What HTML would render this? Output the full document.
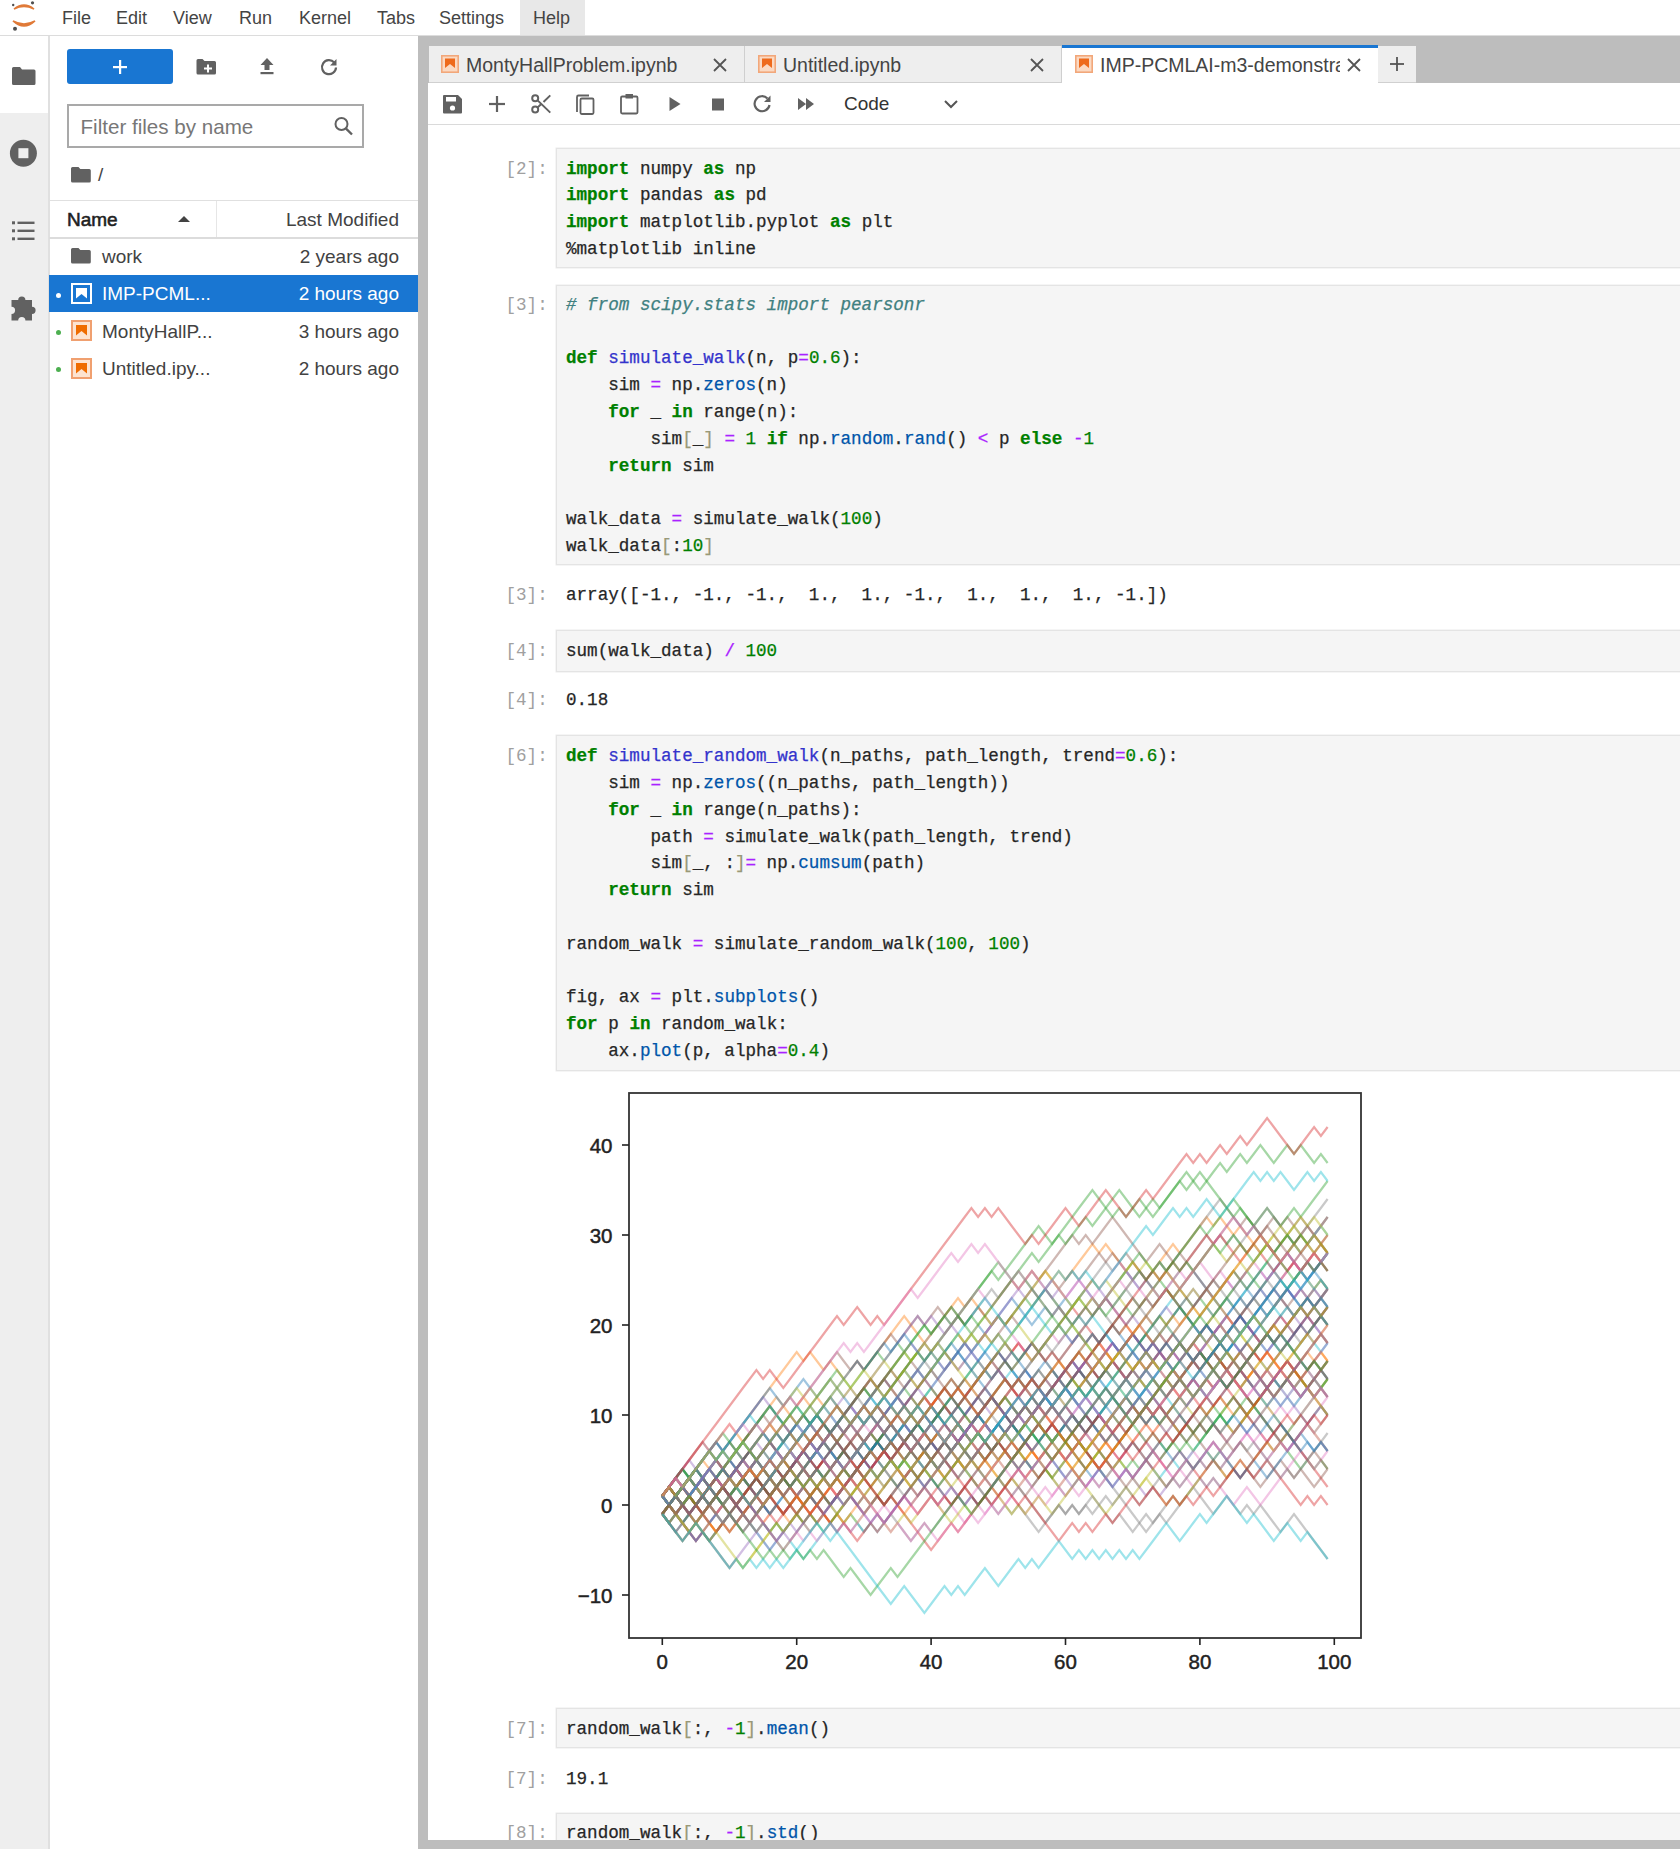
<!DOCTYPE html>
<html><head><meta charset="utf-8">
<style>
*{box-sizing:border-box;margin:0;padding:0}
html,body{width:1680px;height:1849px;overflow:hidden;background:#fff}
body{position:relative;font-family:"Liberation Sans",sans-serif;color:#333}
.abs{position:absolute}
.mono{font-family:"Liberation Mono",monospace}
#menubar{left:0;top:0;width:1680px;height:36px;border-bottom:1px solid #dcdcdc;background:#fff}
.mi{position:absolute;top:6px;font-size:18px;color:#444;line-height:24px;white-space:nowrap}
#leftbar{left:0;top:36px;width:50px;height:1813px;background:#eeeeee;border-right:2px solid #e0e0e0}
#leftactive{left:0;top:36px;width:48px;height:77px;background:#fff}
#filepanel{left:50px;top:36px;width:368px;height:1813px;background:#fff}
#splitter{left:418px;top:36px;width:10px;height:1813px;background:#bdbdbd}
#tabbar{left:428px;top:36px;width:1252px;height:47px;background:#bdbdbd}
.tab{position:absolute;top:10px;height:37px;background:#eeeeee;border-right:1px solid #cfcfcf;border-bottom:1px solid #d0d0d0}
.tabtxt{position:absolute;top:7px;font-size:19.5px;color:#444;white-space:nowrap;line-height:24px}
#toolbar{left:428px;top:83px;width:1252px;height:43px;background:#fff;border-bottom:2px solid #dadada}
#nb{left:428px;top:125px;width:1252px;height:1715px;background:#fff}
#bottombar{left:418px;top:1840px;width:1262px;height:9px;background:#bdbdbd}
.cell{position:absolute;left:556px;width:1130px;background:#f5f5f5;border:1px solid #e4e4e4;box-shadow:0 0 0 0.5px #ececec}
.prompt{position:absolute;left:505.5px;width:42px;text-align:left;font-family:"Liberation Mono",monospace;font-size:17.6px;color:#a0a0a0;line-height:27px;white-space:pre}
.code{position:absolute;left:566px;font-family:"Liberation Mono",monospace;font-size:17.6px;line-height:26.8px;color:#262626;white-space:pre;-webkit-text-stroke:0.25px currentColor}
.k{color:#008000;font-weight:bold}
.f{color:#0055aa}
.n{color:#008000}
.o{color:#aa22ff}
.c{color:#408080;font-style:italic}
.d{color:#3333cc}
.g{color:#999977}
.fr{font-size:19px;line-height:24px;color:#424242;white-space:nowrap}
.r{left:249px;width:150px;text-align:right}
</style></head><body>
<div id="menubar" class="abs">
<svg class="abs" style="left:0;top:0" width="48" height="36" viewBox="0 0 48 36">
<path d="M14 9 Q24 1 34 9 Q24 4 14 9Z" fill="#e07a38" stroke="#e07a38" stroke-width="1.5"/>
<path d="M13 21 Q24 31 35 21 Q24 27 13 21Z" fill="#e07a38" stroke="#e07a38" stroke-width="1.5"/>
<circle cx="13.2" cy="5" r="1.2" fill="#4e4e4e"/>
<circle cx="32.5" cy="2.8" r="1.6" fill="#4e4e4e"/>
<circle cx="15" cy="28.8" r="2" fill="#4e4e4e"/>
</svg>
<div class="abs" style="left:520px;top:0;width:65px;height:35px;background:#e8e8e8"></div>
<span class="mi" style="left:62px">File</span>
<span class="mi" style="left:116px">Edit</span>
<span class="mi" style="left:173px">View</span>
<span class="mi" style="left:239px">Run</span>
<span class="mi" style="left:299px">Kernel</span>
<span class="mi" style="left:377px">Tabs</span>
<span class="mi" style="left:439px">Settings</span>
<span class="mi" style="left:533px">Help</span>
</div>
<div id="leftbar" class="abs"></div>
<div id="leftactive" class="abs"></div>
<!-- sidebar icons -->
<svg class="abs" style="left:0;top:36px" width="48" height="300" viewBox="0 36 48 300">
<!-- folder -->
<path d="M12 67 h8 l2 2.5 h12 a1.5 1.5 0 0 1 1.5 1.5 v12.5 a1.5 1.5 0 0 1 -1.5 1.5 h-20.5 a1.5 1.5 0 0 1 -1.5 -1.5 v-15 a1.5 1.5 0 0 1 1.5 -1.5z" fill="#616161"/>
<!-- running -->
<circle cx="23.4" cy="153.2" r="13.5" fill="#616161"/>
<rect x="18.4" y="148.2" width="10" height="10" fill="#eeeeee"/>
<!-- toc -->
<rect x="12" y="221.3" width="3" height="3" fill="#616161"/>
<rect x="12" y="229.3" width="3" height="3" fill="#616161"/>
<rect x="12" y="237.3" width="3" height="3" fill="#616161"/>
<rect x="17.5" y="221.6" width="17" height="2.4" fill="#616161"/>
<rect x="17.5" y="229.6" width="17" height="2.4" fill="#616161"/>
<rect x="17.5" y="237.6" width="17" height="2.4" fill="#616161"/>
<!-- puzzle -->
<path d="M11.5 300 H18.2 a3.6 3.6 0 1 1 7.2 0 H32 V306.7 a3.6 3.6 0 1 1 0 7.2 V320.5 H25.4 a3.6 3.6 0 1 0 -7.2 0 H11.5 V313.9 a3.6 3.6 0 1 0 0 -7.2 Z" fill="#616161"/>
</svg>
<div id="filepanel" class="abs"></div>
<div class="abs" style="left:67px;top:49px;width:106px;height:35px;background:#1976d2;border-radius:3px"></div>
<svg class="abs" style="left:110px;top:57px" width="20" height="20" viewBox="0 0 20 20"><rect x="9" y="3" width="2.2" height="14" fill="#fff"/><rect x="3" y="9" width="14" height="2.2" fill="#fff"/></svg>
<!-- new folder -->
<svg class="abs" style="left:194px;top:56px" width="24" height="22" viewBox="0 0 24 22">
<path d="M2.5 3 h6 l2 2 h10 a1.5 1.5 0 0 1 1.5 1.5 v10.5 a1.5 1.5 0 0 1 -1.5 1.5 h-16.5 a1.5 1.5 0 0 1 -1.5 -1.5 v-12.5 a1.5 1.5 0 0 1 1.5 -1.5z" fill="#616161"/>
<rect x="13" y="8.5" width="2" height="8" fill="#fff"/><rect x="10" y="11.5" width="8" height="2" fill="#fff"/>
</svg>
<!-- upload -->
<svg class="abs" style="left:256px;top:56px" width="22" height="20" viewBox="0 0 22 20">
<path d="M11 2 L17.5 9 H13.5 V14 H8.5 V9 H4.5Z" fill="#616161"/><rect x="4.5" y="16" width="13" height="2.2" fill="#616161"/>
</svg>
<!-- refresh -->
<svg class="abs" style="left:318px;top:56px" width="22" height="22" viewBox="0 0 22 22">
<path d="M16.2 6.5 A7 7 0 1 0 18 11.5" fill="none" stroke="#616161" stroke-width="2.2"/><path d="M18.5 3 V9.5 H12Z" fill="#616161"/>
</svg>
<!-- filter -->
<div class="abs" style="left:67px;top:104px;width:297px;height:44px;border:2px solid #a9a9a9;background:#fff"></div>
<span class="abs" style="left:80.5px;top:115px;font-size:20.6px;line-height:24px;color:#777;white-space:nowrap">Filter files by name</span>
<svg class="abs" style="left:332px;top:115px" width="24" height="24" viewBox="0 0 24 24">
<circle cx="9.5" cy="9" r="6" fill="none" stroke="#616161" stroke-width="2"/><path d="M13.8 13.3 L20 19.5" stroke="#616161" stroke-width="2.4"/>
</svg>
<!-- breadcrumb -->
<svg class="abs" style="left:70px;top:165px" width="22" height="20" viewBox="0 0 22 20">
<path d="M2.5 2 h6 l1.8 2 h9 a1.5 1.5 0 0 1 1.5 1.5 v10.5 a1.5 1.5 0 0 1 -1.5 1.5 h-16.8 a1.5 1.5 0 0 1 -1.5 -1.5 v-12.5 a1.5 1.5 0 0 1 1.5 -1.5z" fill="#616161"/>
</svg>
<span class="abs" style="left:98px;top:163px;font-size:19px;line-height:24px;color:#444">/</span>
<!-- header -->
<div class="abs" style="left:49px;top:200px;width:369px;height:1px;background:#e0e0e0"></div>
<div class="abs" style="left:49px;top:237px;width:369px;height:2px;background:#dcdcdc"></div>
<div class="abs" style="left:216px;top:201px;width:1px;height:36px;background:#e6e6e6"></div>
<span class="abs" style="left:67px;top:208px;font-size:19px;line-height:24px;color:#212121;-webkit-text-stroke:0.55px #212121;white-space:nowrap">Name</span>
<svg class="abs" style="left:176px;top:214px" width="16" height="10" viewBox="0 0 16 10"><path d="M2 8 L8 2 L14 8Z" fill="#424242"/></svg>
<span class="abs" style="left:284px;top:208px;width:115px;text-align:right;font-size:19px;line-height:24px;color:#424242;white-space:nowrap">Last Modified</span>
<!-- rows -->
<svg class="abs" style="left:70px;top:246px" width="22" height="20" viewBox="0 0 22 20">
<path d="M2.5 2 h6 l1.8 2 h9 a1.5 1.5 0 0 1 1.5 1.5 v10.5 a1.5 1.5 0 0 1 -1.5 1.5 h-16.8 a1.5 1.5 0 0 1 -1.5 -1.5 v-12.5 a1.5 1.5 0 0 1 1.5 -1.5z" fill="#616161"/>
</svg>
<span class="abs fr" style="left:102px;top:245px">work</span>
<span class="abs fr r" style="top:245px">2 years ago</span>
<div class="abs" style="left:49px;top:275px;width:369px;height:37px;background:#1976d2"></div>
<div class="abs" style="left:55.5px;top:292.5px;width:5px;height:5px;border-radius:50%;background:#fff"></div>
<svg class="abs" style="left:71px;top:283px" width="21" height="21" viewBox="0 0 21 21"><rect x="1" y="1" width="19" height="19" fill="none" stroke="#fff" stroke-width="2"/><path d="M5 5 H16 V15.5 L10.5 11 L5 15.5Z" fill="#fff"/></svg>
<span class="abs fr" style="left:102px;top:282px;color:#fff">IMP-PCML...</span>
<span class="abs fr r" style="top:282px;color:#fff">2 hours ago</span>
<div class="abs" style="left:56px;top:330px;width:5px;height:5px;border-radius:50%;background:#4caf50"></div>
<svg class="abs" style="left:71px;top:320px" width="21" height="21" viewBox="0 0 21 21"><rect x="1" y="1" width="19" height="19" fill="#fde3d0" stroke="#f0a070" stroke-width="2"/><path d="M5 5 H16 V15.5 L10.5 11 L5 15.5Z" fill="#ef6c00"/></svg>
<span class="abs fr" style="left:102px;top:320px">MontyHallP...</span>
<span class="abs fr r" style="top:320px">3 hours ago</span>
<div class="abs" style="left:56px;top:367px;width:5px;height:5px;border-radius:50%;background:#4caf50"></div>
<svg class="abs" style="left:71px;top:358px" width="21" height="21" viewBox="0 0 21 21"><rect x="1" y="1" width="19" height="19" fill="#fde3d0" stroke="#f0a070" stroke-width="2"/><path d="M5 5 H16 V15.5 L10.5 11 L5 15.5Z" fill="#ef6c00"/></svg>
<span class="abs fr" style="left:102px;top:357px">Untitled.ipy...</span>
<span class="abs fr r" style="top:357px">2 hours ago</span>
<div id="splitter" class="abs"></div>
<div id="tabbar" class="abs"></div>
<div class="abs tab" style="left:429px;width:316px;top:46px"></div>
<div class="abs tab" style="left:745px;width:317px;top:46px"></div>
<div class="abs" style="left:1062px;top:45px;width:316px;height:38px;background:#fff;border-top:3px solid #1976d2"></div>
<div class="abs tab" style="left:1378px;width:38px;top:46px;border-right:none"></div>
<svg class="abs" style="left:441px;top:55px" width="18" height="18" viewBox="0 0 18 18"><rect x="0.8" y="0.8" width="16.4" height="16.4" fill="#fbd9c2" stroke="#f2a77a" stroke-width="1.6"/><path d="M4 3.5 H14 V13 L9 9 L4 13Z" fill="#ee6a1c"/></svg>
<span class="abs tabtxt" style="left:466px;top:53px">MontyHallProblem.ipynb</span>
<svg class="abs" style="left:711px;top:56px" width="18" height="18" viewBox="0 0 18 18"><path d="M3 3 L15 15 M15 3 L3 15" stroke="#555" stroke-width="1.8"/></svg>
<svg class="abs" style="left:758px;top:55px" width="18" height="18" viewBox="0 0 18 18"><rect x="0.8" y="0.8" width="16.4" height="16.4" fill="#fbd9c2" stroke="#f2a77a" stroke-width="1.6"/><path d="M4 3.5 H14 V13 L9 9 L4 13Z" fill="#ee6a1c"/></svg>
<span class="abs tabtxt" style="left:783px;top:53px">Untitled.ipynb</span>
<svg class="abs" style="left:1028px;top:56px" width="18" height="18" viewBox="0 0 18 18"><path d="M3 3 L15 15 M15 3 L3 15" stroke="#555" stroke-width="1.8"/></svg>
<svg class="abs" style="left:1075px;top:55px" width="18" height="18" viewBox="0 0 18 18"><rect x="0.8" y="0.8" width="16.4" height="16.4" fill="#fbd9c2" stroke="#f2a77a" stroke-width="1.6"/><path d="M4 3.5 H14 V13 L9 9 L4 13Z" fill="#ee6a1c"/></svg>
<div class="abs" style="left:1100px;top:53px;width:240px;overflow:hidden"><span class="tabtxt" style="position:static">IMP-PCMLAI-m3-demonstration</span></div>
<svg class="abs" style="left:1345px;top:56px" width="18" height="18" viewBox="0 0 18 18"><path d="M3 3 L15 15 M15 3 L3 15" stroke="#555" stroke-width="1.8"/></svg>
<svg class="abs" style="left:1388px;top:55px" width="18" height="18" viewBox="0 0 18 18"><rect x="8.1" y="2" width="1.8" height="14" fill="#555"/><rect x="2" y="8.1" width="14" height="1.8" fill="#555"/></svg>
<div id="toolbar" class="abs"></div>
<!-- toolbar icons -->
<svg class="abs" style="left:428px;top:83px" width="560" height="42" viewBox="428 83 560 42">
<!-- save -->
<path d="M444 95 h14 l4 4 v13.5 a1 1 0 0 1 -1 1 h-17 a1 1 0 0 1 -1 -1 v-16.5 a1 1 0 0 1 1 -1z" fill="#616161"/>
<rect x="446" y="97" width="10" height="4.5" fill="#fff"/>
<circle cx="452.5" cy="108" r="2.6" fill="#fff"/>
<!-- plus -->
<rect x="495.9" y="96" width="2.2" height="16" fill="#616161"/><rect x="489" y="102.9" width="16" height="2.2" fill="#616161"/>
<!-- scissors -->
<circle cx="535.2" cy="98.2" r="3" fill="none" stroke="#616161" stroke-width="2"/>
<circle cx="535.2" cy="109.6" r="3" fill="none" stroke="#616161" stroke-width="2"/>
<path d="M537.6 100.4 L550.3 112.6 M537.6 107.4 L541.5 103.8 M543.5 102 L550.3 95.4" stroke="#616161" stroke-width="2"/>
<!-- copy -->
<path d="M577 112 V97 a1.5 1.5 0 0 1 1.5 -1.5 H589" fill="none" stroke="#616161" stroke-width="1.8"/>
<rect x="580.5" y="98.5" width="13" height="15.5" rx="1.2" fill="none" stroke="#616161" stroke-width="1.8"/>
<!-- paste -->
<rect x="621" y="96.5" width="16.5" height="17" rx="1.2" fill="none" stroke="#616161" stroke-width="1.8"/>
<rect x="625.5" y="94" width="7.5" height="4.5" fill="#616161"/>
<!-- run -->
<path d="M669.5 97 L680.5 104 L669.5 111Z" fill="#616161"/>
<!-- stop -->
<rect x="712" y="98.5" width="12" height="12" fill="#616161"/>
<!-- restart -->
<path d="M767.5 98.5 A7.5 7.5 0 1 0 769.5 105" fill="none" stroke="#616161" stroke-width="2.2"/><path d="M770.5 95.5 V102 H764Z" fill="#616161"/>
<!-- fast forward -->
<path d="M798 98 L806 104 L798 110Z M806 98 L814 104 L806 110Z" fill="#616161"/>
<!-- chevron -->
<path d="M945 101 L951 107 L957 101" fill="none" stroke="#555" stroke-width="2"/>
</svg>
<span class="abs" style="left:844px;top:92px;font-size:19px;line-height:24px;color:#333">Code</span>
<div id="nb" class="abs"></div>
<!-- cell 2 -->
<div class="cell" style="top:148px;height:120px"></div>
<div class="prompt" style="top:155.7px">[2]:</div>
<div class="code" style="top:155.7px"><span class="k">import</span> numpy <span class="k">as</span> np
<span class="k">import</span> pandas <span class="k">as</span> pd
<span class="k">import</span> matplotlib.pyplot <span class="k">as</span> plt
%matplotlib inline</div>
<!-- cell 3 -->
<div class="cell" style="top:285px;height:280px"></div>
<div class="prompt" style="top:291.75px">[3]:</div>
<div class="code" style="top:291.75px"><span class="c"># from scipy.stats import pearsonr</span>

<span class="k">def</span> <span class="d">simulate_walk</span>(n, p<span class="o">=</span><span class="n">0.6</span>):
    sim <span class="o">=</span> np.<span class="f">zeros</span>(n)
    <span class="k">for</span> _ <span class="k">in</span> range(n):
        sim<span class="g">[</span>_<span class="g">]</span> <span class="o">=</span> <span class="n">1</span> <span class="k">if</span> np.<span class="f">random</span>.<span class="f">rand</span>() <span class="o">&lt;</span> p <span class="k">else</span> <span class="o">-</span><span class="n">1</span>
    <span class="k">return</span> sim

walk_data <span class="o">=</span> simulate_walk(<span class="n">100</span>)
walk_data<span class="g">[</span>:<span class="n">10</span><span class="g">]</span></div>
<div class="prompt" style="top:581.75px">[3]:</div>
<div class="code" style="top:581.75px">array([-1., -1., -1.,  1.,  1., -1.,  1.,  1.,  1., -1.])</div>
<!-- cell 4 -->
<div class="cell" style="top:630px;height:42px"></div>
<div class="prompt" style="top:638px">[4]:</div>
<div class="code" style="top:638px">sum(walk_data) <span class="o">/</span> <span class="n">100</span></div>
<div class="prompt" style="top:687px">[4]:</div>
<div class="code" style="top:687px">0.18</div>
<!-- cell 6 -->
<div class="cell" style="top:735px;height:336px"></div>
<div class="prompt" style="top:743.15px">[6]:</div>
<div class="code" style="top:743.15px"><span class="k">def</span> <span class="d">simulate_random_walk</span>(n_paths, path_length, trend<span class="o">=</span><span class="n">0.6</span>):
    sim <span class="o">=</span> np.<span class="f">zeros</span>((n_paths, path_length))
    <span class="k">for</span> _ <span class="k">in</span> range(n_paths):
        path <span class="o">=</span> simulate_walk(path_length, trend)
        sim<span class="g">[</span>_, :<span class="g">]</span><span class="o">=</span> np.<span class="f">cumsum</span>(path)
    <span class="k">return</span> sim

random_walk <span class="o">=</span> simulate_random_walk(<span class="n">100</span>, <span class="n">100</span>)

fig, ax <span class="o">=</span> plt.<span class="f">subplots</span>()
<span class="k">for</span> p <span class="k">in</span> random_walk:
    ax.<span class="f">plot</span>(p, alpha<span class="o">=</span><span class="n">0.4</span>)</div>
<svg class="abs" style="left:0;top:0" width="1680" height="1849" viewBox="0 0 1680 1849">
<rect x="629" y="1093" width="732" height="545" fill="#fff"/>
<defs><clipPath id="axclip"><rect x="629" y="1093" width="732" height="545"/></clipPath></defs>
<g clip-path="url(#axclip)" fill="none" stroke-width="2.2" stroke-opacity="0.42" stroke-linejoin="miter"><path d="M662.3 1514.0 L669.0 1505.0 L675.7 1496.0 L682.5 1505.0 L689.2 1496.0 L695.9 1487.0 L702.6 1478.0 L709.3 1469.0 L716.1 1460.0 L722.8 1469.0 L729.5 1478.0 L736.2 1469.0 L742.9 1460.0 L749.7 1451.0 L756.4 1460.0 L763.1 1451.0 L769.8 1442.0 L776.5 1433.0 L783.3 1442.0 L790.0 1451.0 L796.7 1442.0 L803.4 1433.0 L810.1 1424.0 L816.9 1415.0 L823.6 1424.0 L830.3 1433.0 L837.0 1442.0 L843.7 1433.0 L850.5 1424.0 L857.2 1415.0 L863.9 1406.0 L870.6 1397.0 L877.3 1406.0 L884.1 1415.0 L890.8 1406.0 L897.5 1397.0 L904.2 1406.0 L910.9 1415.0 L917.7 1424.0 L924.4 1433.0 L931.1 1442.0 L937.8 1451.0 L944.5 1442.0 L951.3 1433.0 L958.0 1442.0 L964.7 1433.0 L971.4 1442.0 L978.1 1433.0 L984.9 1442.0 L991.6 1451.0 L998.3 1442.0 L1005.0 1433.0 L1011.7 1424.0 L1018.5 1433.0 L1025.2 1442.0 L1031.9 1433.0 L1038.6 1442.0 L1045.3 1451.0 L1052.1 1442.0 L1058.8 1433.0 L1065.5 1424.0 L1072.2 1415.0 L1078.9 1424.0 L1085.7 1433.0 L1092.4 1424.0 L1099.1 1415.0 L1105.8 1406.0 L1112.5 1397.0 L1119.3 1388.0 L1126.0 1379.0 L1132.7 1388.0 L1139.4 1397.0 L1146.1 1388.0 L1152.9 1379.0 L1159.6 1388.0 L1166.3 1379.0 L1173.0 1370.0 L1179.7 1379.0 L1186.5 1388.0 L1193.2 1379.0 L1199.9 1388.0 L1206.6 1379.0 L1213.3 1370.0 L1220.1 1361.0 L1226.8 1370.0 L1233.5 1379.0 L1240.2 1370.0 L1246.9 1379.0 L1253.7 1388.0 L1260.4 1379.0 L1267.1 1388.0 L1273.8 1379.0 L1280.5 1388.0 L1287.3 1379.0 L1294.0 1370.0 L1300.7 1361.0 L1307.4 1370.0 L1314.1 1361.0 L1320.9 1370.0 L1327.6 1361.0" stroke="#1f77b4"/><path d="M662.3 1514.0 L669.0 1505.0 L675.7 1496.0 L682.5 1487.0 L689.2 1478.0 L695.9 1469.0 L702.6 1460.0 L709.3 1469.0 L716.1 1460.0 L722.8 1451.0 L729.5 1442.0 L736.2 1433.0 L742.9 1424.0 L749.7 1415.0 L756.4 1406.0 L763.1 1397.0 L769.8 1388.0 L776.5 1379.0 L783.3 1370.0 L790.0 1361.0 L796.7 1352.0 L803.4 1361.0 L810.1 1352.0 L816.9 1361.0 L823.6 1370.0 L830.3 1361.0 L837.0 1370.0 L843.7 1379.0 L850.5 1370.0 L857.2 1361.0 L863.9 1370.0 L870.6 1361.0 L877.3 1352.0 L884.1 1343.0 L890.8 1334.0 L897.5 1325.0 L904.2 1316.0 L910.9 1325.0 L917.7 1334.0 L924.4 1343.0 L931.1 1334.0 L937.8 1325.0 L944.5 1316.0 L951.3 1307.0 L958.0 1298.0 L964.7 1307.0 L971.4 1298.0 L978.1 1307.0 L984.9 1316.0 L991.6 1307.0 L998.3 1298.0 L1005.0 1289.0 L1011.7 1280.0 L1018.5 1289.0 L1025.2 1280.0 L1031.9 1271.0 L1038.6 1280.0 L1045.3 1271.0 L1052.1 1280.0 L1058.8 1271.0 L1065.5 1280.0 L1072.2 1271.0 L1078.9 1262.0 L1085.7 1253.0 L1092.4 1244.0 L1099.1 1253.0 L1105.8 1244.0 L1112.5 1253.0 L1119.3 1262.0 L1126.0 1271.0 L1132.7 1262.0 L1139.4 1271.0 L1146.1 1280.0 L1152.9 1271.0 L1159.6 1262.0 L1166.3 1253.0 L1173.0 1244.0 L1179.7 1253.0 L1186.5 1244.0 L1193.2 1235.0 L1199.9 1226.0 L1206.6 1217.0 L1213.3 1226.0 L1220.1 1217.0 L1226.8 1226.0 L1233.5 1235.0 L1240.2 1226.0 L1246.9 1235.0 L1253.7 1244.0 L1260.4 1235.0 L1267.1 1244.0 L1273.8 1253.0 L1280.5 1262.0 L1287.3 1253.0 L1294.0 1244.0 L1300.7 1235.0 L1307.4 1244.0 L1314.1 1235.0 L1320.9 1244.0 L1327.6 1235.0" stroke="#ff7f0e"/><path d="M662.3 1514.0 L669.0 1505.0 L675.7 1496.0 L682.5 1487.0 L689.2 1478.0 L695.9 1487.0 L702.6 1496.0 L709.3 1505.0 L716.1 1496.0 L722.8 1505.0 L729.5 1496.0 L736.2 1487.0 L742.9 1478.0 L749.7 1469.0 L756.4 1478.0 L763.1 1487.0 L769.8 1478.0 L776.5 1487.0 L783.3 1478.0 L790.0 1469.0 L796.7 1460.0 L803.4 1451.0 L810.1 1442.0 L816.9 1433.0 L823.6 1424.0 L830.3 1415.0 L837.0 1406.0 L843.7 1415.0 L850.5 1406.0 L857.2 1397.0 L863.9 1388.0 L870.6 1397.0 L877.3 1388.0 L884.1 1379.0 L890.8 1370.0 L897.5 1361.0 L904.2 1352.0 L910.9 1343.0 L917.7 1334.0 L924.4 1325.0 L931.1 1334.0 L937.8 1325.0 L944.5 1316.0 L951.3 1325.0 L958.0 1316.0 L964.7 1325.0 L971.4 1334.0 L978.1 1343.0 L984.9 1334.0 L991.6 1325.0 L998.3 1316.0 L1005.0 1325.0 L1011.7 1316.0 L1018.5 1307.0 L1025.2 1298.0 L1031.9 1307.0 L1038.6 1298.0 L1045.3 1289.0 L1052.1 1298.0 L1058.8 1307.0 L1065.5 1316.0 L1072.2 1325.0 L1078.9 1334.0 L1085.7 1343.0 L1092.4 1352.0 L1099.1 1343.0 L1105.8 1334.0 L1112.5 1325.0 L1119.3 1316.0 L1126.0 1307.0 L1132.7 1316.0 L1139.4 1307.0 L1146.1 1298.0 L1152.9 1289.0 L1159.6 1280.0 L1166.3 1289.0 L1173.0 1298.0 L1179.7 1289.0 L1186.5 1298.0 L1193.2 1307.0 L1199.9 1298.0 L1206.6 1307.0 L1213.3 1298.0 L1220.1 1289.0 L1226.8 1280.0 L1233.5 1271.0 L1240.2 1280.0 L1246.9 1271.0 L1253.7 1280.0 L1260.4 1289.0 L1267.1 1280.0 L1273.8 1271.0 L1280.5 1280.0 L1287.3 1289.0 L1294.0 1280.0 L1300.7 1271.0 L1307.4 1262.0 L1314.1 1253.0 L1320.9 1262.0 L1327.6 1253.0" stroke="#2ca02c"/><path d="M662.3 1496.0 L669.0 1505.0 L675.7 1496.0 L682.5 1487.0 L689.2 1478.0 L695.9 1469.0 L702.6 1460.0 L709.3 1451.0 L716.1 1460.0 L722.8 1469.0 L729.5 1460.0 L736.2 1469.0 L742.9 1460.0 L749.7 1469.0 L756.4 1460.0 L763.1 1451.0 L769.8 1442.0 L776.5 1451.0 L783.3 1460.0 L790.0 1469.0 L796.7 1478.0 L803.4 1469.0 L810.1 1460.0 L816.9 1451.0 L823.6 1442.0 L830.3 1433.0 L837.0 1424.0 L843.7 1415.0 L850.5 1424.0 L857.2 1433.0 L863.9 1424.0 L870.6 1415.0 L877.3 1406.0 L884.1 1415.0 L890.8 1424.0 L897.5 1415.0 L904.2 1406.0 L910.9 1397.0 L917.7 1406.0 L924.4 1397.0 L931.1 1406.0 L937.8 1415.0 L944.5 1406.0 L951.3 1415.0 L958.0 1406.0 L964.7 1397.0 L971.4 1388.0 L978.1 1379.0 L984.9 1370.0 L991.6 1361.0 L998.3 1352.0 L1005.0 1343.0 L1011.7 1352.0 L1018.5 1343.0 L1025.2 1352.0 L1031.9 1361.0 L1038.6 1352.0 L1045.3 1343.0 L1052.1 1334.0 L1058.8 1325.0 L1065.5 1316.0 L1072.2 1307.0 L1078.9 1316.0 L1085.7 1307.0 L1092.4 1316.0 L1099.1 1307.0 L1105.8 1298.0 L1112.5 1307.0 L1119.3 1316.0 L1126.0 1325.0 L1132.7 1334.0 L1139.4 1343.0 L1146.1 1334.0 L1152.9 1343.0 L1159.6 1352.0 L1166.3 1361.0 L1173.0 1352.0 L1179.7 1361.0 L1186.5 1370.0 L1193.2 1361.0 L1199.9 1352.0 L1206.6 1361.0 L1213.3 1370.0 L1220.1 1379.0 L1226.8 1388.0 L1233.5 1397.0 L1240.2 1406.0 L1246.9 1415.0 L1253.7 1424.0 L1260.4 1433.0 L1267.1 1442.0 L1273.8 1451.0 L1280.5 1442.0 L1287.3 1451.0 L1294.0 1442.0 L1300.7 1451.0 L1307.4 1460.0 L1314.1 1469.0 L1320.9 1478.0 L1327.6 1487.0" stroke="#d62728"/><path d="M662.3 1496.0 L669.0 1487.0 L675.7 1496.0 L682.5 1487.0 L689.2 1478.0 L695.9 1469.0 L702.6 1478.0 L709.3 1487.0 L716.1 1478.0 L722.8 1469.0 L729.5 1460.0 L736.2 1451.0 L742.9 1460.0 L749.7 1451.0 L756.4 1442.0 L763.1 1451.0 L769.8 1442.0 L776.5 1451.0 L783.3 1460.0 L790.0 1451.0 L796.7 1442.0 L803.4 1451.0 L810.1 1442.0 L816.9 1451.0 L823.6 1442.0 L830.3 1451.0 L837.0 1460.0 L843.7 1469.0 L850.5 1460.0 L857.2 1451.0 L863.9 1442.0 L870.6 1433.0 L877.3 1424.0 L884.1 1415.0 L890.8 1424.0 L897.5 1433.0 L904.2 1442.0 L910.9 1451.0 L917.7 1442.0 L924.4 1433.0 L931.1 1424.0 L937.8 1433.0 L944.5 1442.0 L951.3 1433.0 L958.0 1424.0 L964.7 1415.0 L971.4 1406.0 L978.1 1397.0 L984.9 1388.0 L991.6 1379.0 L998.3 1370.0 L1005.0 1361.0 L1011.7 1370.0 L1018.5 1379.0 L1025.2 1370.0 L1031.9 1379.0 L1038.6 1388.0 L1045.3 1379.0 L1052.1 1388.0 L1058.8 1397.0 L1065.5 1388.0 L1072.2 1379.0 L1078.9 1370.0 L1085.7 1379.0 L1092.4 1370.0 L1099.1 1379.0 L1105.8 1370.0 L1112.5 1379.0 L1119.3 1370.0 L1126.0 1379.0 L1132.7 1370.0 L1139.4 1361.0 L1146.1 1352.0 L1152.9 1361.0 L1159.6 1352.0 L1166.3 1361.0 L1173.0 1352.0 L1179.7 1343.0 L1186.5 1334.0 L1193.2 1325.0 L1199.9 1334.0 L1206.6 1325.0 L1213.3 1334.0 L1220.1 1343.0 L1226.8 1334.0 L1233.5 1325.0 L1240.2 1316.0 L1246.9 1325.0 L1253.7 1334.0 L1260.4 1343.0 L1267.1 1334.0 L1273.8 1325.0 L1280.5 1316.0 L1287.3 1325.0 L1294.0 1316.0 L1300.7 1325.0 L1307.4 1316.0 L1314.1 1325.0 L1320.9 1334.0 L1327.6 1325.0" stroke="#9467bd"/><path d="M662.3 1496.0 L669.0 1487.0 L675.7 1496.0 L682.5 1487.0 L689.2 1478.0 L695.9 1469.0 L702.6 1478.0 L709.3 1469.0 L716.1 1460.0 L722.8 1469.0 L729.5 1460.0 L736.2 1451.0 L742.9 1442.0 L749.7 1433.0 L756.4 1424.0 L763.1 1415.0 L769.8 1406.0 L776.5 1415.0 L783.3 1406.0 L790.0 1397.0 L796.7 1406.0 L803.4 1397.0 L810.1 1388.0 L816.9 1379.0 L823.6 1370.0 L830.3 1361.0 L837.0 1352.0 L843.7 1361.0 L850.5 1370.0 L857.2 1361.0 L863.9 1370.0 L870.6 1361.0 L877.3 1352.0 L884.1 1343.0 L890.8 1334.0 L897.5 1343.0 L904.2 1334.0 L910.9 1325.0 L917.7 1316.0 L924.4 1325.0 L931.1 1316.0 L937.8 1307.0 L944.5 1316.0 L951.3 1307.0 L958.0 1316.0 L964.7 1325.0 L971.4 1316.0 L978.1 1307.0 L984.9 1316.0 L991.6 1325.0 L998.3 1316.0 L1005.0 1325.0 L1011.7 1316.0 L1018.5 1307.0 L1025.2 1298.0 L1031.9 1289.0 L1038.6 1280.0 L1045.3 1271.0 L1052.1 1262.0 L1058.8 1253.0 L1065.5 1244.0 L1072.2 1235.0 L1078.9 1244.0 L1085.7 1235.0 L1092.4 1244.0 L1099.1 1235.0 L1105.8 1226.0 L1112.5 1217.0 L1119.3 1226.0 L1126.0 1235.0 L1132.7 1244.0 L1139.4 1253.0 L1146.1 1262.0 L1152.9 1253.0 L1159.6 1244.0 L1166.3 1253.0 L1173.0 1262.0 L1179.7 1253.0 L1186.5 1262.0 L1193.2 1271.0 L1199.9 1262.0 L1206.6 1253.0 L1213.3 1244.0 L1220.1 1235.0 L1226.8 1226.0 L1233.5 1217.0 L1240.2 1226.0 L1246.9 1217.0 L1253.7 1226.0 L1260.4 1235.0 L1267.1 1226.0 L1273.8 1217.0 L1280.5 1226.0 L1287.3 1217.0 L1294.0 1226.0 L1300.7 1217.0 L1307.4 1226.0 L1314.1 1235.0 L1320.9 1226.0 L1327.6 1217.0" stroke="#8c564b"/><path d="M662.3 1514.0 L669.0 1505.0 L675.7 1496.0 L682.5 1505.0 L689.2 1496.0 L695.9 1505.0 L702.6 1496.0 L709.3 1505.0 L716.1 1496.0 L722.8 1487.0 L729.5 1496.0 L736.2 1505.0 L742.9 1514.0 L749.7 1505.0 L756.4 1514.0 L763.1 1505.0 L769.8 1496.0 L776.5 1487.0 L783.3 1478.0 L790.0 1469.0 L796.7 1478.0 L803.4 1469.0 L810.1 1460.0 L816.9 1451.0 L823.6 1442.0 L830.3 1433.0 L837.0 1424.0 L843.7 1433.0 L850.5 1442.0 L857.2 1451.0 L863.9 1460.0 L870.6 1451.0 L877.3 1442.0 L884.1 1451.0 L890.8 1460.0 L897.5 1451.0 L904.2 1442.0 L910.9 1451.0 L917.7 1442.0 L924.4 1451.0 L931.1 1460.0 L937.8 1469.0 L944.5 1478.0 L951.3 1469.0 L958.0 1460.0 L964.7 1451.0 L971.4 1442.0 L978.1 1433.0 L984.9 1424.0 L991.6 1433.0 L998.3 1424.0 L1005.0 1415.0 L1011.7 1424.0 L1018.5 1433.0 L1025.2 1424.0 L1031.9 1415.0 L1038.6 1406.0 L1045.3 1415.0 L1052.1 1424.0 L1058.8 1433.0 L1065.5 1424.0 L1072.2 1433.0 L1078.9 1442.0 L1085.7 1451.0 L1092.4 1442.0 L1099.1 1433.0 L1105.8 1442.0 L1112.5 1451.0 L1119.3 1460.0 L1126.0 1451.0 L1132.7 1442.0 L1139.4 1433.0 L1146.1 1424.0 L1152.9 1433.0 L1159.6 1424.0 L1166.3 1433.0 L1173.0 1424.0 L1179.7 1433.0 L1186.5 1424.0 L1193.2 1433.0 L1199.9 1424.0 L1206.6 1433.0 L1213.3 1424.0 L1220.1 1433.0 L1226.8 1442.0 L1233.5 1433.0 L1240.2 1424.0 L1246.9 1415.0 L1253.7 1406.0 L1260.4 1397.0 L1267.1 1406.0 L1273.8 1415.0 L1280.5 1406.0 L1287.3 1415.0 L1294.0 1406.0 L1300.7 1397.0 L1307.4 1388.0 L1314.1 1397.0 L1320.9 1388.0 L1327.6 1379.0" stroke="#e377c2"/><path d="M662.3 1496.0 L669.0 1505.0 L675.7 1514.0 L682.5 1523.0 L689.2 1514.0 L695.9 1523.0 L702.6 1514.0 L709.3 1505.0 L716.1 1496.0 L722.8 1487.0 L729.5 1496.0 L736.2 1505.0 L742.9 1496.0 L749.7 1505.0 L756.4 1514.0 L763.1 1523.0 L769.8 1532.0 L776.5 1523.0 L783.3 1532.0 L790.0 1523.0 L796.7 1514.0 L803.4 1505.0 L810.1 1514.0 L816.9 1505.0 L823.6 1514.0 L830.3 1505.0 L837.0 1514.0 L843.7 1523.0 L850.5 1532.0 L857.2 1523.0 L863.9 1532.0 L870.6 1523.0 L877.3 1514.0 L884.1 1523.0 L890.8 1514.0 L897.5 1523.0 L904.2 1532.0 L910.9 1541.0 L917.7 1532.0 L924.4 1523.0 L931.1 1532.0 L937.8 1523.0 L944.5 1514.0 L951.3 1505.0 L958.0 1496.0 L964.7 1505.0 L971.4 1496.0 L978.1 1505.0 L984.9 1496.0 L991.6 1505.0 L998.3 1496.0 L1005.0 1487.0 L1011.7 1478.0 L1018.5 1469.0 L1025.2 1478.0 L1031.9 1487.0 L1038.6 1478.0 L1045.3 1469.0 L1052.1 1478.0 L1058.8 1487.0 L1065.5 1496.0 L1072.2 1487.0 L1078.9 1478.0 L1085.7 1487.0 L1092.4 1478.0 L1099.1 1487.0 L1105.8 1478.0 L1112.5 1487.0 L1119.3 1496.0 L1126.0 1505.0 L1132.7 1514.0 L1139.4 1523.0 L1146.1 1514.0 L1152.9 1523.0 L1159.6 1514.0 L1166.3 1505.0 L1173.0 1496.0 L1179.7 1505.0 L1186.5 1496.0 L1193.2 1487.0 L1199.9 1496.0 L1206.6 1505.0 L1213.3 1514.0 L1220.1 1505.0 L1226.8 1496.0 L1233.5 1505.0 L1240.2 1514.0 L1246.9 1505.0 L1253.7 1514.0 L1260.4 1505.0 L1267.1 1514.0 L1273.8 1523.0 L1280.5 1532.0 L1287.3 1523.0 L1294.0 1514.0 L1300.7 1523.0 L1307.4 1532.0 L1314.1 1541.0 L1320.9 1550.0 L1327.6 1559.0" stroke="#7f7f7f"/><path d="M662.3 1514.0 L669.0 1523.0 L675.7 1514.0 L682.5 1523.0 L689.2 1514.0 L695.9 1505.0 L702.6 1496.0 L709.3 1505.0 L716.1 1496.0 L722.8 1505.0 L729.5 1496.0 L736.2 1505.0 L742.9 1496.0 L749.7 1487.0 L756.4 1496.0 L763.1 1505.0 L769.8 1496.0 L776.5 1487.0 L783.3 1478.0 L790.0 1469.0 L796.7 1478.0 L803.4 1469.0 L810.1 1478.0 L816.9 1469.0 L823.6 1460.0 L830.3 1469.0 L837.0 1460.0 L843.7 1451.0 L850.5 1442.0 L857.2 1433.0 L863.9 1442.0 L870.6 1433.0 L877.3 1442.0 L884.1 1451.0 L890.8 1442.0 L897.5 1451.0 L904.2 1460.0 L910.9 1451.0 L917.7 1442.0 L924.4 1451.0 L931.1 1460.0 L937.8 1451.0 L944.5 1442.0 L951.3 1433.0 L958.0 1442.0 L964.7 1451.0 L971.4 1460.0 L978.1 1469.0 L984.9 1460.0 L991.6 1451.0 L998.3 1442.0 L1005.0 1433.0 L1011.7 1442.0 L1018.5 1451.0 L1025.2 1460.0 L1031.9 1469.0 L1038.6 1460.0 L1045.3 1451.0 L1052.1 1442.0 L1058.8 1451.0 L1065.5 1460.0 L1072.2 1469.0 L1078.9 1460.0 L1085.7 1451.0 L1092.4 1460.0 L1099.1 1451.0 L1105.8 1442.0 L1112.5 1433.0 L1119.3 1424.0 L1126.0 1415.0 L1132.7 1406.0 L1139.4 1397.0 L1146.1 1406.0 L1152.9 1415.0 L1159.6 1406.0 L1166.3 1415.0 L1173.0 1424.0 L1179.7 1415.0 L1186.5 1424.0 L1193.2 1433.0 L1199.9 1442.0 L1206.6 1433.0 L1213.3 1424.0 L1220.1 1415.0 L1226.8 1406.0 L1233.5 1397.0 L1240.2 1388.0 L1246.9 1397.0 L1253.7 1406.0 L1260.4 1415.0 L1267.1 1406.0 L1273.8 1415.0 L1280.5 1424.0 L1287.3 1433.0 L1294.0 1442.0 L1300.7 1433.0 L1307.4 1424.0 L1314.1 1433.0 L1320.9 1442.0 L1327.6 1451.0" stroke="#bcbd22"/><path d="M662.3 1514.0 L669.0 1523.0 L675.7 1514.0 L682.5 1505.0 L689.2 1514.0 L695.9 1523.0 L702.6 1532.0 L709.3 1541.0 L716.1 1532.0 L722.8 1523.0 L729.5 1514.0 L736.2 1505.0 L742.9 1514.0 L749.7 1523.0 L756.4 1532.0 L763.1 1541.0 L769.8 1550.0 L776.5 1541.0 L783.3 1550.0 L790.0 1541.0 L796.7 1550.0 L803.4 1559.0 L810.1 1550.0 L816.9 1541.0 L823.6 1532.0 L830.3 1541.0 L837.0 1532.0 L843.7 1523.0 L850.5 1514.0 L857.2 1523.0 L863.9 1532.0 L870.6 1523.0 L877.3 1532.0 L884.1 1523.0 L890.8 1514.0 L897.5 1505.0 L904.2 1496.0 L910.9 1487.0 L917.7 1478.0 L924.4 1469.0 L931.1 1460.0 L937.8 1469.0 L944.5 1460.0 L951.3 1469.0 L958.0 1460.0 L964.7 1469.0 L971.4 1478.0 L978.1 1469.0 L984.9 1478.0 L991.6 1469.0 L998.3 1460.0 L1005.0 1451.0 L1011.7 1442.0 L1018.5 1433.0 L1025.2 1424.0 L1031.9 1415.0 L1038.6 1424.0 L1045.3 1415.0 L1052.1 1406.0 L1058.8 1397.0 L1065.5 1388.0 L1072.2 1397.0 L1078.9 1406.0 L1085.7 1415.0 L1092.4 1406.0 L1099.1 1415.0 L1105.8 1406.0 L1112.5 1397.0 L1119.3 1388.0 L1126.0 1379.0 L1132.7 1388.0 L1139.4 1379.0 L1146.1 1388.0 L1152.9 1397.0 L1159.6 1406.0 L1166.3 1415.0 L1173.0 1406.0 L1179.7 1397.0 L1186.5 1388.0 L1193.2 1379.0 L1199.9 1370.0 L1206.6 1379.0 L1213.3 1370.0 L1220.1 1361.0 L1226.8 1352.0 L1233.5 1361.0 L1240.2 1370.0 L1246.9 1361.0 L1253.7 1352.0 L1260.4 1343.0 L1267.1 1352.0 L1273.8 1343.0 L1280.5 1334.0 L1287.3 1343.0 L1294.0 1352.0 L1300.7 1343.0 L1307.4 1334.0 L1314.1 1325.0 L1320.9 1316.0 L1327.6 1325.0" stroke="#17becf"/><path d="M662.3 1496.0 L669.0 1487.0 L675.7 1496.0 L682.5 1487.0 L689.2 1478.0 L695.9 1469.0 L702.6 1460.0 L709.3 1451.0 L716.1 1442.0 L722.8 1451.0 L729.5 1460.0 L736.2 1469.0 L742.9 1478.0 L749.7 1469.0 L756.4 1460.0 L763.1 1469.0 L769.8 1460.0 L776.5 1469.0 L783.3 1478.0 L790.0 1469.0 L796.7 1460.0 L803.4 1469.0 L810.1 1478.0 L816.9 1469.0 L823.6 1478.0 L830.3 1487.0 L837.0 1478.0 L843.7 1469.0 L850.5 1478.0 L857.2 1469.0 L863.9 1460.0 L870.6 1469.0 L877.3 1460.0 L884.1 1451.0 L890.8 1442.0 L897.5 1451.0 L904.2 1442.0 L910.9 1433.0 L917.7 1424.0 L924.4 1415.0 L931.1 1406.0 L937.8 1397.0 L944.5 1406.0 L951.3 1397.0 L958.0 1406.0 L964.7 1397.0 L971.4 1388.0 L978.1 1379.0 L984.9 1370.0 L991.6 1361.0 L998.3 1352.0 L1005.0 1361.0 L1011.7 1370.0 L1018.5 1379.0 L1025.2 1370.0 L1031.9 1379.0 L1038.6 1370.0 L1045.3 1361.0 L1052.1 1370.0 L1058.8 1379.0 L1065.5 1388.0 L1072.2 1397.0 L1078.9 1388.0 L1085.7 1397.0 L1092.4 1406.0 L1099.1 1415.0 L1105.8 1424.0 L1112.5 1433.0 L1119.3 1442.0 L1126.0 1433.0 L1132.7 1424.0 L1139.4 1415.0 L1146.1 1406.0 L1152.9 1415.0 L1159.6 1406.0 L1166.3 1415.0 L1173.0 1406.0 L1179.7 1397.0 L1186.5 1388.0 L1193.2 1379.0 L1199.9 1388.0 L1206.6 1397.0 L1213.3 1406.0 L1220.1 1397.0 L1226.8 1388.0 L1233.5 1379.0 L1240.2 1388.0 L1246.9 1397.0 L1253.7 1406.0 L1260.4 1415.0 L1267.1 1424.0 L1273.8 1433.0 L1280.5 1424.0 L1287.3 1433.0 L1294.0 1424.0 L1300.7 1415.0 L1307.4 1424.0 L1314.1 1415.0 L1320.9 1406.0 L1327.6 1415.0" stroke="#1f77b4"/><path d="M662.3 1514.0 L669.0 1505.0 L675.7 1496.0 L682.5 1487.0 L689.2 1478.0 L695.9 1469.0 L702.6 1478.0 L709.3 1487.0 L716.1 1478.0 L722.8 1469.0 L729.5 1478.0 L736.2 1469.0 L742.9 1460.0 L749.7 1469.0 L756.4 1478.0 L763.1 1469.0 L769.8 1478.0 L776.5 1469.0 L783.3 1478.0 L790.0 1487.0 L796.7 1478.0 L803.4 1469.0 L810.1 1478.0 L816.9 1469.0 L823.6 1460.0 L830.3 1451.0 L837.0 1460.0 L843.7 1451.0 L850.5 1442.0 L857.2 1433.0 L863.9 1442.0 L870.6 1451.0 L877.3 1442.0 L884.1 1451.0 L890.8 1442.0 L897.5 1451.0 L904.2 1442.0 L910.9 1433.0 L917.7 1424.0 L924.4 1415.0 L931.1 1424.0 L937.8 1433.0 L944.5 1442.0 L951.3 1433.0 L958.0 1442.0 L964.7 1433.0 L971.4 1442.0 L978.1 1451.0 L984.9 1442.0 L991.6 1433.0 L998.3 1442.0 L1005.0 1433.0 L1011.7 1424.0 L1018.5 1433.0 L1025.2 1442.0 L1031.9 1451.0 L1038.6 1460.0 L1045.3 1469.0 L1052.1 1478.0 L1058.8 1469.0 L1065.5 1460.0 L1072.2 1469.0 L1078.9 1460.0 L1085.7 1469.0 L1092.4 1460.0 L1099.1 1451.0 L1105.8 1442.0 L1112.5 1451.0 L1119.3 1442.0 L1126.0 1433.0 L1132.7 1424.0 L1139.4 1415.0 L1146.1 1406.0 L1152.9 1397.0 L1159.6 1388.0 L1166.3 1379.0 L1173.0 1388.0 L1179.7 1379.0 L1186.5 1388.0 L1193.2 1397.0 L1199.9 1388.0 L1206.6 1379.0 L1213.3 1370.0 L1220.1 1361.0 L1226.8 1370.0 L1233.5 1361.0 L1240.2 1370.0 L1246.9 1379.0 L1253.7 1388.0 L1260.4 1397.0 L1267.1 1388.0 L1273.8 1397.0 L1280.5 1388.0 L1287.3 1379.0 L1294.0 1370.0 L1300.7 1361.0 L1307.4 1352.0 L1314.1 1361.0 L1320.9 1352.0 L1327.6 1361.0" stroke="#ff7f0e"/><path d="M662.3 1496.0 L669.0 1505.0 L675.7 1496.0 L682.5 1505.0 L689.2 1496.0 L695.9 1487.0 L702.6 1478.0 L709.3 1469.0 L716.1 1478.0 L722.8 1487.0 L729.5 1496.0 L736.2 1505.0 L742.9 1496.0 L749.7 1487.0 L756.4 1496.0 L763.1 1487.0 L769.8 1478.0 L776.5 1487.0 L783.3 1478.0 L790.0 1487.0 L796.7 1496.0 L803.4 1505.0 L810.1 1496.0 L816.9 1505.0 L823.6 1496.0 L830.3 1505.0 L837.0 1496.0 L843.7 1505.0 L850.5 1496.0 L857.2 1505.0 L863.9 1496.0 L870.6 1505.0 L877.3 1496.0 L884.1 1487.0 L890.8 1478.0 L897.5 1487.0 L904.2 1478.0 L910.9 1469.0 L917.7 1460.0 L924.4 1451.0 L931.1 1460.0 L937.8 1451.0 L944.5 1442.0 L951.3 1433.0 L958.0 1442.0 L964.7 1433.0 L971.4 1424.0 L978.1 1415.0 L984.9 1424.0 L991.6 1433.0 L998.3 1424.0 L1005.0 1415.0 L1011.7 1406.0 L1018.5 1415.0 L1025.2 1406.0 L1031.9 1415.0 L1038.6 1424.0 L1045.3 1433.0 L1052.1 1442.0 L1058.8 1433.0 L1065.5 1442.0 L1072.2 1451.0 L1078.9 1460.0 L1085.7 1469.0 L1092.4 1460.0 L1099.1 1469.0 L1105.8 1478.0 L1112.5 1469.0 L1119.3 1460.0 L1126.0 1469.0 L1132.7 1460.0 L1139.4 1469.0 L1146.1 1460.0 L1152.9 1451.0 L1159.6 1460.0 L1166.3 1451.0 L1173.0 1442.0 L1179.7 1433.0 L1186.5 1442.0 L1193.2 1433.0 L1199.9 1424.0 L1206.6 1433.0 L1213.3 1424.0 L1220.1 1415.0 L1226.8 1406.0 L1233.5 1397.0 L1240.2 1406.0 L1246.9 1415.0 L1253.7 1406.0 L1260.4 1415.0 L1267.1 1424.0 L1273.8 1433.0 L1280.5 1442.0 L1287.3 1451.0 L1294.0 1460.0 L1300.7 1469.0 L1307.4 1460.0 L1314.1 1469.0 L1320.9 1460.0 L1327.6 1469.0" stroke="#2ca02c"/><path d="M662.3 1514.0 L669.0 1505.0 L675.7 1496.0 L682.5 1487.0 L689.2 1478.0 L695.9 1487.0 L702.6 1496.0 L709.3 1505.0 L716.1 1496.0 L722.8 1487.0 L729.5 1478.0 L736.2 1487.0 L742.9 1496.0 L749.7 1505.0 L756.4 1496.0 L763.1 1505.0 L769.8 1514.0 L776.5 1523.0 L783.3 1514.0 L790.0 1505.0 L796.7 1496.0 L803.4 1487.0 L810.1 1478.0 L816.9 1469.0 L823.6 1478.0 L830.3 1487.0 L837.0 1496.0 L843.7 1487.0 L850.5 1496.0 L857.2 1487.0 L863.9 1478.0 L870.6 1487.0 L877.3 1478.0 L884.1 1469.0 L890.8 1460.0 L897.5 1469.0 L904.2 1478.0 L910.9 1487.0 L917.7 1496.0 L924.4 1487.0 L931.1 1496.0 L937.8 1487.0 L944.5 1496.0 L951.3 1505.0 L958.0 1496.0 L964.7 1487.0 L971.4 1478.0 L978.1 1487.0 L984.9 1478.0 L991.6 1487.0 L998.3 1478.0 L1005.0 1469.0 L1011.7 1460.0 L1018.5 1451.0 L1025.2 1442.0 L1031.9 1451.0 L1038.6 1460.0 L1045.3 1451.0 L1052.1 1442.0 L1058.8 1433.0 L1065.5 1442.0 L1072.2 1433.0 L1078.9 1424.0 L1085.7 1433.0 L1092.4 1424.0 L1099.1 1433.0 L1105.8 1442.0 L1112.5 1433.0 L1119.3 1424.0 L1126.0 1433.0 L1132.7 1424.0 L1139.4 1415.0 L1146.1 1406.0 L1152.9 1397.0 L1159.6 1406.0 L1166.3 1415.0 L1173.0 1406.0 L1179.7 1397.0 L1186.5 1406.0 L1193.2 1397.0 L1199.9 1388.0 L1206.6 1397.0 L1213.3 1388.0 L1220.1 1379.0 L1226.8 1388.0 L1233.5 1379.0 L1240.2 1370.0 L1246.9 1379.0 L1253.7 1370.0 L1260.4 1379.0 L1267.1 1370.0 L1273.8 1361.0 L1280.5 1370.0 L1287.3 1361.0 L1294.0 1370.0 L1300.7 1379.0 L1307.4 1388.0 L1314.1 1397.0 L1320.9 1406.0 L1327.6 1415.0" stroke="#d62728"/><path d="M662.3 1514.0 L669.0 1505.0 L675.7 1514.0 L682.5 1505.0 L689.2 1496.0 L695.9 1487.0 L702.6 1478.0 L709.3 1469.0 L716.1 1460.0 L722.8 1451.0 L729.5 1460.0 L736.2 1451.0 L742.9 1442.0 L749.7 1451.0 L756.4 1442.0 L763.1 1433.0 L769.8 1442.0 L776.5 1433.0 L783.3 1424.0 L790.0 1433.0 L796.7 1424.0 L803.4 1433.0 L810.1 1424.0 L816.9 1415.0 L823.6 1406.0 L830.3 1397.0 L837.0 1406.0 L843.7 1397.0 L850.5 1388.0 L857.2 1397.0 L863.9 1388.0 L870.6 1379.0 L877.3 1388.0 L884.1 1379.0 L890.8 1388.0 L897.5 1397.0 L904.2 1406.0 L910.9 1415.0 L917.7 1406.0 L924.4 1415.0 L931.1 1406.0 L937.8 1397.0 L944.5 1406.0 L951.3 1397.0 L958.0 1406.0 L964.7 1415.0 L971.4 1406.0 L978.1 1415.0 L984.9 1424.0 L991.6 1433.0 L998.3 1442.0 L1005.0 1433.0 L1011.7 1442.0 L1018.5 1433.0 L1025.2 1424.0 L1031.9 1415.0 L1038.6 1406.0 L1045.3 1397.0 L1052.1 1388.0 L1058.8 1379.0 L1065.5 1370.0 L1072.2 1379.0 L1078.9 1370.0 L1085.7 1379.0 L1092.4 1370.0 L1099.1 1361.0 L1105.8 1352.0 L1112.5 1343.0 L1119.3 1352.0 L1126.0 1361.0 L1132.7 1352.0 L1139.4 1361.0 L1146.1 1352.0 L1152.9 1361.0 L1159.6 1370.0 L1166.3 1361.0 L1173.0 1352.0 L1179.7 1343.0 L1186.5 1334.0 L1193.2 1325.0 L1199.9 1334.0 L1206.6 1325.0 L1213.3 1334.0 L1220.1 1325.0 L1226.8 1316.0 L1233.5 1325.0 L1240.2 1316.0 L1246.9 1325.0 L1253.7 1334.0 L1260.4 1343.0 L1267.1 1352.0 L1273.8 1343.0 L1280.5 1334.0 L1287.3 1343.0 L1294.0 1334.0 L1300.7 1325.0 L1307.4 1316.0 L1314.1 1325.0 L1320.9 1334.0 L1327.6 1343.0" stroke="#9467bd"/><path d="M662.3 1514.0 L669.0 1505.0 L675.7 1496.0 L682.5 1487.0 L689.2 1496.0 L695.9 1505.0 L702.6 1514.0 L709.3 1505.0 L716.1 1496.0 L722.8 1505.0 L729.5 1514.0 L736.2 1505.0 L742.9 1514.0 L749.7 1505.0 L756.4 1514.0 L763.1 1505.0 L769.8 1514.0 L776.5 1505.0 L783.3 1514.0 L790.0 1505.0 L796.7 1514.0 L803.4 1523.0 L810.1 1514.0 L816.9 1523.0 L823.6 1514.0 L830.3 1505.0 L837.0 1496.0 L843.7 1487.0 L850.5 1478.0 L857.2 1469.0 L863.9 1478.0 L870.6 1469.0 L877.3 1460.0 L884.1 1451.0 L890.8 1460.0 L897.5 1469.0 L904.2 1478.0 L910.9 1469.0 L917.7 1478.0 L924.4 1487.0 L931.1 1478.0 L937.8 1487.0 L944.5 1478.0 L951.3 1487.0 L958.0 1496.0 L964.7 1487.0 L971.4 1496.0 L978.1 1505.0 L984.9 1496.0 L991.6 1487.0 L998.3 1478.0 L1005.0 1487.0 L1011.7 1478.0 L1018.5 1487.0 L1025.2 1496.0 L1031.9 1487.0 L1038.6 1478.0 L1045.3 1469.0 L1052.1 1460.0 L1058.8 1451.0 L1065.5 1460.0 L1072.2 1451.0 L1078.9 1460.0 L1085.7 1469.0 L1092.4 1460.0 L1099.1 1469.0 L1105.8 1460.0 L1112.5 1469.0 L1119.3 1460.0 L1126.0 1451.0 L1132.7 1442.0 L1139.4 1451.0 L1146.1 1442.0 L1152.9 1451.0 L1159.6 1460.0 L1166.3 1451.0 L1173.0 1442.0 L1179.7 1433.0 L1186.5 1442.0 L1193.2 1433.0 L1199.9 1442.0 L1206.6 1451.0 L1213.3 1442.0 L1220.1 1451.0 L1226.8 1460.0 L1233.5 1469.0 L1240.2 1478.0 L1246.9 1469.0 L1253.7 1478.0 L1260.4 1487.0 L1267.1 1478.0 L1273.8 1469.0 L1280.5 1460.0 L1287.3 1469.0 L1294.0 1478.0 L1300.7 1469.0 L1307.4 1478.0 L1314.1 1487.0 L1320.9 1478.0 L1327.6 1469.0" stroke="#8c564b"/><path d="M662.3 1496.0 L669.0 1505.0 L675.7 1496.0 L682.5 1505.0 L689.2 1496.0 L695.9 1487.0 L702.6 1496.0 L709.3 1505.0 L716.1 1514.0 L722.8 1505.0 L729.5 1496.0 L736.2 1487.0 L742.9 1478.0 L749.7 1469.0 L756.4 1478.0 L763.1 1469.0 L769.8 1460.0 L776.5 1469.0 L783.3 1460.0 L790.0 1469.0 L796.7 1460.0 L803.4 1451.0 L810.1 1442.0 L816.9 1451.0 L823.6 1442.0 L830.3 1451.0 L837.0 1460.0 L843.7 1451.0 L850.5 1442.0 L857.2 1433.0 L863.9 1424.0 L870.6 1433.0 L877.3 1442.0 L884.1 1451.0 L890.8 1442.0 L897.5 1433.0 L904.2 1442.0 L910.9 1433.0 L917.7 1442.0 L924.4 1433.0 L931.1 1424.0 L937.8 1433.0 L944.5 1442.0 L951.3 1433.0 L958.0 1424.0 L964.7 1433.0 L971.4 1442.0 L978.1 1451.0 L984.9 1460.0 L991.6 1469.0 L998.3 1460.0 L1005.0 1451.0 L1011.7 1442.0 L1018.5 1451.0 L1025.2 1442.0 L1031.9 1433.0 L1038.6 1424.0 L1045.3 1415.0 L1052.1 1406.0 L1058.8 1415.0 L1065.5 1406.0 L1072.2 1415.0 L1078.9 1424.0 L1085.7 1415.0 L1092.4 1406.0 L1099.1 1397.0 L1105.8 1406.0 L1112.5 1397.0 L1119.3 1406.0 L1126.0 1397.0 L1132.7 1406.0 L1139.4 1397.0 L1146.1 1406.0 L1152.9 1397.0 L1159.6 1388.0 L1166.3 1379.0 L1173.0 1370.0 L1179.7 1379.0 L1186.5 1370.0 L1193.2 1361.0 L1199.9 1370.0 L1206.6 1361.0 L1213.3 1352.0 L1220.1 1343.0 L1226.8 1334.0 L1233.5 1325.0 L1240.2 1316.0 L1246.9 1307.0 L1253.7 1298.0 L1260.4 1289.0 L1267.1 1298.0 L1273.8 1289.0 L1280.5 1298.0 L1287.3 1307.0 L1294.0 1316.0 L1300.7 1307.0 L1307.4 1316.0 L1314.1 1325.0 L1320.9 1316.0 L1327.6 1307.0" stroke="#e377c2"/><path d="M662.3 1496.0 L669.0 1505.0 L675.7 1496.0 L682.5 1487.0 L689.2 1496.0 L695.9 1505.0 L702.6 1496.0 L709.3 1487.0 L716.1 1496.0 L722.8 1505.0 L729.5 1496.0 L736.2 1487.0 L742.9 1478.0 L749.7 1469.0 L756.4 1478.0 L763.1 1469.0 L769.8 1478.0 L776.5 1469.0 L783.3 1460.0 L790.0 1451.0 L796.7 1460.0 L803.4 1451.0 L810.1 1442.0 L816.9 1433.0 L823.6 1442.0 L830.3 1433.0 L837.0 1424.0 L843.7 1415.0 L850.5 1406.0 L857.2 1397.0 L863.9 1388.0 L870.6 1397.0 L877.3 1388.0 L884.1 1379.0 L890.8 1388.0 L897.5 1379.0 L904.2 1370.0 L910.9 1361.0 L917.7 1352.0 L924.4 1343.0 L931.1 1334.0 L937.8 1325.0 L944.5 1316.0 L951.3 1325.0 L958.0 1316.0 L964.7 1325.0 L971.4 1316.0 L978.1 1307.0 L984.9 1298.0 L991.6 1289.0 L998.3 1298.0 L1005.0 1289.0 L1011.7 1280.0 L1018.5 1289.0 L1025.2 1280.0 L1031.9 1271.0 L1038.6 1280.0 L1045.3 1289.0 L1052.1 1298.0 L1058.8 1307.0 L1065.5 1316.0 L1072.2 1307.0 L1078.9 1298.0 L1085.7 1289.0 L1092.4 1280.0 L1099.1 1271.0 L1105.8 1262.0 L1112.5 1271.0 L1119.3 1262.0 L1126.0 1271.0 L1132.7 1280.0 L1139.4 1271.0 L1146.1 1280.0 L1152.9 1271.0 L1159.6 1280.0 L1166.3 1271.0 L1173.0 1262.0 L1179.7 1253.0 L1186.5 1244.0 L1193.2 1235.0 L1199.9 1226.0 L1206.6 1217.0 L1213.3 1208.0 L1220.1 1199.0 L1226.8 1208.0 L1233.5 1217.0 L1240.2 1226.0 L1246.9 1235.0 L1253.7 1226.0 L1260.4 1235.0 L1267.1 1244.0 L1273.8 1253.0 L1280.5 1262.0 L1287.3 1253.0 L1294.0 1244.0 L1300.7 1235.0 L1307.4 1226.0 L1314.1 1217.0 L1320.9 1208.0 L1327.6 1199.0" stroke="#7f7f7f"/><path d="M662.3 1496.0 L669.0 1487.0 L675.7 1496.0 L682.5 1487.0 L689.2 1496.0 L695.9 1487.0 L702.6 1496.0 L709.3 1487.0 L716.1 1478.0 L722.8 1469.0 L729.5 1478.0 L736.2 1487.0 L742.9 1496.0 L749.7 1505.0 L756.4 1496.0 L763.1 1487.0 L769.8 1478.0 L776.5 1469.0 L783.3 1460.0 L790.0 1469.0 L796.7 1478.0 L803.4 1469.0 L810.1 1460.0 L816.9 1451.0 L823.6 1442.0 L830.3 1451.0 L837.0 1460.0 L843.7 1451.0 L850.5 1460.0 L857.2 1451.0 L863.9 1442.0 L870.6 1433.0 L877.3 1424.0 L884.1 1415.0 L890.8 1406.0 L897.5 1415.0 L904.2 1424.0 L910.9 1415.0 L917.7 1424.0 L924.4 1415.0 L931.1 1406.0 L937.8 1415.0 L944.5 1424.0 L951.3 1415.0 L958.0 1424.0 L964.7 1433.0 L971.4 1442.0 L978.1 1433.0 L984.9 1424.0 L991.6 1415.0 L998.3 1406.0 L1005.0 1415.0 L1011.7 1424.0 L1018.5 1415.0 L1025.2 1406.0 L1031.9 1415.0 L1038.6 1406.0 L1045.3 1397.0 L1052.1 1388.0 L1058.8 1379.0 L1065.5 1388.0 L1072.2 1379.0 L1078.9 1388.0 L1085.7 1397.0 L1092.4 1388.0 L1099.1 1397.0 L1105.8 1406.0 L1112.5 1397.0 L1119.3 1388.0 L1126.0 1397.0 L1132.7 1406.0 L1139.4 1397.0 L1146.1 1406.0 L1152.9 1397.0 L1159.6 1388.0 L1166.3 1379.0 L1173.0 1370.0 L1179.7 1361.0 L1186.5 1352.0 L1193.2 1343.0 L1199.9 1352.0 L1206.6 1343.0 L1213.3 1352.0 L1220.1 1343.0 L1226.8 1352.0 L1233.5 1343.0 L1240.2 1334.0 L1246.9 1343.0 L1253.7 1334.0 L1260.4 1343.0 L1267.1 1334.0 L1273.8 1325.0 L1280.5 1334.0 L1287.3 1325.0 L1294.0 1316.0 L1300.7 1307.0 L1307.4 1298.0 L1314.1 1289.0 L1320.9 1280.0 L1327.6 1289.0" stroke="#bcbd22"/><path d="M662.3 1496.0 L669.0 1487.0 L675.7 1478.0 L682.5 1469.0 L689.2 1478.0 L695.9 1469.0 L702.6 1478.0 L709.3 1487.0 L716.1 1478.0 L722.8 1469.0 L729.5 1460.0 L736.2 1451.0 L742.9 1442.0 L749.7 1451.0 L756.4 1442.0 L763.1 1433.0 L769.8 1442.0 L776.5 1433.0 L783.3 1442.0 L790.0 1433.0 L796.7 1424.0 L803.4 1433.0 L810.1 1424.0 L816.9 1415.0 L823.6 1406.0 L830.3 1415.0 L837.0 1424.0 L843.7 1415.0 L850.5 1424.0 L857.2 1415.0 L863.9 1424.0 L870.6 1415.0 L877.3 1424.0 L884.1 1433.0 L890.8 1442.0 L897.5 1433.0 L904.2 1424.0 L910.9 1415.0 L917.7 1406.0 L924.4 1415.0 L931.1 1406.0 L937.8 1415.0 L944.5 1406.0 L951.3 1397.0 L958.0 1388.0 L964.7 1379.0 L971.4 1370.0 L978.1 1379.0 L984.9 1370.0 L991.6 1379.0 L998.3 1370.0 L1005.0 1379.0 L1011.7 1370.0 L1018.5 1379.0 L1025.2 1388.0 L1031.9 1397.0 L1038.6 1406.0 L1045.3 1397.0 L1052.1 1388.0 L1058.8 1379.0 L1065.5 1370.0 L1072.2 1361.0 L1078.9 1370.0 L1085.7 1379.0 L1092.4 1388.0 L1099.1 1397.0 L1105.8 1388.0 L1112.5 1379.0 L1119.3 1370.0 L1126.0 1361.0 L1132.7 1352.0 L1139.4 1361.0 L1146.1 1352.0 L1152.9 1361.0 L1159.6 1352.0 L1166.3 1343.0 L1173.0 1352.0 L1179.7 1343.0 L1186.5 1352.0 L1193.2 1361.0 L1199.9 1370.0 L1206.6 1361.0 L1213.3 1352.0 L1220.1 1343.0 L1226.8 1334.0 L1233.5 1343.0 L1240.2 1334.0 L1246.9 1325.0 L1253.7 1316.0 L1260.4 1325.0 L1267.1 1334.0 L1273.8 1343.0 L1280.5 1352.0 L1287.3 1343.0 L1294.0 1352.0 L1300.7 1343.0 L1307.4 1334.0 L1314.1 1343.0 L1320.9 1352.0 L1327.6 1343.0" stroke="#17becf"/><path d="M662.3 1514.0 L669.0 1505.0 L675.7 1514.0 L682.5 1505.0 L689.2 1496.0 L695.9 1505.0 L702.6 1496.0 L709.3 1487.0 L716.1 1496.0 L722.8 1487.0 L729.5 1496.0 L736.2 1505.0 L742.9 1496.0 L749.7 1487.0 L756.4 1478.0 L763.1 1469.0 L769.8 1478.0 L776.5 1469.0 L783.3 1460.0 L790.0 1469.0 L796.7 1460.0 L803.4 1451.0 L810.1 1442.0 L816.9 1451.0 L823.6 1442.0 L830.3 1433.0 L837.0 1424.0 L843.7 1433.0 L850.5 1424.0 L857.2 1415.0 L863.9 1406.0 L870.6 1415.0 L877.3 1406.0 L884.1 1397.0 L890.8 1388.0 L897.5 1379.0 L904.2 1370.0 L910.9 1379.0 L917.7 1370.0 L924.4 1361.0 L931.1 1352.0 L937.8 1343.0 L944.5 1352.0 L951.3 1361.0 L958.0 1352.0 L964.7 1343.0 L971.4 1334.0 L978.1 1325.0 L984.9 1334.0 L991.6 1325.0 L998.3 1316.0 L1005.0 1307.0 L1011.7 1298.0 L1018.5 1307.0 L1025.2 1316.0 L1031.9 1325.0 L1038.6 1316.0 L1045.3 1307.0 L1052.1 1316.0 L1058.8 1307.0 L1065.5 1298.0 L1072.2 1307.0 L1078.9 1298.0 L1085.7 1289.0 L1092.4 1298.0 L1099.1 1307.0 L1105.8 1298.0 L1112.5 1289.0 L1119.3 1280.0 L1126.0 1271.0 L1132.7 1280.0 L1139.4 1289.0 L1146.1 1280.0 L1152.9 1289.0 L1159.6 1298.0 L1166.3 1289.0 L1173.0 1298.0 L1179.7 1289.0 L1186.5 1280.0 L1193.2 1271.0 L1199.9 1280.0 L1206.6 1289.0 L1213.3 1298.0 L1220.1 1307.0 L1226.8 1298.0 L1233.5 1307.0 L1240.2 1298.0 L1246.9 1289.0 L1253.7 1298.0 L1260.4 1289.0 L1267.1 1280.0 L1273.8 1271.0 L1280.5 1262.0 L1287.3 1253.0 L1294.0 1262.0 L1300.7 1271.0 L1307.4 1262.0 L1314.1 1271.0 L1320.9 1262.0 L1327.6 1253.0" stroke="#1f77b4"/><path d="M662.3 1496.0 L669.0 1487.0 L675.7 1478.0 L682.5 1469.0 L689.2 1460.0 L695.9 1451.0 L702.6 1442.0 L709.3 1451.0 L716.1 1442.0 L722.8 1433.0 L729.5 1424.0 L736.2 1433.0 L742.9 1442.0 L749.7 1433.0 L756.4 1424.0 L763.1 1415.0 L769.8 1406.0 L776.5 1397.0 L783.3 1406.0 L790.0 1415.0 L796.7 1406.0 L803.4 1397.0 L810.1 1406.0 L816.9 1397.0 L823.6 1406.0 L830.3 1397.0 L837.0 1406.0 L843.7 1415.0 L850.5 1424.0 L857.2 1415.0 L863.9 1406.0 L870.6 1415.0 L877.3 1406.0 L884.1 1397.0 L890.8 1388.0 L897.5 1397.0 L904.2 1406.0 L910.9 1415.0 L917.7 1406.0 L924.4 1415.0 L931.1 1406.0 L937.8 1415.0 L944.5 1424.0 L951.3 1433.0 L958.0 1424.0 L964.7 1433.0 L971.4 1424.0 L978.1 1415.0 L984.9 1406.0 L991.6 1397.0 L998.3 1406.0 L1005.0 1415.0 L1011.7 1406.0 L1018.5 1397.0 L1025.2 1406.0 L1031.9 1397.0 L1038.6 1388.0 L1045.3 1397.0 L1052.1 1388.0 L1058.8 1379.0 L1065.5 1388.0 L1072.2 1379.0 L1078.9 1370.0 L1085.7 1361.0 L1092.4 1352.0 L1099.1 1343.0 L1105.8 1334.0 L1112.5 1325.0 L1119.3 1334.0 L1126.0 1325.0 L1132.7 1334.0 L1139.4 1325.0 L1146.1 1316.0 L1152.9 1325.0 L1159.6 1316.0 L1166.3 1325.0 L1173.0 1334.0 L1179.7 1325.0 L1186.5 1316.0 L1193.2 1325.0 L1199.9 1334.0 L1206.6 1325.0 L1213.3 1316.0 L1220.1 1307.0 L1226.8 1298.0 L1233.5 1307.0 L1240.2 1316.0 L1246.9 1307.0 L1253.7 1298.0 L1260.4 1307.0 L1267.1 1298.0 L1273.8 1289.0 L1280.5 1280.0 L1287.3 1271.0 L1294.0 1262.0 L1300.7 1271.0 L1307.4 1280.0 L1314.1 1289.0 L1320.9 1280.0 L1327.6 1289.0" stroke="#ff7f0e"/><path d="M662.3 1496.0 L669.0 1487.0 L675.7 1496.0 L682.5 1487.0 L689.2 1478.0 L695.9 1469.0 L702.6 1460.0 L709.3 1451.0 L716.1 1460.0 L722.8 1469.0 L729.5 1460.0 L736.2 1451.0 L742.9 1460.0 L749.7 1469.0 L756.4 1478.0 L763.1 1469.0 L769.8 1460.0 L776.5 1451.0 L783.3 1442.0 L790.0 1433.0 L796.7 1424.0 L803.4 1415.0 L810.1 1406.0 L816.9 1397.0 L823.6 1388.0 L830.3 1379.0 L837.0 1370.0 L843.7 1379.0 L850.5 1388.0 L857.2 1379.0 L863.9 1370.0 L870.6 1361.0 L877.3 1352.0 L884.1 1361.0 L890.8 1352.0 L897.5 1343.0 L904.2 1352.0 L910.9 1361.0 L917.7 1352.0 L924.4 1361.0 L931.1 1352.0 L937.8 1343.0 L944.5 1334.0 L951.3 1325.0 L958.0 1316.0 L964.7 1307.0 L971.4 1298.0 L978.1 1289.0 L984.9 1280.0 L991.6 1271.0 L998.3 1262.0 L1005.0 1271.0 L1011.7 1262.0 L1018.5 1253.0 L1025.2 1244.0 L1031.9 1235.0 L1038.6 1226.0 L1045.3 1235.0 L1052.1 1244.0 L1058.8 1235.0 L1065.5 1244.0 L1072.2 1235.0 L1078.9 1226.0 L1085.7 1217.0 L1092.4 1226.0 L1099.1 1217.0 L1105.8 1208.0 L1112.5 1217.0 L1119.3 1208.0 L1126.0 1217.0 L1132.7 1208.0 L1139.4 1199.0 L1146.1 1208.0 L1152.9 1199.0 L1159.6 1208.0 L1166.3 1199.0 L1173.0 1190.0 L1179.7 1181.0 L1186.5 1190.0 L1193.2 1181.0 L1199.9 1172.0 L1206.6 1181.0 L1213.3 1190.0 L1220.1 1199.0 L1226.8 1208.0 L1233.5 1199.0 L1240.2 1208.0 L1246.9 1217.0 L1253.7 1226.0 L1260.4 1235.0 L1267.1 1244.0 L1273.8 1253.0 L1280.5 1244.0 L1287.3 1235.0 L1294.0 1244.0 L1300.7 1253.0 L1307.4 1244.0 L1314.1 1235.0 L1320.9 1226.0 L1327.6 1217.0" stroke="#2ca02c"/><path d="M662.3 1496.0 L669.0 1487.0 L675.7 1496.0 L682.5 1487.0 L689.2 1496.0 L695.9 1505.0 L702.6 1496.0 L709.3 1487.0 L716.1 1496.0 L722.8 1505.0 L729.5 1496.0 L736.2 1505.0 L742.9 1496.0 L749.7 1487.0 L756.4 1478.0 L763.1 1487.0 L769.8 1496.0 L776.5 1487.0 L783.3 1496.0 L790.0 1487.0 L796.7 1496.0 L803.4 1487.0 L810.1 1496.0 L816.9 1505.0 L823.6 1514.0 L830.3 1523.0 L837.0 1514.0 L843.7 1505.0 L850.5 1496.0 L857.2 1505.0 L863.9 1514.0 L870.6 1505.0 L877.3 1496.0 L884.1 1505.0 L890.8 1496.0 L897.5 1487.0 L904.2 1478.0 L910.9 1469.0 L917.7 1460.0 L924.4 1451.0 L931.1 1460.0 L937.8 1469.0 L944.5 1478.0 L951.3 1469.0 L958.0 1460.0 L964.7 1469.0 L971.4 1460.0 L978.1 1451.0 L984.9 1442.0 L991.6 1451.0 L998.3 1460.0 L1005.0 1451.0 L1011.7 1460.0 L1018.5 1451.0 L1025.2 1442.0 L1031.9 1451.0 L1038.6 1442.0 L1045.3 1433.0 L1052.1 1424.0 L1058.8 1415.0 L1065.5 1406.0 L1072.2 1397.0 L1078.9 1388.0 L1085.7 1379.0 L1092.4 1370.0 L1099.1 1379.0 L1105.8 1370.0 L1112.5 1361.0 L1119.3 1370.0 L1126.0 1361.0 L1132.7 1370.0 L1139.4 1361.0 L1146.1 1370.0 L1152.9 1361.0 L1159.6 1352.0 L1166.3 1343.0 L1173.0 1352.0 L1179.7 1343.0 L1186.5 1352.0 L1193.2 1343.0 L1199.9 1334.0 L1206.6 1325.0 L1213.3 1334.0 L1220.1 1325.0 L1226.8 1334.0 L1233.5 1325.0 L1240.2 1316.0 L1246.9 1325.0 L1253.7 1334.0 L1260.4 1343.0 L1267.1 1334.0 L1273.8 1325.0 L1280.5 1316.0 L1287.3 1325.0 L1294.0 1316.0 L1300.7 1307.0 L1307.4 1298.0 L1314.1 1307.0 L1320.9 1298.0 L1327.6 1307.0" stroke="#d62728"/><path d="M662.3 1496.0 L669.0 1487.0 L675.7 1478.0 L682.5 1469.0 L689.2 1460.0 L695.9 1451.0 L702.6 1442.0 L709.3 1451.0 L716.1 1460.0 L722.8 1451.0 L729.5 1442.0 L736.2 1433.0 L742.9 1424.0 L749.7 1415.0 L756.4 1406.0 L763.1 1397.0 L769.8 1406.0 L776.5 1415.0 L783.3 1424.0 L790.0 1415.0 L796.7 1424.0 L803.4 1415.0 L810.1 1424.0 L816.9 1433.0 L823.6 1424.0 L830.3 1433.0 L837.0 1442.0 L843.7 1433.0 L850.5 1424.0 L857.2 1433.0 L863.9 1442.0 L870.6 1451.0 L877.3 1442.0 L884.1 1433.0 L890.8 1424.0 L897.5 1433.0 L904.2 1424.0 L910.9 1433.0 L917.7 1424.0 L924.4 1415.0 L931.1 1424.0 L937.8 1415.0 L944.5 1406.0 L951.3 1415.0 L958.0 1406.0 L964.7 1415.0 L971.4 1406.0 L978.1 1397.0 L984.9 1406.0 L991.6 1415.0 L998.3 1406.0 L1005.0 1397.0 L1011.7 1388.0 L1018.5 1397.0 L1025.2 1406.0 L1031.9 1397.0 L1038.6 1388.0 L1045.3 1397.0 L1052.1 1388.0 L1058.8 1379.0 L1065.5 1388.0 L1072.2 1397.0 L1078.9 1406.0 L1085.7 1397.0 L1092.4 1388.0 L1099.1 1379.0 L1105.8 1388.0 L1112.5 1397.0 L1119.3 1388.0 L1126.0 1379.0 L1132.7 1370.0 L1139.4 1379.0 L1146.1 1370.0 L1152.9 1361.0 L1159.6 1370.0 L1166.3 1361.0 L1173.0 1352.0 L1179.7 1361.0 L1186.5 1352.0 L1193.2 1343.0 L1199.9 1334.0 L1206.6 1343.0 L1213.3 1334.0 L1220.1 1343.0 L1226.8 1334.0 L1233.5 1343.0 L1240.2 1352.0 L1246.9 1361.0 L1253.7 1352.0 L1260.4 1361.0 L1267.1 1352.0 L1273.8 1343.0 L1280.5 1334.0 L1287.3 1325.0 L1294.0 1334.0 L1300.7 1325.0 L1307.4 1316.0 L1314.1 1307.0 L1320.9 1316.0 L1327.6 1307.0" stroke="#9467bd"/><path d="M662.3 1496.0 L669.0 1505.0 L675.7 1496.0 L682.5 1487.0 L689.2 1478.0 L695.9 1487.0 L702.6 1496.0 L709.3 1505.0 L716.1 1514.0 L722.8 1505.0 L729.5 1496.0 L736.2 1505.0 L742.9 1496.0 L749.7 1487.0 L756.4 1496.0 L763.1 1505.0 L769.8 1496.0 L776.5 1487.0 L783.3 1478.0 L790.0 1469.0 L796.7 1460.0 L803.4 1451.0 L810.1 1460.0 L816.9 1451.0 L823.6 1442.0 L830.3 1433.0 L837.0 1424.0 L843.7 1415.0 L850.5 1406.0 L857.2 1397.0 L863.9 1388.0 L870.6 1379.0 L877.3 1388.0 L884.1 1379.0 L890.8 1388.0 L897.5 1379.0 L904.2 1370.0 L910.9 1361.0 L917.7 1370.0 L924.4 1379.0 L931.1 1370.0 L937.8 1361.0 L944.5 1352.0 L951.3 1361.0 L958.0 1352.0 L964.7 1343.0 L971.4 1352.0 L978.1 1343.0 L984.9 1334.0 L991.6 1343.0 L998.3 1334.0 L1005.0 1325.0 L1011.7 1316.0 L1018.5 1325.0 L1025.2 1316.0 L1031.9 1307.0 L1038.6 1298.0 L1045.3 1289.0 L1052.1 1280.0 L1058.8 1289.0 L1065.5 1280.0 L1072.2 1271.0 L1078.9 1280.0 L1085.7 1271.0 L1092.4 1262.0 L1099.1 1253.0 L1105.8 1262.0 L1112.5 1253.0 L1119.3 1262.0 L1126.0 1253.0 L1132.7 1262.0 L1139.4 1271.0 L1146.1 1280.0 L1152.9 1289.0 L1159.6 1280.0 L1166.3 1271.0 L1173.0 1280.0 L1179.7 1289.0 L1186.5 1280.0 L1193.2 1271.0 L1199.9 1280.0 L1206.6 1289.0 L1213.3 1280.0 L1220.1 1289.0 L1226.8 1280.0 L1233.5 1271.0 L1240.2 1280.0 L1246.9 1271.0 L1253.7 1262.0 L1260.4 1253.0 L1267.1 1244.0 L1273.8 1253.0 L1280.5 1244.0 L1287.3 1235.0 L1294.0 1244.0 L1300.7 1235.0 L1307.4 1226.0 L1314.1 1235.0 L1320.9 1244.0 L1327.6 1235.0" stroke="#8c564b"/><path d="M662.3 1496.0 L669.0 1487.0 L675.7 1478.0 L682.5 1487.0 L689.2 1496.0 L695.9 1487.0 L702.6 1496.0 L709.3 1505.0 L716.1 1496.0 L722.8 1505.0 L729.5 1514.0 L736.2 1523.0 L742.9 1514.0 L749.7 1505.0 L756.4 1514.0 L763.1 1523.0 L769.8 1514.0 L776.5 1505.0 L783.3 1514.0 L790.0 1505.0 L796.7 1514.0 L803.4 1505.0 L810.1 1496.0 L816.9 1505.0 L823.6 1496.0 L830.3 1505.0 L837.0 1496.0 L843.7 1487.0 L850.5 1496.0 L857.2 1505.0 L863.9 1514.0 L870.6 1523.0 L877.3 1514.0 L884.1 1505.0 L890.8 1514.0 L897.5 1505.0 L904.2 1496.0 L910.9 1487.0 L917.7 1478.0 L924.4 1487.0 L931.1 1496.0 L937.8 1505.0 L944.5 1514.0 L951.3 1505.0 L958.0 1514.0 L964.7 1523.0 L971.4 1514.0 L978.1 1523.0 L984.9 1514.0 L991.6 1505.0 L998.3 1496.0 L1005.0 1505.0 L1011.7 1496.0 L1018.5 1505.0 L1025.2 1514.0 L1031.9 1505.0 L1038.6 1496.0 L1045.3 1505.0 L1052.1 1496.0 L1058.8 1487.0 L1065.5 1496.0 L1072.2 1487.0 L1078.9 1496.0 L1085.7 1487.0 L1092.4 1478.0 L1099.1 1469.0 L1105.8 1460.0 L1112.5 1469.0 L1119.3 1478.0 L1126.0 1469.0 L1132.7 1478.0 L1139.4 1469.0 L1146.1 1460.0 L1152.9 1469.0 L1159.6 1478.0 L1166.3 1487.0 L1173.0 1478.0 L1179.7 1487.0 L1186.5 1478.0 L1193.2 1487.0 L1199.9 1478.0 L1206.6 1487.0 L1213.3 1478.0 L1220.1 1487.0 L1226.8 1496.0 L1233.5 1505.0 L1240.2 1496.0 L1246.9 1487.0 L1253.7 1496.0 L1260.4 1505.0 L1267.1 1496.0 L1273.8 1487.0 L1280.5 1478.0 L1287.3 1469.0 L1294.0 1460.0 L1300.7 1451.0 L1307.4 1460.0 L1314.1 1469.0 L1320.9 1460.0 L1327.6 1451.0" stroke="#e377c2"/><path d="M662.3 1514.0 L669.0 1505.0 L675.7 1496.0 L682.5 1487.0 L689.2 1478.0 L695.9 1469.0 L702.6 1478.0 L709.3 1487.0 L716.1 1496.0 L722.8 1487.0 L729.5 1478.0 L736.2 1487.0 L742.9 1496.0 L749.7 1487.0 L756.4 1478.0 L763.1 1487.0 L769.8 1496.0 L776.5 1487.0 L783.3 1478.0 L790.0 1487.0 L796.7 1478.0 L803.4 1469.0 L810.1 1460.0 L816.9 1469.0 L823.6 1460.0 L830.3 1469.0 L837.0 1460.0 L843.7 1469.0 L850.5 1460.0 L857.2 1469.0 L863.9 1460.0 L870.6 1451.0 L877.3 1442.0 L884.1 1451.0 L890.8 1442.0 L897.5 1451.0 L904.2 1442.0 L910.9 1433.0 L917.7 1424.0 L924.4 1415.0 L931.1 1406.0 L937.8 1415.0 L944.5 1424.0 L951.3 1433.0 L958.0 1424.0 L964.7 1433.0 L971.4 1442.0 L978.1 1433.0 L984.9 1424.0 L991.6 1415.0 L998.3 1424.0 L1005.0 1433.0 L1011.7 1442.0 L1018.5 1433.0 L1025.2 1424.0 L1031.9 1415.0 L1038.6 1424.0 L1045.3 1415.0 L1052.1 1406.0 L1058.8 1397.0 L1065.5 1388.0 L1072.2 1379.0 L1078.9 1370.0 L1085.7 1361.0 L1092.4 1370.0 L1099.1 1361.0 L1105.8 1370.0 L1112.5 1361.0 L1119.3 1352.0 L1126.0 1343.0 L1132.7 1334.0 L1139.4 1343.0 L1146.1 1352.0 L1152.9 1361.0 L1159.6 1370.0 L1166.3 1361.0 L1173.0 1370.0 L1179.7 1361.0 L1186.5 1352.0 L1193.2 1361.0 L1199.9 1370.0 L1206.6 1361.0 L1213.3 1370.0 L1220.1 1379.0 L1226.8 1370.0 L1233.5 1361.0 L1240.2 1352.0 L1246.9 1343.0 L1253.7 1352.0 L1260.4 1361.0 L1267.1 1370.0 L1273.8 1361.0 L1280.5 1352.0 L1287.3 1343.0 L1294.0 1334.0 L1300.7 1343.0 L1307.4 1334.0 L1314.1 1325.0 L1320.9 1316.0 L1327.6 1307.0" stroke="#7f7f7f"/><path d="M662.3 1496.0 L669.0 1505.0 L675.7 1496.0 L682.5 1505.0 L689.2 1496.0 L695.9 1505.0 L702.6 1514.0 L709.3 1523.0 L716.1 1532.0 L722.8 1523.0 L729.5 1514.0 L736.2 1505.0 L742.9 1496.0 L749.7 1505.0 L756.4 1496.0 L763.1 1487.0 L769.8 1478.0 L776.5 1469.0 L783.3 1478.0 L790.0 1469.0 L796.7 1460.0 L803.4 1469.0 L810.1 1460.0 L816.9 1451.0 L823.6 1460.0 L830.3 1469.0 L837.0 1460.0 L843.7 1469.0 L850.5 1460.0 L857.2 1451.0 L863.9 1460.0 L870.6 1451.0 L877.3 1460.0 L884.1 1451.0 L890.8 1460.0 L897.5 1469.0 L904.2 1460.0 L910.9 1469.0 L917.7 1460.0 L924.4 1469.0 L931.1 1460.0 L937.8 1451.0 L944.5 1442.0 L951.3 1451.0 L958.0 1460.0 L964.7 1469.0 L971.4 1460.0 L978.1 1451.0 L984.9 1460.0 L991.6 1469.0 L998.3 1460.0 L1005.0 1469.0 L1011.7 1460.0 L1018.5 1469.0 L1025.2 1460.0 L1031.9 1451.0 L1038.6 1442.0 L1045.3 1433.0 L1052.1 1442.0 L1058.8 1433.0 L1065.5 1424.0 L1072.2 1433.0 L1078.9 1442.0 L1085.7 1433.0 L1092.4 1424.0 L1099.1 1415.0 L1105.8 1406.0 L1112.5 1397.0 L1119.3 1406.0 L1126.0 1397.0 L1132.7 1406.0 L1139.4 1415.0 L1146.1 1424.0 L1152.9 1415.0 L1159.6 1424.0 L1166.3 1415.0 L1173.0 1406.0 L1179.7 1415.0 L1186.5 1406.0 L1193.2 1415.0 L1199.9 1406.0 L1206.6 1397.0 L1213.3 1388.0 L1220.1 1379.0 L1226.8 1370.0 L1233.5 1379.0 L1240.2 1388.0 L1246.9 1379.0 L1253.7 1370.0 L1260.4 1379.0 L1267.1 1370.0 L1273.8 1379.0 L1280.5 1370.0 L1287.3 1361.0 L1294.0 1370.0 L1300.7 1379.0 L1307.4 1370.0 L1314.1 1361.0 L1320.9 1370.0 L1327.6 1361.0" stroke="#bcbd22"/><path d="M662.3 1496.0 L669.0 1487.0 L675.7 1496.0 L682.5 1505.0 L689.2 1496.0 L695.9 1505.0 L702.6 1514.0 L709.3 1505.0 L716.1 1514.0 L722.8 1505.0 L729.5 1496.0 L736.2 1487.0 L742.9 1478.0 L749.7 1469.0 L756.4 1478.0 L763.1 1469.0 L769.8 1460.0 L776.5 1451.0 L783.3 1442.0 L790.0 1433.0 L796.7 1424.0 L803.4 1433.0 L810.1 1442.0 L816.9 1433.0 L823.6 1442.0 L830.3 1451.0 L837.0 1460.0 L843.7 1469.0 L850.5 1478.0 L857.2 1469.0 L863.9 1460.0 L870.6 1451.0 L877.3 1460.0 L884.1 1469.0 L890.8 1460.0 L897.5 1469.0 L904.2 1460.0 L910.9 1469.0 L917.7 1460.0 L924.4 1451.0 L931.1 1460.0 L937.8 1451.0 L944.5 1442.0 L951.3 1451.0 L958.0 1442.0 L964.7 1433.0 L971.4 1424.0 L978.1 1415.0 L984.9 1406.0 L991.6 1397.0 L998.3 1388.0 L1005.0 1379.0 L1011.7 1388.0 L1018.5 1379.0 L1025.2 1388.0 L1031.9 1379.0 L1038.6 1388.0 L1045.3 1397.0 L1052.1 1388.0 L1058.8 1379.0 L1065.5 1370.0 L1072.2 1361.0 L1078.9 1370.0 L1085.7 1361.0 L1092.4 1370.0 L1099.1 1361.0 L1105.8 1370.0 L1112.5 1361.0 L1119.3 1352.0 L1126.0 1343.0 L1132.7 1334.0 L1139.4 1343.0 L1146.1 1334.0 L1152.9 1325.0 L1159.6 1316.0 L1166.3 1307.0 L1173.0 1298.0 L1179.7 1307.0 L1186.5 1298.0 L1193.2 1289.0 L1199.9 1298.0 L1206.6 1289.0 L1213.3 1298.0 L1220.1 1307.0 L1226.8 1298.0 L1233.5 1307.0 L1240.2 1298.0 L1246.9 1289.0 L1253.7 1280.0 L1260.4 1271.0 L1267.1 1262.0 L1273.8 1271.0 L1280.5 1262.0 L1287.3 1253.0 L1294.0 1244.0 L1300.7 1253.0 L1307.4 1244.0 L1314.1 1235.0 L1320.9 1226.0 L1327.6 1235.0" stroke="#17becf"/><path d="M662.3 1514.0 L669.0 1505.0 L675.7 1496.0 L682.5 1505.0 L689.2 1514.0 L695.9 1505.0 L702.6 1496.0 L709.3 1505.0 L716.1 1496.0 L722.8 1487.0 L729.5 1496.0 L736.2 1487.0 L742.9 1496.0 L749.7 1505.0 L756.4 1496.0 L763.1 1505.0 L769.8 1514.0 L776.5 1505.0 L783.3 1496.0 L790.0 1487.0 L796.7 1478.0 L803.4 1469.0 L810.1 1460.0 L816.9 1469.0 L823.6 1478.0 L830.3 1469.0 L837.0 1478.0 L843.7 1469.0 L850.5 1460.0 L857.2 1451.0 L863.9 1460.0 L870.6 1451.0 L877.3 1442.0 L884.1 1433.0 L890.8 1442.0 L897.5 1451.0 L904.2 1442.0 L910.9 1451.0 L917.7 1442.0 L924.4 1433.0 L931.1 1442.0 L937.8 1451.0 L944.5 1442.0 L951.3 1451.0 L958.0 1442.0 L964.7 1433.0 L971.4 1424.0 L978.1 1433.0 L984.9 1442.0 L991.6 1433.0 L998.3 1424.0 L1005.0 1415.0 L1011.7 1424.0 L1018.5 1433.0 L1025.2 1424.0 L1031.9 1415.0 L1038.6 1406.0 L1045.3 1397.0 L1052.1 1406.0 L1058.8 1397.0 L1065.5 1388.0 L1072.2 1397.0 L1078.9 1388.0 L1085.7 1379.0 L1092.4 1388.0 L1099.1 1379.0 L1105.8 1370.0 L1112.5 1361.0 L1119.3 1352.0 L1126.0 1343.0 L1132.7 1334.0 L1139.4 1325.0 L1146.1 1316.0 L1152.9 1307.0 L1159.6 1298.0 L1166.3 1289.0 L1173.0 1298.0 L1179.7 1307.0 L1186.5 1316.0 L1193.2 1325.0 L1199.9 1334.0 L1206.6 1343.0 L1213.3 1334.0 L1220.1 1325.0 L1226.8 1316.0 L1233.5 1307.0 L1240.2 1316.0 L1246.9 1307.0 L1253.7 1298.0 L1260.4 1289.0 L1267.1 1298.0 L1273.8 1307.0 L1280.5 1298.0 L1287.3 1289.0 L1294.0 1280.0 L1300.7 1289.0 L1307.4 1280.0 L1314.1 1271.0 L1320.9 1262.0 L1327.6 1253.0" stroke="#1f77b4"/><path d="M662.3 1496.0 L669.0 1505.0 L675.7 1496.0 L682.5 1505.0 L689.2 1514.0 L695.9 1523.0 L702.6 1514.0 L709.3 1505.0 L716.1 1496.0 L722.8 1487.0 L729.5 1496.0 L736.2 1505.0 L742.9 1496.0 L749.7 1487.0 L756.4 1478.0 L763.1 1487.0 L769.8 1478.0 L776.5 1487.0 L783.3 1496.0 L790.0 1487.0 L796.7 1478.0 L803.4 1469.0 L810.1 1478.0 L816.9 1469.0 L823.6 1478.0 L830.3 1469.0 L837.0 1460.0 L843.7 1469.0 L850.5 1478.0 L857.2 1469.0 L863.9 1478.0 L870.6 1469.0 L877.3 1460.0 L884.1 1469.0 L890.8 1478.0 L897.5 1469.0 L904.2 1460.0 L910.9 1451.0 L917.7 1442.0 L924.4 1433.0 L931.1 1424.0 L937.8 1433.0 L944.5 1424.0 L951.3 1415.0 L958.0 1424.0 L964.7 1415.0 L971.4 1406.0 L978.1 1415.0 L984.9 1406.0 L991.6 1397.0 L998.3 1406.0 L1005.0 1397.0 L1011.7 1388.0 L1018.5 1397.0 L1025.2 1388.0 L1031.9 1397.0 L1038.6 1388.0 L1045.3 1379.0 L1052.1 1370.0 L1058.8 1361.0 L1065.5 1370.0 L1072.2 1361.0 L1078.9 1352.0 L1085.7 1361.0 L1092.4 1352.0 L1099.1 1361.0 L1105.8 1370.0 L1112.5 1361.0 L1119.3 1370.0 L1126.0 1379.0 L1132.7 1370.0 L1139.4 1361.0 L1146.1 1370.0 L1152.9 1361.0 L1159.6 1370.0 L1166.3 1379.0 L1173.0 1388.0 L1179.7 1379.0 L1186.5 1370.0 L1193.2 1361.0 L1199.9 1370.0 L1206.6 1361.0 L1213.3 1352.0 L1220.1 1343.0 L1226.8 1352.0 L1233.5 1361.0 L1240.2 1370.0 L1246.9 1361.0 L1253.7 1352.0 L1260.4 1361.0 L1267.1 1352.0 L1273.8 1361.0 L1280.5 1370.0 L1287.3 1361.0 L1294.0 1370.0 L1300.7 1379.0 L1307.4 1388.0 L1314.1 1397.0 L1320.9 1388.0 L1327.6 1397.0" stroke="#ff7f0e"/><path d="M662.3 1496.0 L669.0 1487.0 L675.7 1496.0 L682.5 1487.0 L689.2 1478.0 L695.9 1469.0 L702.6 1478.0 L709.3 1487.0 L716.1 1496.0 L722.8 1487.0 L729.5 1478.0 L736.2 1469.0 L742.9 1478.0 L749.7 1469.0 L756.4 1478.0 L763.1 1469.0 L769.8 1460.0 L776.5 1451.0 L783.3 1442.0 L790.0 1433.0 L796.7 1442.0 L803.4 1433.0 L810.1 1442.0 L816.9 1451.0 L823.6 1442.0 L830.3 1451.0 L837.0 1442.0 L843.7 1451.0 L850.5 1442.0 L857.2 1433.0 L863.9 1424.0 L870.6 1415.0 L877.3 1424.0 L884.1 1415.0 L890.8 1406.0 L897.5 1397.0 L904.2 1388.0 L910.9 1397.0 L917.7 1406.0 L924.4 1397.0 L931.1 1388.0 L937.8 1397.0 L944.5 1388.0 L951.3 1379.0 L958.0 1388.0 L964.7 1379.0 L971.4 1370.0 L978.1 1361.0 L984.9 1370.0 L991.6 1379.0 L998.3 1370.0 L1005.0 1361.0 L1011.7 1370.0 L1018.5 1361.0 L1025.2 1352.0 L1031.9 1343.0 L1038.6 1334.0 L1045.3 1325.0 L1052.1 1316.0 L1058.8 1307.0 L1065.5 1316.0 L1072.2 1307.0 L1078.9 1298.0 L1085.7 1307.0 L1092.4 1298.0 L1099.1 1307.0 L1105.8 1298.0 L1112.5 1289.0 L1119.3 1280.0 L1126.0 1271.0 L1132.7 1262.0 L1139.4 1253.0 L1146.1 1262.0 L1152.9 1271.0 L1159.6 1262.0 L1166.3 1271.0 L1173.0 1262.0 L1179.7 1253.0 L1186.5 1244.0 L1193.2 1235.0 L1199.9 1226.0 L1206.6 1235.0 L1213.3 1226.0 L1220.1 1217.0 L1226.8 1208.0 L1233.5 1217.0 L1240.2 1208.0 L1246.9 1217.0 L1253.7 1226.0 L1260.4 1217.0 L1267.1 1208.0 L1273.8 1217.0 L1280.5 1226.0 L1287.3 1217.0 L1294.0 1208.0 L1300.7 1217.0 L1307.4 1208.0 L1314.1 1199.0 L1320.9 1190.0 L1327.6 1181.0" stroke="#2ca02c"/><path d="M662.3 1496.0 L669.0 1487.0 L675.7 1478.0 L682.5 1469.0 L689.2 1478.0 L695.9 1487.0 L702.6 1496.0 L709.3 1487.0 L716.1 1478.0 L722.8 1469.0 L729.5 1478.0 L736.2 1487.0 L742.9 1478.0 L749.7 1469.0 L756.4 1460.0 L763.1 1451.0 L769.8 1442.0 L776.5 1451.0 L783.3 1460.0 L790.0 1469.0 L796.7 1478.0 L803.4 1487.0 L810.1 1478.0 L816.9 1469.0 L823.6 1460.0 L830.3 1469.0 L837.0 1478.0 L843.7 1469.0 L850.5 1478.0 L857.2 1469.0 L863.9 1460.0 L870.6 1451.0 L877.3 1460.0 L884.1 1451.0 L890.8 1442.0 L897.5 1451.0 L904.2 1442.0 L910.9 1433.0 L917.7 1424.0 L924.4 1433.0 L931.1 1442.0 L937.8 1451.0 L944.5 1442.0 L951.3 1451.0 L958.0 1442.0 L964.7 1433.0 L971.4 1424.0 L978.1 1433.0 L984.9 1442.0 L991.6 1451.0 L998.3 1442.0 L1005.0 1433.0 L1011.7 1424.0 L1018.5 1433.0 L1025.2 1424.0 L1031.9 1415.0 L1038.6 1406.0 L1045.3 1415.0 L1052.1 1424.0 L1058.8 1433.0 L1065.5 1442.0 L1072.2 1433.0 L1078.9 1442.0 L1085.7 1433.0 L1092.4 1424.0 L1099.1 1433.0 L1105.8 1442.0 L1112.5 1433.0 L1119.3 1424.0 L1126.0 1415.0 L1132.7 1406.0 L1139.4 1415.0 L1146.1 1424.0 L1152.9 1415.0 L1159.6 1406.0 L1166.3 1397.0 L1173.0 1388.0 L1179.7 1397.0 L1186.5 1388.0 L1193.2 1379.0 L1199.9 1388.0 L1206.6 1379.0 L1213.3 1388.0 L1220.1 1379.0 L1226.8 1388.0 L1233.5 1379.0 L1240.2 1370.0 L1246.9 1361.0 L1253.7 1352.0 L1260.4 1361.0 L1267.1 1352.0 L1273.8 1361.0 L1280.5 1352.0 L1287.3 1343.0 L1294.0 1334.0 L1300.7 1325.0 L1307.4 1334.0 L1314.1 1325.0 L1320.9 1316.0 L1327.6 1325.0" stroke="#d62728"/><path d="M662.3 1496.0 L669.0 1505.0 L675.7 1514.0 L682.5 1505.0 L689.2 1514.0 L695.9 1505.0 L702.6 1514.0 L709.3 1505.0 L716.1 1496.0 L722.8 1487.0 L729.5 1478.0 L736.2 1469.0 L742.9 1460.0 L749.7 1451.0 L756.4 1460.0 L763.1 1469.0 L769.8 1460.0 L776.5 1451.0 L783.3 1442.0 L790.0 1433.0 L796.7 1442.0 L803.4 1433.0 L810.1 1424.0 L816.9 1415.0 L823.6 1424.0 L830.3 1415.0 L837.0 1406.0 L843.7 1415.0 L850.5 1406.0 L857.2 1397.0 L863.9 1388.0 L870.6 1379.0 L877.3 1370.0 L884.1 1361.0 L890.8 1352.0 L897.5 1343.0 L904.2 1334.0 L910.9 1325.0 L917.7 1316.0 L924.4 1325.0 L931.1 1316.0 L937.8 1325.0 L944.5 1334.0 L951.3 1325.0 L958.0 1334.0 L964.7 1343.0 L971.4 1352.0 L978.1 1343.0 L984.9 1334.0 L991.6 1325.0 L998.3 1316.0 L1005.0 1307.0 L1011.7 1298.0 L1018.5 1289.0 L1025.2 1298.0 L1031.9 1289.0 L1038.6 1298.0 L1045.3 1289.0 L1052.1 1298.0 L1058.8 1289.0 L1065.5 1298.0 L1072.2 1289.0 L1078.9 1280.0 L1085.7 1289.0 L1092.4 1280.0 L1099.1 1289.0 L1105.8 1298.0 L1112.5 1307.0 L1119.3 1316.0 L1126.0 1325.0 L1132.7 1316.0 L1139.4 1325.0 L1146.1 1334.0 L1152.9 1325.0 L1159.6 1316.0 L1166.3 1307.0 L1173.0 1316.0 L1179.7 1307.0 L1186.5 1316.0 L1193.2 1307.0 L1199.9 1298.0 L1206.6 1289.0 L1213.3 1298.0 L1220.1 1289.0 L1226.8 1280.0 L1233.5 1289.0 L1240.2 1280.0 L1246.9 1289.0 L1253.7 1280.0 L1260.4 1271.0 L1267.1 1280.0 L1273.8 1271.0 L1280.5 1280.0 L1287.3 1271.0 L1294.0 1262.0 L1300.7 1271.0 L1307.4 1280.0 L1314.1 1271.0 L1320.9 1262.0 L1327.6 1253.0" stroke="#9467bd"/><path d="M662.3 1514.0 L669.0 1505.0 L675.7 1496.0 L682.5 1505.0 L689.2 1496.0 L695.9 1505.0 L702.6 1514.0 L709.3 1505.0 L716.1 1496.0 L722.8 1487.0 L729.5 1496.0 L736.2 1505.0 L742.9 1514.0 L749.7 1505.0 L756.4 1496.0 L763.1 1487.0 L769.8 1496.0 L776.5 1505.0 L783.3 1514.0 L790.0 1505.0 L796.7 1496.0 L803.4 1487.0 L810.1 1496.0 L816.9 1505.0 L823.6 1496.0 L830.3 1505.0 L837.0 1496.0 L843.7 1487.0 L850.5 1478.0 L857.2 1469.0 L863.9 1460.0 L870.6 1451.0 L877.3 1442.0 L884.1 1451.0 L890.8 1460.0 L897.5 1451.0 L904.2 1460.0 L910.9 1451.0 L917.7 1460.0 L924.4 1451.0 L931.1 1442.0 L937.8 1433.0 L944.5 1442.0 L951.3 1433.0 L958.0 1424.0 L964.7 1433.0 L971.4 1424.0 L978.1 1415.0 L984.9 1424.0 L991.6 1433.0 L998.3 1424.0 L1005.0 1415.0 L1011.7 1424.0 L1018.5 1415.0 L1025.2 1406.0 L1031.9 1415.0 L1038.6 1406.0 L1045.3 1397.0 L1052.1 1406.0 L1058.8 1397.0 L1065.5 1388.0 L1072.2 1379.0 L1078.9 1370.0 L1085.7 1379.0 L1092.4 1370.0 L1099.1 1379.0 L1105.8 1370.0 L1112.5 1361.0 L1119.3 1370.0 L1126.0 1379.0 L1132.7 1370.0 L1139.4 1379.0 L1146.1 1370.0 L1152.9 1361.0 L1159.6 1352.0 L1166.3 1343.0 L1173.0 1334.0 L1179.7 1343.0 L1186.5 1352.0 L1193.2 1343.0 L1199.9 1334.0 L1206.6 1325.0 L1213.3 1334.0 L1220.1 1325.0 L1226.8 1316.0 L1233.5 1325.0 L1240.2 1316.0 L1246.9 1307.0 L1253.7 1316.0 L1260.4 1307.0 L1267.1 1316.0 L1273.8 1307.0 L1280.5 1298.0 L1287.3 1307.0 L1294.0 1298.0 L1300.7 1289.0 L1307.4 1298.0 L1314.1 1307.0 L1320.9 1316.0 L1327.6 1307.0" stroke="#8c564b"/><path d="M662.3 1514.0 L669.0 1505.0 L675.7 1496.0 L682.5 1487.0 L689.2 1496.0 L695.9 1505.0 L702.6 1514.0 L709.3 1523.0 L716.1 1514.0 L722.8 1505.0 L729.5 1496.0 L736.2 1505.0 L742.9 1514.0 L749.7 1505.0 L756.4 1496.0 L763.1 1487.0 L769.8 1496.0 L776.5 1505.0 L783.3 1514.0 L790.0 1505.0 L796.7 1496.0 L803.4 1487.0 L810.1 1496.0 L816.9 1487.0 L823.6 1478.0 L830.3 1469.0 L837.0 1460.0 L843.7 1451.0 L850.5 1460.0 L857.2 1451.0 L863.9 1442.0 L870.6 1451.0 L877.3 1460.0 L884.1 1451.0 L890.8 1460.0 L897.5 1451.0 L904.2 1442.0 L910.9 1433.0 L917.7 1442.0 L924.4 1433.0 L931.1 1442.0 L937.8 1451.0 L944.5 1442.0 L951.3 1433.0 L958.0 1424.0 L964.7 1433.0 L971.4 1442.0 L978.1 1433.0 L984.9 1424.0 L991.6 1433.0 L998.3 1442.0 L1005.0 1433.0 L1011.7 1442.0 L1018.5 1433.0 L1025.2 1442.0 L1031.9 1451.0 L1038.6 1442.0 L1045.3 1433.0 L1052.1 1424.0 L1058.8 1433.0 L1065.5 1442.0 L1072.2 1433.0 L1078.9 1442.0 L1085.7 1451.0 L1092.4 1460.0 L1099.1 1469.0 L1105.8 1460.0 L1112.5 1469.0 L1119.3 1460.0 L1126.0 1451.0 L1132.7 1442.0 L1139.4 1433.0 L1146.1 1442.0 L1152.9 1451.0 L1159.6 1460.0 L1166.3 1469.0 L1173.0 1478.0 L1179.7 1469.0 L1186.5 1478.0 L1193.2 1469.0 L1199.9 1460.0 L1206.6 1469.0 L1213.3 1460.0 L1220.1 1469.0 L1226.8 1460.0 L1233.5 1451.0 L1240.2 1442.0 L1246.9 1433.0 L1253.7 1442.0 L1260.4 1433.0 L1267.1 1442.0 L1273.8 1433.0 L1280.5 1442.0 L1287.3 1451.0 L1294.0 1442.0 L1300.7 1433.0 L1307.4 1424.0 L1314.1 1415.0 L1320.9 1406.0 L1327.6 1397.0" stroke="#e377c2"/><path d="M662.3 1496.0 L669.0 1505.0 L675.7 1514.0 L682.5 1505.0 L689.2 1496.0 L695.9 1505.0 L702.6 1496.0 L709.3 1487.0 L716.1 1478.0 L722.8 1469.0 L729.5 1460.0 L736.2 1451.0 L742.9 1460.0 L749.7 1451.0 L756.4 1460.0 L763.1 1469.0 L769.8 1478.0 L776.5 1469.0 L783.3 1460.0 L790.0 1451.0 L796.7 1442.0 L803.4 1433.0 L810.1 1424.0 L816.9 1433.0 L823.6 1442.0 L830.3 1433.0 L837.0 1424.0 L843.7 1433.0 L850.5 1424.0 L857.2 1415.0 L863.9 1424.0 L870.6 1415.0 L877.3 1424.0 L884.1 1415.0 L890.8 1424.0 L897.5 1433.0 L904.2 1442.0 L910.9 1433.0 L917.7 1442.0 L924.4 1451.0 L931.1 1442.0 L937.8 1433.0 L944.5 1442.0 L951.3 1451.0 L958.0 1460.0 L964.7 1469.0 L971.4 1478.0 L978.1 1487.0 L984.9 1496.0 L991.6 1505.0 L998.3 1514.0 L1005.0 1505.0 L1011.7 1514.0 L1018.5 1505.0 L1025.2 1514.0 L1031.9 1523.0 L1038.6 1532.0 L1045.3 1523.0 L1052.1 1514.0 L1058.8 1505.0 L1065.5 1514.0 L1072.2 1505.0 L1078.9 1514.0 L1085.7 1505.0 L1092.4 1514.0 L1099.1 1505.0 L1105.8 1514.0 L1112.5 1523.0 L1119.3 1514.0 L1126.0 1523.0 L1132.7 1532.0 L1139.4 1523.0 L1146.1 1532.0 L1152.9 1523.0 L1159.6 1514.0 L1166.3 1523.0 L1173.0 1514.0 L1179.7 1505.0 L1186.5 1496.0 L1193.2 1487.0 L1199.9 1478.0 L1206.6 1487.0 L1213.3 1478.0 L1220.1 1487.0 L1226.8 1478.0 L1233.5 1469.0 L1240.2 1478.0 L1246.9 1469.0 L1253.7 1478.0 L1260.4 1469.0 L1267.1 1460.0 L1273.8 1451.0 L1280.5 1442.0 L1287.3 1433.0 L1294.0 1442.0 L1300.7 1433.0 L1307.4 1424.0 L1314.1 1415.0 L1320.9 1406.0 L1327.6 1415.0" stroke="#7f7f7f"/><path d="M662.3 1514.0 L669.0 1505.0 L675.7 1514.0 L682.5 1523.0 L689.2 1532.0 L695.9 1541.0 L702.6 1532.0 L709.3 1541.0 L716.1 1550.0 L722.8 1559.0 L729.5 1568.0 L736.2 1559.0 L742.9 1568.0 L749.7 1559.0 L756.4 1550.0 L763.1 1541.0 L769.8 1532.0 L776.5 1541.0 L783.3 1550.0 L790.0 1541.0 L796.7 1532.0 L803.4 1523.0 L810.1 1532.0 L816.9 1523.0 L823.6 1514.0 L830.3 1523.0 L837.0 1514.0 L843.7 1523.0 L850.5 1514.0 L857.2 1523.0 L863.9 1514.0 L870.6 1505.0 L877.3 1496.0 L884.1 1505.0 L890.8 1496.0 L897.5 1487.0 L904.2 1478.0 L910.9 1487.0 L917.7 1478.0 L924.4 1469.0 L931.1 1478.0 L937.8 1469.0 L944.5 1478.0 L951.3 1487.0 L958.0 1478.0 L964.7 1469.0 L971.4 1478.0 L978.1 1487.0 L984.9 1478.0 L991.6 1469.0 L998.3 1478.0 L1005.0 1487.0 L1011.7 1478.0 L1018.5 1487.0 L1025.2 1478.0 L1031.9 1469.0 L1038.6 1460.0 L1045.3 1469.0 L1052.1 1478.0 L1058.8 1487.0 L1065.5 1478.0 L1072.2 1469.0 L1078.9 1478.0 L1085.7 1487.0 L1092.4 1496.0 L1099.1 1505.0 L1105.8 1514.0 L1112.5 1505.0 L1119.3 1496.0 L1126.0 1487.0 L1132.7 1496.0 L1139.4 1487.0 L1146.1 1478.0 L1152.9 1487.0 L1159.6 1496.0 L1166.3 1505.0 L1173.0 1496.0 L1179.7 1505.0 L1186.5 1496.0 L1193.2 1487.0 L1199.9 1478.0 L1206.6 1469.0 L1213.3 1460.0 L1220.1 1451.0 L1226.8 1442.0 L1233.5 1433.0 L1240.2 1424.0 L1246.9 1415.0 L1253.7 1406.0 L1260.4 1397.0 L1267.1 1406.0 L1273.8 1397.0 L1280.5 1388.0 L1287.3 1379.0 L1294.0 1370.0 L1300.7 1379.0 L1307.4 1388.0 L1314.1 1397.0 L1320.9 1406.0 L1327.6 1415.0" stroke="#bcbd22"/><path d="M662.3 1496.0 L669.0 1505.0 L675.7 1496.0 L682.5 1487.0 L689.2 1478.0 L695.9 1469.0 L702.6 1478.0 L709.3 1487.0 L716.1 1496.0 L722.8 1487.0 L729.5 1478.0 L736.2 1469.0 L742.9 1478.0 L749.7 1469.0 L756.4 1460.0 L763.1 1451.0 L769.8 1460.0 L776.5 1451.0 L783.3 1442.0 L790.0 1433.0 L796.7 1442.0 L803.4 1433.0 L810.1 1424.0 L816.9 1433.0 L823.6 1424.0 L830.3 1415.0 L837.0 1424.0 L843.7 1415.0 L850.5 1406.0 L857.2 1415.0 L863.9 1424.0 L870.6 1415.0 L877.3 1406.0 L884.1 1415.0 L890.8 1424.0 L897.5 1433.0 L904.2 1424.0 L910.9 1433.0 L917.7 1424.0 L924.4 1433.0 L931.1 1442.0 L937.8 1433.0 L944.5 1442.0 L951.3 1433.0 L958.0 1442.0 L964.7 1451.0 L971.4 1442.0 L978.1 1433.0 L984.9 1442.0 L991.6 1433.0 L998.3 1424.0 L1005.0 1433.0 L1011.7 1442.0 L1018.5 1433.0 L1025.2 1424.0 L1031.9 1433.0 L1038.6 1424.0 L1045.3 1433.0 L1052.1 1424.0 L1058.8 1433.0 L1065.5 1424.0 L1072.2 1415.0 L1078.9 1424.0 L1085.7 1415.0 L1092.4 1424.0 L1099.1 1433.0 L1105.8 1442.0 L1112.5 1433.0 L1119.3 1442.0 L1126.0 1451.0 L1132.7 1442.0 L1139.4 1451.0 L1146.1 1460.0 L1152.9 1469.0 L1159.6 1478.0 L1166.3 1469.0 L1173.0 1460.0 L1179.7 1469.0 L1186.5 1460.0 L1193.2 1451.0 L1199.9 1442.0 L1206.6 1433.0 L1213.3 1424.0 L1220.1 1415.0 L1226.8 1424.0 L1233.5 1415.0 L1240.2 1406.0 L1246.9 1415.0 L1253.7 1406.0 L1260.4 1397.0 L1267.1 1388.0 L1273.8 1379.0 L1280.5 1388.0 L1287.3 1397.0 L1294.0 1388.0 L1300.7 1379.0 L1307.4 1388.0 L1314.1 1379.0 L1320.9 1370.0 L1327.6 1379.0" stroke="#17becf"/><path d="M662.3 1514.0 L669.0 1523.0 L675.7 1532.0 L682.5 1523.0 L689.2 1514.0 L695.9 1505.0 L702.6 1514.0 L709.3 1505.0 L716.1 1496.0 L722.8 1505.0 L729.5 1496.0 L736.2 1487.0 L742.9 1478.0 L749.7 1487.0 L756.4 1478.0 L763.1 1487.0 L769.8 1478.0 L776.5 1487.0 L783.3 1478.0 L790.0 1487.0 L796.7 1496.0 L803.4 1487.0 L810.1 1496.0 L816.9 1505.0 L823.6 1496.0 L830.3 1505.0 L837.0 1496.0 L843.7 1487.0 L850.5 1478.0 L857.2 1487.0 L863.9 1478.0 L870.6 1469.0 L877.3 1460.0 L884.1 1469.0 L890.8 1460.0 L897.5 1469.0 L904.2 1460.0 L910.9 1451.0 L917.7 1442.0 L924.4 1433.0 L931.1 1424.0 L937.8 1415.0 L944.5 1406.0 L951.3 1415.0 L958.0 1406.0 L964.7 1397.0 L971.4 1388.0 L978.1 1379.0 L984.9 1388.0 L991.6 1397.0 L998.3 1406.0 L1005.0 1397.0 L1011.7 1406.0 L1018.5 1397.0 L1025.2 1388.0 L1031.9 1379.0 L1038.6 1388.0 L1045.3 1379.0 L1052.1 1370.0 L1058.8 1379.0 L1065.5 1388.0 L1072.2 1379.0 L1078.9 1370.0 L1085.7 1379.0 L1092.4 1388.0 L1099.1 1397.0 L1105.8 1388.0 L1112.5 1397.0 L1119.3 1406.0 L1126.0 1397.0 L1132.7 1388.0 L1139.4 1397.0 L1146.1 1388.0 L1152.9 1397.0 L1159.6 1388.0 L1166.3 1379.0 L1173.0 1388.0 L1179.7 1379.0 L1186.5 1370.0 L1193.2 1361.0 L1199.9 1352.0 L1206.6 1361.0 L1213.3 1352.0 L1220.1 1343.0 L1226.8 1334.0 L1233.5 1325.0 L1240.2 1316.0 L1246.9 1325.0 L1253.7 1334.0 L1260.4 1325.0 L1267.1 1316.0 L1273.8 1307.0 L1280.5 1298.0 L1287.3 1289.0 L1294.0 1298.0 L1300.7 1307.0 L1307.4 1316.0 L1314.1 1307.0 L1320.9 1316.0 L1327.6 1325.0" stroke="#1f77b4"/><path d="M662.3 1496.0 L669.0 1487.0 L675.7 1496.0 L682.5 1505.0 L689.2 1496.0 L695.9 1487.0 L702.6 1478.0 L709.3 1487.0 L716.1 1478.0 L722.8 1487.0 L729.5 1496.0 L736.2 1487.0 L742.9 1478.0 L749.7 1487.0 L756.4 1496.0 L763.1 1487.0 L769.8 1496.0 L776.5 1505.0 L783.3 1514.0 L790.0 1505.0 L796.7 1514.0 L803.4 1523.0 L810.1 1514.0 L816.9 1523.0 L823.6 1514.0 L830.3 1523.0 L837.0 1514.0 L843.7 1523.0 L850.5 1514.0 L857.2 1505.0 L863.9 1496.0 L870.6 1505.0 L877.3 1496.0 L884.1 1487.0 L890.8 1478.0 L897.5 1487.0 L904.2 1478.0 L910.9 1469.0 L917.7 1460.0 L924.4 1451.0 L931.1 1442.0 L937.8 1433.0 L944.5 1442.0 L951.3 1433.0 L958.0 1424.0 L964.7 1415.0 L971.4 1424.0 L978.1 1415.0 L984.9 1406.0 L991.6 1397.0 L998.3 1406.0 L1005.0 1397.0 L1011.7 1388.0 L1018.5 1397.0 L1025.2 1388.0 L1031.9 1379.0 L1038.6 1370.0 L1045.3 1379.0 L1052.1 1370.0 L1058.8 1379.0 L1065.5 1370.0 L1072.2 1379.0 L1078.9 1388.0 L1085.7 1379.0 L1092.4 1388.0 L1099.1 1397.0 L1105.8 1406.0 L1112.5 1397.0 L1119.3 1388.0 L1126.0 1379.0 L1132.7 1388.0 L1139.4 1379.0 L1146.1 1388.0 L1152.9 1379.0 L1159.6 1388.0 L1166.3 1397.0 L1173.0 1388.0 L1179.7 1397.0 L1186.5 1406.0 L1193.2 1397.0 L1199.9 1388.0 L1206.6 1379.0 L1213.3 1388.0 L1220.1 1379.0 L1226.8 1370.0 L1233.5 1379.0 L1240.2 1388.0 L1246.9 1379.0 L1253.7 1370.0 L1260.4 1361.0 L1267.1 1352.0 L1273.8 1361.0 L1280.5 1370.0 L1287.3 1379.0 L1294.0 1388.0 L1300.7 1379.0 L1307.4 1370.0 L1314.1 1361.0 L1320.9 1352.0 L1327.6 1361.0" stroke="#ff7f0e"/><path d="M662.3 1496.0 L669.0 1505.0 L675.7 1496.0 L682.5 1487.0 L689.2 1478.0 L695.9 1487.0 L702.6 1496.0 L709.3 1505.0 L716.1 1496.0 L722.8 1505.0 L729.5 1514.0 L736.2 1523.0 L742.9 1532.0 L749.7 1523.0 L756.4 1532.0 L763.1 1523.0 L769.8 1532.0 L776.5 1523.0 L783.3 1532.0 L790.0 1523.0 L796.7 1514.0 L803.4 1523.0 L810.1 1514.0 L816.9 1523.0 L823.6 1532.0 L830.3 1523.0 L837.0 1514.0 L843.7 1505.0 L850.5 1496.0 L857.2 1487.0 L863.9 1496.0 L870.6 1487.0 L877.3 1478.0 L884.1 1469.0 L890.8 1460.0 L897.5 1451.0 L904.2 1442.0 L910.9 1451.0 L917.7 1460.0 L924.4 1469.0 L931.1 1460.0 L937.8 1469.0 L944.5 1460.0 L951.3 1451.0 L958.0 1442.0 L964.7 1451.0 L971.4 1442.0 L978.1 1433.0 L984.9 1442.0 L991.6 1451.0 L998.3 1442.0 L1005.0 1451.0 L1011.7 1460.0 L1018.5 1451.0 L1025.2 1460.0 L1031.9 1469.0 L1038.6 1478.0 L1045.3 1469.0 L1052.1 1478.0 L1058.8 1469.0 L1065.5 1460.0 L1072.2 1451.0 L1078.9 1442.0 L1085.7 1451.0 L1092.4 1460.0 L1099.1 1451.0 L1105.8 1460.0 L1112.5 1451.0 L1119.3 1442.0 L1126.0 1433.0 L1132.7 1424.0 L1139.4 1415.0 L1146.1 1406.0 L1152.9 1415.0 L1159.6 1424.0 L1166.3 1415.0 L1173.0 1424.0 L1179.7 1433.0 L1186.5 1424.0 L1193.2 1433.0 L1199.9 1424.0 L1206.6 1415.0 L1213.3 1406.0 L1220.1 1415.0 L1226.8 1424.0 L1233.5 1433.0 L1240.2 1424.0 L1246.9 1415.0 L1253.7 1406.0 L1260.4 1397.0 L1267.1 1388.0 L1273.8 1397.0 L1280.5 1388.0 L1287.3 1379.0 L1294.0 1388.0 L1300.7 1397.0 L1307.4 1388.0 L1314.1 1397.0 L1320.9 1388.0 L1327.6 1379.0" stroke="#2ca02c"/><path d="M662.3 1514.0 L669.0 1523.0 L675.7 1514.0 L682.5 1523.0 L689.2 1532.0 L695.9 1523.0 L702.6 1514.0 L709.3 1523.0 L716.1 1532.0 L722.8 1523.0 L729.5 1514.0 L736.2 1523.0 L742.9 1514.0 L749.7 1523.0 L756.4 1514.0 L763.1 1505.0 L769.8 1496.0 L776.5 1487.0 L783.3 1478.0 L790.0 1469.0 L796.7 1478.0 L803.4 1487.0 L810.1 1496.0 L816.9 1487.0 L823.6 1478.0 L830.3 1487.0 L837.0 1496.0 L843.7 1487.0 L850.5 1478.0 L857.2 1469.0 L863.9 1478.0 L870.6 1469.0 L877.3 1460.0 L884.1 1451.0 L890.8 1442.0 L897.5 1433.0 L904.2 1424.0 L910.9 1415.0 L917.7 1406.0 L924.4 1397.0 L931.1 1406.0 L937.8 1397.0 L944.5 1388.0 L951.3 1379.0 L958.0 1388.0 L964.7 1379.0 L971.4 1388.0 L978.1 1379.0 L984.9 1370.0 L991.6 1361.0 L998.3 1352.0 L1005.0 1361.0 L1011.7 1352.0 L1018.5 1343.0 L1025.2 1352.0 L1031.9 1343.0 L1038.6 1352.0 L1045.3 1361.0 L1052.1 1352.0 L1058.8 1361.0 L1065.5 1352.0 L1072.2 1343.0 L1078.9 1334.0 L1085.7 1325.0 L1092.4 1334.0 L1099.1 1343.0 L1105.8 1352.0 L1112.5 1343.0 L1119.3 1352.0 L1126.0 1343.0 L1132.7 1334.0 L1139.4 1343.0 L1146.1 1352.0 L1152.9 1343.0 L1159.6 1334.0 L1166.3 1343.0 L1173.0 1334.0 L1179.7 1343.0 L1186.5 1352.0 L1193.2 1343.0 L1199.9 1352.0 L1206.6 1361.0 L1213.3 1370.0 L1220.1 1361.0 L1226.8 1370.0 L1233.5 1361.0 L1240.2 1352.0 L1246.9 1343.0 L1253.7 1352.0 L1260.4 1343.0 L1267.1 1334.0 L1273.8 1325.0 L1280.5 1334.0 L1287.3 1325.0 L1294.0 1316.0 L1300.7 1307.0 L1307.4 1316.0 L1314.1 1307.0 L1320.9 1298.0 L1327.6 1289.0" stroke="#d62728"/><path d="M662.3 1496.0 L669.0 1505.0 L675.7 1514.0 L682.5 1523.0 L689.2 1532.0 L695.9 1541.0 L702.6 1532.0 L709.3 1541.0 L716.1 1550.0 L722.8 1559.0 L729.5 1568.0 L736.2 1559.0 L742.9 1550.0 L749.7 1541.0 L756.4 1532.0 L763.1 1541.0 L769.8 1550.0 L776.5 1541.0 L783.3 1532.0 L790.0 1523.0 L796.7 1532.0 L803.4 1523.0 L810.1 1514.0 L816.9 1505.0 L823.6 1514.0 L830.3 1505.0 L837.0 1496.0 L843.7 1505.0 L850.5 1496.0 L857.2 1505.0 L863.9 1496.0 L870.6 1505.0 L877.3 1496.0 L884.1 1505.0 L890.8 1496.0 L897.5 1487.0 L904.2 1478.0 L910.9 1469.0 L917.7 1478.0 L924.4 1469.0 L931.1 1478.0 L937.8 1469.0 L944.5 1460.0 L951.3 1451.0 L958.0 1442.0 L964.7 1433.0 L971.4 1424.0 L978.1 1415.0 L984.9 1406.0 L991.6 1397.0 L998.3 1406.0 L1005.0 1397.0 L1011.7 1388.0 L1018.5 1397.0 L1025.2 1406.0 L1031.9 1397.0 L1038.6 1388.0 L1045.3 1397.0 L1052.1 1406.0 L1058.8 1397.0 L1065.5 1388.0 L1072.2 1379.0 L1078.9 1370.0 L1085.7 1361.0 L1092.4 1370.0 L1099.1 1361.0 L1105.8 1352.0 L1112.5 1361.0 L1119.3 1370.0 L1126.0 1379.0 L1132.7 1370.0 L1139.4 1361.0 L1146.1 1370.0 L1152.9 1379.0 L1159.6 1370.0 L1166.3 1379.0 L1173.0 1370.0 L1179.7 1379.0 L1186.5 1388.0 L1193.2 1379.0 L1199.9 1370.0 L1206.6 1379.0 L1213.3 1370.0 L1220.1 1361.0 L1226.8 1352.0 L1233.5 1343.0 L1240.2 1334.0 L1246.9 1325.0 L1253.7 1316.0 L1260.4 1325.0 L1267.1 1316.0 L1273.8 1307.0 L1280.5 1298.0 L1287.3 1289.0 L1294.0 1298.0 L1300.7 1289.0 L1307.4 1280.0 L1314.1 1271.0 L1320.9 1262.0 L1327.6 1253.0" stroke="#9467bd"/><path d="M662.3 1496.0 L669.0 1505.0 L675.7 1514.0 L682.5 1505.0 L689.2 1496.0 L695.9 1487.0 L702.6 1478.0 L709.3 1469.0 L716.1 1478.0 L722.8 1469.0 L729.5 1460.0 L736.2 1451.0 L742.9 1442.0 L749.7 1433.0 L756.4 1424.0 L763.1 1415.0 L769.8 1424.0 L776.5 1433.0 L783.3 1424.0 L790.0 1415.0 L796.7 1424.0 L803.4 1415.0 L810.1 1424.0 L816.9 1415.0 L823.6 1424.0 L830.3 1433.0 L837.0 1442.0 L843.7 1433.0 L850.5 1442.0 L857.2 1433.0 L863.9 1442.0 L870.6 1451.0 L877.3 1442.0 L884.1 1433.0 L890.8 1442.0 L897.5 1433.0 L904.2 1442.0 L910.9 1433.0 L917.7 1442.0 L924.4 1433.0 L931.1 1442.0 L937.8 1451.0 L944.5 1442.0 L951.3 1433.0 L958.0 1442.0 L964.7 1433.0 L971.4 1424.0 L978.1 1433.0 L984.9 1442.0 L991.6 1433.0 L998.3 1442.0 L1005.0 1451.0 L1011.7 1460.0 L1018.5 1451.0 L1025.2 1442.0 L1031.9 1433.0 L1038.6 1424.0 L1045.3 1433.0 L1052.1 1442.0 L1058.8 1451.0 L1065.5 1442.0 L1072.2 1451.0 L1078.9 1442.0 L1085.7 1451.0 L1092.4 1460.0 L1099.1 1469.0 L1105.8 1460.0 L1112.5 1451.0 L1119.3 1442.0 L1126.0 1433.0 L1132.7 1424.0 L1139.4 1415.0 L1146.1 1406.0 L1152.9 1415.0 L1159.6 1406.0 L1166.3 1415.0 L1173.0 1424.0 L1179.7 1415.0 L1186.5 1424.0 L1193.2 1415.0 L1199.9 1424.0 L1206.6 1433.0 L1213.3 1424.0 L1220.1 1433.0 L1226.8 1442.0 L1233.5 1451.0 L1240.2 1442.0 L1246.9 1451.0 L1253.7 1460.0 L1260.4 1451.0 L1267.1 1442.0 L1273.8 1433.0 L1280.5 1424.0 L1287.3 1433.0 L1294.0 1442.0 L1300.7 1451.0 L1307.4 1460.0 L1314.1 1451.0 L1320.9 1460.0 L1327.6 1469.0" stroke="#8c564b"/><path d="M662.3 1496.0 L669.0 1505.0 L675.7 1496.0 L682.5 1487.0 L689.2 1496.0 L695.9 1505.0 L702.6 1496.0 L709.3 1505.0 L716.1 1496.0 L722.8 1487.0 L729.5 1478.0 L736.2 1487.0 L742.9 1478.0 L749.7 1469.0 L756.4 1460.0 L763.1 1451.0 L769.8 1442.0 L776.5 1433.0 L783.3 1424.0 L790.0 1433.0 L796.7 1424.0 L803.4 1433.0 L810.1 1442.0 L816.9 1433.0 L823.6 1442.0 L830.3 1451.0 L837.0 1442.0 L843.7 1451.0 L850.5 1442.0 L857.2 1433.0 L863.9 1424.0 L870.6 1415.0 L877.3 1406.0 L884.1 1415.0 L890.8 1406.0 L897.5 1397.0 L904.2 1406.0 L910.9 1397.0 L917.7 1388.0 L924.4 1379.0 L931.1 1370.0 L937.8 1361.0 L944.5 1370.0 L951.3 1361.0 L958.0 1370.0 L964.7 1361.0 L971.4 1352.0 L978.1 1343.0 L984.9 1334.0 L991.6 1325.0 L998.3 1316.0 L1005.0 1325.0 L1011.7 1334.0 L1018.5 1343.0 L1025.2 1352.0 L1031.9 1343.0 L1038.6 1352.0 L1045.3 1343.0 L1052.1 1334.0 L1058.8 1343.0 L1065.5 1334.0 L1072.2 1343.0 L1078.9 1334.0 L1085.7 1343.0 L1092.4 1334.0 L1099.1 1343.0 L1105.8 1352.0 L1112.5 1361.0 L1119.3 1370.0 L1126.0 1379.0 L1132.7 1388.0 L1139.4 1379.0 L1146.1 1370.0 L1152.9 1379.0 L1159.6 1370.0 L1166.3 1361.0 L1173.0 1370.0 L1179.7 1361.0 L1186.5 1352.0 L1193.2 1343.0 L1199.9 1352.0 L1206.6 1343.0 L1213.3 1334.0 L1220.1 1325.0 L1226.8 1316.0 L1233.5 1325.0 L1240.2 1334.0 L1246.9 1325.0 L1253.7 1316.0 L1260.4 1307.0 L1267.1 1298.0 L1273.8 1289.0 L1280.5 1280.0 L1287.3 1271.0 L1294.0 1262.0 L1300.7 1271.0 L1307.4 1262.0 L1314.1 1253.0 L1320.9 1244.0 L1327.6 1253.0" stroke="#e377c2"/><path d="M662.3 1496.0 L669.0 1487.0 L675.7 1496.0 L682.5 1487.0 L689.2 1478.0 L695.9 1469.0 L702.6 1460.0 L709.3 1451.0 L716.1 1442.0 L722.8 1451.0 L729.5 1442.0 L736.2 1451.0 L742.9 1442.0 L749.7 1433.0 L756.4 1424.0 L763.1 1433.0 L769.8 1424.0 L776.5 1415.0 L783.3 1424.0 L790.0 1433.0 L796.7 1442.0 L803.4 1433.0 L810.1 1442.0 L816.9 1433.0 L823.6 1442.0 L830.3 1433.0 L837.0 1442.0 L843.7 1451.0 L850.5 1442.0 L857.2 1451.0 L863.9 1442.0 L870.6 1433.0 L877.3 1424.0 L884.1 1415.0 L890.8 1406.0 L897.5 1415.0 L904.2 1406.0 L910.9 1415.0 L917.7 1406.0 L924.4 1415.0 L931.1 1424.0 L937.8 1415.0 L944.5 1424.0 L951.3 1433.0 L958.0 1424.0 L964.7 1415.0 L971.4 1424.0 L978.1 1415.0 L984.9 1424.0 L991.6 1415.0 L998.3 1406.0 L1005.0 1415.0 L1011.7 1406.0 L1018.5 1415.0 L1025.2 1406.0 L1031.9 1397.0 L1038.6 1388.0 L1045.3 1397.0 L1052.1 1406.0 L1058.8 1397.0 L1065.5 1388.0 L1072.2 1397.0 L1078.9 1406.0 L1085.7 1415.0 L1092.4 1424.0 L1099.1 1415.0 L1105.8 1424.0 L1112.5 1415.0 L1119.3 1406.0 L1126.0 1397.0 L1132.7 1406.0 L1139.4 1415.0 L1146.1 1424.0 L1152.9 1415.0 L1159.6 1424.0 L1166.3 1433.0 L1173.0 1424.0 L1179.7 1433.0 L1186.5 1424.0 L1193.2 1415.0 L1199.9 1406.0 L1206.6 1397.0 L1213.3 1388.0 L1220.1 1379.0 L1226.8 1388.0 L1233.5 1379.0 L1240.2 1370.0 L1246.9 1361.0 L1253.7 1352.0 L1260.4 1343.0 L1267.1 1334.0 L1273.8 1325.0 L1280.5 1316.0 L1287.3 1307.0 L1294.0 1316.0 L1300.7 1307.0 L1307.4 1298.0 L1314.1 1289.0 L1320.9 1298.0 L1327.6 1289.0" stroke="#7f7f7f"/><path d="M662.3 1514.0 L669.0 1505.0 L675.7 1496.0 L682.5 1505.0 L689.2 1514.0 L695.9 1505.0 L702.6 1496.0 L709.3 1505.0 L716.1 1514.0 L722.8 1505.0 L729.5 1496.0 L736.2 1487.0 L742.9 1496.0 L749.7 1505.0 L756.4 1496.0 L763.1 1487.0 L769.8 1478.0 L776.5 1469.0 L783.3 1460.0 L790.0 1469.0 L796.7 1460.0 L803.4 1451.0 L810.1 1442.0 L816.9 1433.0 L823.6 1442.0 L830.3 1433.0 L837.0 1424.0 L843.7 1433.0 L850.5 1424.0 L857.2 1415.0 L863.9 1406.0 L870.6 1397.0 L877.3 1388.0 L884.1 1379.0 L890.8 1370.0 L897.5 1379.0 L904.2 1370.0 L910.9 1361.0 L917.7 1352.0 L924.4 1361.0 L931.1 1352.0 L937.8 1361.0 L944.5 1352.0 L951.3 1343.0 L958.0 1334.0 L964.7 1343.0 L971.4 1334.0 L978.1 1325.0 L984.9 1316.0 L991.6 1325.0 L998.3 1316.0 L1005.0 1325.0 L1011.7 1316.0 L1018.5 1307.0 L1025.2 1298.0 L1031.9 1289.0 L1038.6 1280.0 L1045.3 1271.0 L1052.1 1280.0 L1058.8 1289.0 L1065.5 1298.0 L1072.2 1307.0 L1078.9 1298.0 L1085.7 1289.0 L1092.4 1280.0 L1099.1 1289.0 L1105.8 1280.0 L1112.5 1289.0 L1119.3 1298.0 L1126.0 1307.0 L1132.7 1298.0 L1139.4 1307.0 L1146.1 1298.0 L1152.9 1289.0 L1159.6 1298.0 L1166.3 1289.0 L1173.0 1298.0 L1179.7 1307.0 L1186.5 1316.0 L1193.2 1307.0 L1199.9 1316.0 L1206.6 1307.0 L1213.3 1316.0 L1220.1 1325.0 L1226.8 1334.0 L1233.5 1325.0 L1240.2 1334.0 L1246.9 1343.0 L1253.7 1352.0 L1260.4 1343.0 L1267.1 1334.0 L1273.8 1343.0 L1280.5 1352.0 L1287.3 1343.0 L1294.0 1352.0 L1300.7 1343.0 L1307.4 1334.0 L1314.1 1325.0 L1320.9 1316.0 L1327.6 1325.0" stroke="#bcbd22"/><path d="M662.3 1496.0 L669.0 1505.0 L675.7 1514.0 L682.5 1523.0 L689.2 1514.0 L695.9 1505.0 L702.6 1496.0 L709.3 1505.0 L716.1 1496.0 L722.8 1487.0 L729.5 1478.0 L736.2 1469.0 L742.9 1478.0 L749.7 1487.0 L756.4 1496.0 L763.1 1487.0 L769.8 1478.0 L776.5 1469.0 L783.3 1478.0 L790.0 1469.0 L796.7 1478.0 L803.4 1469.0 L810.1 1478.0 L816.9 1469.0 L823.6 1478.0 L830.3 1487.0 L837.0 1478.0 L843.7 1487.0 L850.5 1478.0 L857.2 1469.0 L863.9 1460.0 L870.6 1469.0 L877.3 1478.0 L884.1 1487.0 L890.8 1478.0 L897.5 1469.0 L904.2 1460.0 L910.9 1451.0 L917.7 1460.0 L924.4 1469.0 L931.1 1460.0 L937.8 1469.0 L944.5 1460.0 L951.3 1451.0 L958.0 1442.0 L964.7 1451.0 L971.4 1460.0 L978.1 1451.0 L984.9 1460.0 L991.6 1451.0 L998.3 1442.0 L1005.0 1433.0 L1011.7 1424.0 L1018.5 1433.0 L1025.2 1442.0 L1031.9 1433.0 L1038.6 1442.0 L1045.3 1433.0 L1052.1 1442.0 L1058.8 1433.0 L1065.5 1424.0 L1072.2 1415.0 L1078.9 1424.0 L1085.7 1415.0 L1092.4 1406.0 L1099.1 1415.0 L1105.8 1406.0 L1112.5 1397.0 L1119.3 1406.0 L1126.0 1415.0 L1132.7 1406.0 L1139.4 1397.0 L1146.1 1406.0 L1152.9 1397.0 L1159.6 1388.0 L1166.3 1397.0 L1173.0 1406.0 L1179.7 1397.0 L1186.5 1406.0 L1193.2 1397.0 L1199.9 1388.0 L1206.6 1397.0 L1213.3 1388.0 L1220.1 1379.0 L1226.8 1388.0 L1233.5 1379.0 L1240.2 1388.0 L1246.9 1379.0 L1253.7 1388.0 L1260.4 1397.0 L1267.1 1406.0 L1273.8 1397.0 L1280.5 1406.0 L1287.3 1397.0 L1294.0 1406.0 L1300.7 1397.0 L1307.4 1388.0 L1314.1 1379.0 L1320.9 1370.0 L1327.6 1379.0" stroke="#17becf"/><path d="M662.3 1496.0 L669.0 1487.0 L675.7 1496.0 L682.5 1487.0 L689.2 1478.0 L695.9 1469.0 L702.6 1460.0 L709.3 1451.0 L716.1 1442.0 L722.8 1451.0 L729.5 1442.0 L736.2 1433.0 L742.9 1424.0 L749.7 1415.0 L756.4 1406.0 L763.1 1397.0 L769.8 1388.0 L776.5 1397.0 L783.3 1406.0 L790.0 1397.0 L796.7 1388.0 L803.4 1379.0 L810.1 1388.0 L816.9 1397.0 L823.6 1388.0 L830.3 1379.0 L837.0 1388.0 L843.7 1397.0 L850.5 1406.0 L857.2 1415.0 L863.9 1406.0 L870.6 1415.0 L877.3 1406.0 L884.1 1415.0 L890.8 1406.0 L897.5 1397.0 L904.2 1406.0 L910.9 1397.0 L917.7 1388.0 L924.4 1379.0 L931.1 1370.0 L937.8 1361.0 L944.5 1370.0 L951.3 1361.0 L958.0 1352.0 L964.7 1361.0 L971.4 1352.0 L978.1 1361.0 L984.9 1352.0 L991.6 1343.0 L998.3 1334.0 L1005.0 1343.0 L1011.7 1352.0 L1018.5 1361.0 L1025.2 1370.0 L1031.9 1379.0 L1038.6 1370.0 L1045.3 1379.0 L1052.1 1370.0 L1058.8 1379.0 L1065.5 1370.0 L1072.2 1361.0 L1078.9 1352.0 L1085.7 1343.0 L1092.4 1334.0 L1099.1 1343.0 L1105.8 1334.0 L1112.5 1325.0 L1119.3 1334.0 L1126.0 1343.0 L1132.7 1334.0 L1139.4 1343.0 L1146.1 1334.0 L1152.9 1343.0 L1159.6 1334.0 L1166.3 1325.0 L1173.0 1316.0 L1179.7 1307.0 L1186.5 1316.0 L1193.2 1325.0 L1199.9 1316.0 L1206.6 1307.0 L1213.3 1316.0 L1220.1 1307.0 L1226.8 1316.0 L1233.5 1307.0 L1240.2 1298.0 L1246.9 1307.0 L1253.7 1298.0 L1260.4 1307.0 L1267.1 1298.0 L1273.8 1289.0 L1280.5 1280.0 L1287.3 1289.0 L1294.0 1280.0 L1300.7 1271.0 L1307.4 1280.0 L1314.1 1271.0 L1320.9 1280.0 L1327.6 1289.0" stroke="#1f77b4"/><path d="M662.3 1514.0 L669.0 1523.0 L675.7 1532.0 L682.5 1541.0 L689.2 1532.0 L695.9 1523.0 L702.6 1514.0 L709.3 1523.0 L716.1 1532.0 L722.8 1523.0 L729.5 1514.0 L736.2 1505.0 L742.9 1514.0 L749.7 1505.0 L756.4 1514.0 L763.1 1523.0 L769.8 1514.0 L776.5 1505.0 L783.3 1514.0 L790.0 1523.0 L796.7 1514.0 L803.4 1505.0 L810.1 1496.0 L816.9 1487.0 L823.6 1478.0 L830.3 1487.0 L837.0 1478.0 L843.7 1487.0 L850.5 1478.0 L857.2 1487.0 L863.9 1496.0 L870.6 1487.0 L877.3 1496.0 L884.1 1505.0 L890.8 1496.0 L897.5 1505.0 L904.2 1514.0 L910.9 1505.0 L917.7 1496.0 L924.4 1487.0 L931.1 1478.0 L937.8 1469.0 L944.5 1460.0 L951.3 1469.0 L958.0 1460.0 L964.7 1451.0 L971.4 1460.0 L978.1 1469.0 L984.9 1478.0 L991.6 1469.0 L998.3 1478.0 L1005.0 1469.0 L1011.7 1460.0 L1018.5 1469.0 L1025.2 1460.0 L1031.9 1451.0 L1038.6 1460.0 L1045.3 1451.0 L1052.1 1460.0 L1058.8 1451.0 L1065.5 1442.0 L1072.2 1451.0 L1078.9 1460.0 L1085.7 1451.0 L1092.4 1442.0 L1099.1 1451.0 L1105.8 1442.0 L1112.5 1451.0 L1119.3 1442.0 L1126.0 1433.0 L1132.7 1442.0 L1139.4 1433.0 L1146.1 1424.0 L1152.9 1433.0 L1159.6 1424.0 L1166.3 1415.0 L1173.0 1424.0 L1179.7 1433.0 L1186.5 1424.0 L1193.2 1415.0 L1199.9 1406.0 L1206.6 1415.0 L1213.3 1424.0 L1220.1 1433.0 L1226.8 1424.0 L1233.5 1433.0 L1240.2 1424.0 L1246.9 1415.0 L1253.7 1406.0 L1260.4 1397.0 L1267.1 1388.0 L1273.8 1379.0 L1280.5 1370.0 L1287.3 1379.0 L1294.0 1370.0 L1300.7 1379.0 L1307.4 1388.0 L1314.1 1379.0 L1320.9 1370.0 L1327.6 1361.0" stroke="#ff7f0e"/><path d="M662.3 1496.0 L669.0 1487.0 L675.7 1478.0 L682.5 1487.0 L689.2 1478.0 L695.9 1487.0 L702.6 1478.0 L709.3 1487.0 L716.1 1478.0 L722.8 1487.0 L729.5 1496.0 L736.2 1487.0 L742.9 1478.0 L749.7 1469.0 L756.4 1460.0 L763.1 1469.0 L769.8 1478.0 L776.5 1469.0 L783.3 1460.0 L790.0 1451.0 L796.7 1460.0 L803.4 1451.0 L810.1 1460.0 L816.9 1451.0 L823.6 1442.0 L830.3 1451.0 L837.0 1442.0 L843.7 1433.0 L850.5 1424.0 L857.2 1415.0 L863.9 1406.0 L870.6 1397.0 L877.3 1388.0 L884.1 1397.0 L890.8 1388.0 L897.5 1379.0 L904.2 1370.0 L910.9 1361.0 L917.7 1352.0 L924.4 1343.0 L931.1 1352.0 L937.8 1343.0 L944.5 1334.0 L951.3 1325.0 L958.0 1316.0 L964.7 1307.0 L971.4 1298.0 L978.1 1289.0 L984.9 1280.0 L991.6 1271.0 L998.3 1280.0 L1005.0 1271.0 L1011.7 1280.0 L1018.5 1271.0 L1025.2 1262.0 L1031.9 1253.0 L1038.6 1262.0 L1045.3 1253.0 L1052.1 1244.0 L1058.8 1235.0 L1065.5 1226.0 L1072.2 1217.0 L1078.9 1208.0 L1085.7 1199.0 L1092.4 1190.0 L1099.1 1199.0 L1105.8 1208.0 L1112.5 1199.0 L1119.3 1190.0 L1126.0 1199.0 L1132.7 1208.0 L1139.4 1217.0 L1146.1 1208.0 L1152.9 1217.0 L1159.6 1208.0 L1166.3 1199.0 L1173.0 1190.0 L1179.7 1181.0 L1186.5 1172.0 L1193.2 1181.0 L1199.9 1190.0 L1206.6 1181.0 L1213.3 1172.0 L1220.1 1163.0 L1226.8 1172.0 L1233.5 1163.0 L1240.2 1154.0 L1246.9 1163.0 L1253.7 1154.0 L1260.4 1145.0 L1267.1 1154.0 L1273.8 1163.0 L1280.5 1154.0 L1287.3 1145.0 L1294.0 1154.0 L1300.7 1145.0 L1307.4 1154.0 L1314.1 1163.0 L1320.9 1154.0 L1327.6 1163.0" stroke="#2ca02c"/><path d="M662.3 1496.0 L669.0 1487.0 L675.7 1496.0 L682.5 1505.0 L689.2 1514.0 L695.9 1505.0 L702.6 1514.0 L709.3 1505.0 L716.1 1514.0 L722.8 1505.0 L729.5 1514.0 L736.2 1505.0 L742.9 1514.0 L749.7 1505.0 L756.4 1496.0 L763.1 1487.0 L769.8 1496.0 L776.5 1487.0 L783.3 1478.0 L790.0 1487.0 L796.7 1496.0 L803.4 1505.0 L810.1 1514.0 L816.9 1505.0 L823.6 1514.0 L830.3 1523.0 L837.0 1532.0 L843.7 1523.0 L850.5 1532.0 L857.2 1541.0 L863.9 1532.0 L870.6 1523.0 L877.3 1532.0 L884.1 1523.0 L890.8 1514.0 L897.5 1505.0 L904.2 1514.0 L910.9 1523.0 L917.7 1532.0 L924.4 1541.0 L931.1 1550.0 L937.8 1541.0 L944.5 1532.0 L951.3 1523.0 L958.0 1532.0 L964.7 1523.0 L971.4 1514.0 L978.1 1505.0 L984.9 1496.0 L991.6 1505.0 L998.3 1496.0 L1005.0 1487.0 L1011.7 1478.0 L1018.5 1469.0 L1025.2 1478.0 L1031.9 1469.0 L1038.6 1478.0 L1045.3 1469.0 L1052.1 1460.0 L1058.8 1451.0 L1065.5 1460.0 L1072.2 1451.0 L1078.9 1442.0 L1085.7 1451.0 L1092.4 1460.0 L1099.1 1469.0 L1105.8 1460.0 L1112.5 1451.0 L1119.3 1460.0 L1126.0 1451.0 L1132.7 1442.0 L1139.4 1451.0 L1146.1 1460.0 L1152.9 1469.0 L1159.6 1460.0 L1166.3 1469.0 L1173.0 1460.0 L1179.7 1451.0 L1186.5 1460.0 L1193.2 1469.0 L1199.9 1478.0 L1206.6 1469.0 L1213.3 1460.0 L1220.1 1469.0 L1226.8 1478.0 L1233.5 1469.0 L1240.2 1478.0 L1246.9 1469.0 L1253.7 1478.0 L1260.4 1469.0 L1267.1 1460.0 L1273.8 1469.0 L1280.5 1478.0 L1287.3 1487.0 L1294.0 1496.0 L1300.7 1505.0 L1307.4 1496.0 L1314.1 1505.0 L1320.9 1496.0 L1327.6 1505.0" stroke="#d62728"/><path d="M662.3 1514.0 L669.0 1505.0 L675.7 1496.0 L682.5 1487.0 L689.2 1496.0 L695.9 1487.0 L702.6 1496.0 L709.3 1505.0 L716.1 1496.0 L722.8 1487.0 L729.5 1478.0 L736.2 1469.0 L742.9 1478.0 L749.7 1487.0 L756.4 1496.0 L763.1 1487.0 L769.8 1496.0 L776.5 1487.0 L783.3 1478.0 L790.0 1469.0 L796.7 1460.0 L803.4 1451.0 L810.1 1442.0 L816.9 1451.0 L823.6 1442.0 L830.3 1433.0 L837.0 1424.0 L843.7 1415.0 L850.5 1406.0 L857.2 1415.0 L863.9 1424.0 L870.6 1415.0 L877.3 1424.0 L884.1 1415.0 L890.8 1406.0 L897.5 1415.0 L904.2 1406.0 L910.9 1397.0 L917.7 1388.0 L924.4 1397.0 L931.1 1406.0 L937.8 1415.0 L944.5 1406.0 L951.3 1415.0 L958.0 1424.0 L964.7 1415.0 L971.4 1406.0 L978.1 1397.0 L984.9 1388.0 L991.6 1397.0 L998.3 1406.0 L1005.0 1415.0 L1011.7 1424.0 L1018.5 1415.0 L1025.2 1424.0 L1031.9 1415.0 L1038.6 1406.0 L1045.3 1397.0 L1052.1 1406.0 L1058.8 1397.0 L1065.5 1406.0 L1072.2 1415.0 L1078.9 1406.0 L1085.7 1397.0 L1092.4 1406.0 L1099.1 1397.0 L1105.8 1406.0 L1112.5 1397.0 L1119.3 1406.0 L1126.0 1397.0 L1132.7 1388.0 L1139.4 1379.0 L1146.1 1370.0 L1152.9 1361.0 L1159.6 1352.0 L1166.3 1361.0 L1173.0 1370.0 L1179.7 1379.0 L1186.5 1370.0 L1193.2 1361.0 L1199.9 1370.0 L1206.6 1361.0 L1213.3 1352.0 L1220.1 1361.0 L1226.8 1352.0 L1233.5 1343.0 L1240.2 1334.0 L1246.9 1325.0 L1253.7 1316.0 L1260.4 1307.0 L1267.1 1316.0 L1273.8 1307.0 L1280.5 1298.0 L1287.3 1289.0 L1294.0 1298.0 L1300.7 1289.0 L1307.4 1298.0 L1314.1 1289.0 L1320.9 1298.0 L1327.6 1289.0" stroke="#9467bd"/><path d="M662.3 1496.0 L669.0 1487.0 L675.7 1478.0 L682.5 1487.0 L689.2 1478.0 L695.9 1487.0 L702.6 1478.0 L709.3 1469.0 L716.1 1460.0 L722.8 1469.0 L729.5 1478.0 L736.2 1469.0 L742.9 1478.0 L749.7 1469.0 L756.4 1460.0 L763.1 1451.0 L769.8 1460.0 L776.5 1469.0 L783.3 1460.0 L790.0 1451.0 L796.7 1442.0 L803.4 1433.0 L810.1 1424.0 L816.9 1415.0 L823.6 1424.0 L830.3 1433.0 L837.0 1442.0 L843.7 1451.0 L850.5 1442.0 L857.2 1451.0 L863.9 1460.0 L870.6 1451.0 L877.3 1442.0 L884.1 1433.0 L890.8 1424.0 L897.5 1433.0 L904.2 1442.0 L910.9 1451.0 L917.7 1442.0 L924.4 1451.0 L931.1 1442.0 L937.8 1433.0 L944.5 1424.0 L951.3 1433.0 L958.0 1442.0 L964.7 1451.0 L971.4 1442.0 L978.1 1451.0 L984.9 1460.0 L991.6 1451.0 L998.3 1442.0 L1005.0 1451.0 L1011.7 1460.0 L1018.5 1451.0 L1025.2 1442.0 L1031.9 1433.0 L1038.6 1424.0 L1045.3 1433.0 L1052.1 1424.0 L1058.8 1415.0 L1065.5 1406.0 L1072.2 1415.0 L1078.9 1424.0 L1085.7 1415.0 L1092.4 1424.0 L1099.1 1415.0 L1105.8 1424.0 L1112.5 1415.0 L1119.3 1406.0 L1126.0 1415.0 L1132.7 1406.0 L1139.4 1415.0 L1146.1 1406.0 L1152.9 1397.0 L1159.6 1388.0 L1166.3 1379.0 L1173.0 1370.0 L1179.7 1379.0 L1186.5 1370.0 L1193.2 1361.0 L1199.9 1370.0 L1206.6 1361.0 L1213.3 1352.0 L1220.1 1343.0 L1226.8 1352.0 L1233.5 1361.0 L1240.2 1352.0 L1246.9 1361.0 L1253.7 1352.0 L1260.4 1343.0 L1267.1 1334.0 L1273.8 1343.0 L1280.5 1334.0 L1287.3 1325.0 L1294.0 1334.0 L1300.7 1325.0 L1307.4 1316.0 L1314.1 1325.0 L1320.9 1316.0 L1327.6 1307.0" stroke="#8c564b"/><path d="M662.3 1496.0 L669.0 1487.0 L675.7 1478.0 L682.5 1487.0 L689.2 1496.0 L695.9 1487.0 L702.6 1496.0 L709.3 1505.0 L716.1 1496.0 L722.8 1487.0 L729.5 1478.0 L736.2 1469.0 L742.9 1460.0 L749.7 1469.0 L756.4 1478.0 L763.1 1469.0 L769.8 1460.0 L776.5 1469.0 L783.3 1460.0 L790.0 1451.0 L796.7 1442.0 L803.4 1433.0 L810.1 1424.0 L816.9 1433.0 L823.6 1424.0 L830.3 1415.0 L837.0 1424.0 L843.7 1415.0 L850.5 1406.0 L857.2 1415.0 L863.9 1406.0 L870.6 1397.0 L877.3 1388.0 L884.1 1379.0 L890.8 1370.0 L897.5 1361.0 L904.2 1352.0 L910.9 1343.0 L917.7 1352.0 L924.4 1343.0 L931.1 1352.0 L937.8 1343.0 L944.5 1334.0 L951.3 1325.0 L958.0 1316.0 L964.7 1307.0 L971.4 1298.0 L978.1 1289.0 L984.9 1298.0 L991.6 1307.0 L998.3 1298.0 L1005.0 1289.0 L1011.7 1280.0 L1018.5 1289.0 L1025.2 1280.0 L1031.9 1289.0 L1038.6 1298.0 L1045.3 1307.0 L1052.1 1316.0 L1058.8 1307.0 L1065.5 1316.0 L1072.2 1325.0 L1078.9 1316.0 L1085.7 1307.0 L1092.4 1298.0 L1099.1 1289.0 L1105.8 1280.0 L1112.5 1271.0 L1119.3 1262.0 L1126.0 1271.0 L1132.7 1280.0 L1139.4 1271.0 L1146.1 1280.0 L1152.9 1271.0 L1159.6 1262.0 L1166.3 1271.0 L1173.0 1280.0 L1179.7 1271.0 L1186.5 1280.0 L1193.2 1271.0 L1199.9 1262.0 L1206.6 1271.0 L1213.3 1280.0 L1220.1 1271.0 L1226.8 1280.0 L1233.5 1289.0 L1240.2 1280.0 L1246.9 1271.0 L1253.7 1262.0 L1260.4 1271.0 L1267.1 1280.0 L1273.8 1271.0 L1280.5 1262.0 L1287.3 1253.0 L1294.0 1262.0 L1300.7 1253.0 L1307.4 1244.0 L1314.1 1235.0 L1320.9 1226.0 L1327.6 1217.0" stroke="#e377c2"/><path d="M662.3 1514.0 L669.0 1505.0 L675.7 1496.0 L682.5 1487.0 L689.2 1496.0 L695.9 1487.0 L702.6 1478.0 L709.3 1469.0 L716.1 1460.0 L722.8 1451.0 L729.5 1442.0 L736.2 1451.0 L742.9 1442.0 L749.7 1451.0 L756.4 1460.0 L763.1 1451.0 L769.8 1442.0 L776.5 1433.0 L783.3 1424.0 L790.0 1433.0 L796.7 1424.0 L803.4 1415.0 L810.1 1424.0 L816.9 1433.0 L823.6 1424.0 L830.3 1433.0 L837.0 1424.0 L843.7 1433.0 L850.5 1424.0 L857.2 1433.0 L863.9 1442.0 L870.6 1433.0 L877.3 1424.0 L884.1 1433.0 L890.8 1424.0 L897.5 1433.0 L904.2 1424.0 L910.9 1433.0 L917.7 1442.0 L924.4 1433.0 L931.1 1424.0 L937.8 1415.0 L944.5 1406.0 L951.3 1397.0 L958.0 1388.0 L964.7 1397.0 L971.4 1388.0 L978.1 1397.0 L984.9 1388.0 L991.6 1397.0 L998.3 1388.0 L1005.0 1379.0 L1011.7 1388.0 L1018.5 1379.0 L1025.2 1370.0 L1031.9 1361.0 L1038.6 1352.0 L1045.3 1361.0 L1052.1 1370.0 L1058.8 1361.0 L1065.5 1352.0 L1072.2 1343.0 L1078.9 1334.0 L1085.7 1325.0 L1092.4 1316.0 L1099.1 1307.0 L1105.8 1316.0 L1112.5 1325.0 L1119.3 1316.0 L1126.0 1307.0 L1132.7 1298.0 L1139.4 1307.0 L1146.1 1298.0 L1152.9 1307.0 L1159.6 1298.0 L1166.3 1289.0 L1173.0 1280.0 L1179.7 1271.0 L1186.5 1262.0 L1193.2 1253.0 L1199.9 1244.0 L1206.6 1235.0 L1213.3 1244.0 L1220.1 1235.0 L1226.8 1244.0 L1233.5 1235.0 L1240.2 1244.0 L1246.9 1235.0 L1253.7 1226.0 L1260.4 1217.0 L1267.1 1208.0 L1273.8 1217.0 L1280.5 1226.0 L1287.3 1235.0 L1294.0 1226.0 L1300.7 1235.0 L1307.4 1244.0 L1314.1 1235.0 L1320.9 1244.0 L1327.6 1253.0" stroke="#7f7f7f"/><path d="M662.3 1496.0 L669.0 1487.0 L675.7 1496.0 L682.5 1487.0 L689.2 1478.0 L695.9 1487.0 L702.6 1478.0 L709.3 1469.0 L716.1 1478.0 L722.8 1469.0 L729.5 1478.0 L736.2 1487.0 L742.9 1478.0 L749.7 1469.0 L756.4 1478.0 L763.1 1487.0 L769.8 1478.0 L776.5 1487.0 L783.3 1496.0 L790.0 1505.0 L796.7 1496.0 L803.4 1487.0 L810.1 1496.0 L816.9 1487.0 L823.6 1496.0 L830.3 1487.0 L837.0 1478.0 L843.7 1469.0 L850.5 1478.0 L857.2 1487.0 L863.9 1496.0 L870.6 1505.0 L877.3 1514.0 L884.1 1523.0 L890.8 1532.0 L897.5 1523.0 L904.2 1514.0 L910.9 1523.0 L917.7 1514.0 L924.4 1505.0 L931.1 1496.0 L937.8 1505.0 L944.5 1514.0 L951.3 1523.0 L958.0 1514.0 L964.7 1505.0 L971.4 1514.0 L978.1 1505.0 L984.9 1496.0 L991.6 1487.0 L998.3 1496.0 L1005.0 1505.0 L1011.7 1514.0 L1018.5 1505.0 L1025.2 1514.0 L1031.9 1505.0 L1038.6 1496.0 L1045.3 1505.0 L1052.1 1514.0 L1058.8 1505.0 L1065.5 1496.0 L1072.2 1487.0 L1078.9 1478.0 L1085.7 1469.0 L1092.4 1460.0 L1099.1 1451.0 L1105.8 1460.0 L1112.5 1469.0 L1119.3 1460.0 L1126.0 1469.0 L1132.7 1478.0 L1139.4 1487.0 L1146.1 1478.0 L1152.9 1469.0 L1159.6 1478.0 L1166.3 1487.0 L1173.0 1478.0 L1179.7 1469.0 L1186.5 1460.0 L1193.2 1469.0 L1199.9 1460.0 L1206.6 1451.0 L1213.3 1460.0 L1220.1 1469.0 L1226.8 1478.0 L1233.5 1469.0 L1240.2 1460.0 L1246.9 1469.0 L1253.7 1460.0 L1260.4 1451.0 L1267.1 1442.0 L1273.8 1451.0 L1280.5 1442.0 L1287.3 1433.0 L1294.0 1424.0 L1300.7 1415.0 L1307.4 1406.0 L1314.1 1397.0 L1320.9 1388.0 L1327.6 1379.0" stroke="#bcbd22"/><path d="M662.3 1496.0 L669.0 1487.0 L675.7 1478.0 L682.5 1469.0 L689.2 1478.0 L695.9 1487.0 L702.6 1478.0 L709.3 1487.0 L716.1 1496.0 L722.8 1487.0 L729.5 1478.0 L736.2 1469.0 L742.9 1478.0 L749.7 1487.0 L756.4 1478.0 L763.1 1469.0 L769.8 1460.0 L776.5 1451.0 L783.3 1460.0 L790.0 1451.0 L796.7 1460.0 L803.4 1469.0 L810.1 1460.0 L816.9 1451.0 L823.6 1460.0 L830.3 1451.0 L837.0 1460.0 L843.7 1451.0 L850.5 1460.0 L857.2 1451.0 L863.9 1442.0 L870.6 1451.0 L877.3 1442.0 L884.1 1433.0 L890.8 1424.0 L897.5 1415.0 L904.2 1424.0 L910.9 1415.0 L917.7 1406.0 L924.4 1397.0 L931.1 1388.0 L937.8 1379.0 L944.5 1370.0 L951.3 1361.0 L958.0 1352.0 L964.7 1343.0 L971.4 1352.0 L978.1 1343.0 L984.9 1352.0 L991.6 1343.0 L998.3 1352.0 L1005.0 1343.0 L1011.7 1334.0 L1018.5 1325.0 L1025.2 1316.0 L1031.9 1307.0 L1038.6 1298.0 L1045.3 1289.0 L1052.1 1280.0 L1058.8 1271.0 L1065.5 1280.0 L1072.2 1271.0 L1078.9 1280.0 L1085.7 1271.0 L1092.4 1280.0 L1099.1 1289.0 L1105.8 1280.0 L1112.5 1271.0 L1119.3 1262.0 L1126.0 1253.0 L1132.7 1244.0 L1139.4 1235.0 L1146.1 1226.0 L1152.9 1235.0 L1159.6 1226.0 L1166.3 1217.0 L1173.0 1208.0 L1179.7 1217.0 L1186.5 1208.0 L1193.2 1217.0 L1199.9 1208.0 L1206.6 1199.0 L1213.3 1208.0 L1220.1 1217.0 L1226.8 1208.0 L1233.5 1199.0 L1240.2 1190.0 L1246.9 1181.0 L1253.7 1172.0 L1260.4 1181.0 L1267.1 1172.0 L1273.8 1181.0 L1280.5 1172.0 L1287.3 1181.0 L1294.0 1190.0 L1300.7 1181.0 L1307.4 1172.0 L1314.1 1181.0 L1320.9 1172.0 L1327.6 1181.0" stroke="#17becf"/><path d="M662.3 1496.0 L669.0 1505.0 L675.7 1496.0 L682.5 1505.0 L689.2 1496.0 L695.9 1487.0 L702.6 1478.0 L709.3 1487.0 L716.1 1478.0 L722.8 1469.0 L729.5 1460.0 L736.2 1469.0 L742.9 1460.0 L749.7 1469.0 L756.4 1460.0 L763.1 1469.0 L769.8 1460.0 L776.5 1469.0 L783.3 1478.0 L790.0 1469.0 L796.7 1460.0 L803.4 1451.0 L810.1 1460.0 L816.9 1451.0 L823.6 1460.0 L830.3 1469.0 L837.0 1460.0 L843.7 1469.0 L850.5 1460.0 L857.2 1469.0 L863.9 1460.0 L870.6 1469.0 L877.3 1478.0 L884.1 1469.0 L890.8 1478.0 L897.5 1487.0 L904.2 1478.0 L910.9 1469.0 L917.7 1478.0 L924.4 1487.0 L931.1 1478.0 L937.8 1487.0 L944.5 1496.0 L951.3 1487.0 L958.0 1496.0 L964.7 1505.0 L971.4 1496.0 L978.1 1505.0 L984.9 1496.0 L991.6 1487.0 L998.3 1478.0 L1005.0 1469.0 L1011.7 1460.0 L1018.5 1469.0 L1025.2 1460.0 L1031.9 1469.0 L1038.6 1460.0 L1045.3 1451.0 L1052.1 1460.0 L1058.8 1469.0 L1065.5 1478.0 L1072.2 1469.0 L1078.9 1478.0 L1085.7 1469.0 L1092.4 1478.0 L1099.1 1469.0 L1105.8 1478.0 L1112.5 1487.0 L1119.3 1478.0 L1126.0 1469.0 L1132.7 1478.0 L1139.4 1469.0 L1146.1 1460.0 L1152.9 1451.0 L1159.6 1442.0 L1166.3 1451.0 L1173.0 1460.0 L1179.7 1451.0 L1186.5 1460.0 L1193.2 1469.0 L1199.9 1460.0 L1206.6 1451.0 L1213.3 1460.0 L1220.1 1451.0 L1226.8 1460.0 L1233.5 1469.0 L1240.2 1478.0 L1246.9 1469.0 L1253.7 1460.0 L1260.4 1469.0 L1267.1 1478.0 L1273.8 1469.0 L1280.5 1460.0 L1287.3 1451.0 L1294.0 1442.0 L1300.7 1433.0 L1307.4 1442.0 L1314.1 1451.0 L1320.9 1442.0 L1327.6 1451.0" stroke="#1f77b4"/><path d="M662.3 1496.0 L669.0 1505.0 L675.7 1514.0 L682.5 1505.0 L689.2 1496.0 L695.9 1487.0 L702.6 1496.0 L709.3 1487.0 L716.1 1496.0 L722.8 1487.0 L729.5 1478.0 L736.2 1469.0 L742.9 1460.0 L749.7 1451.0 L756.4 1442.0 L763.1 1433.0 L769.8 1424.0 L776.5 1433.0 L783.3 1442.0 L790.0 1433.0 L796.7 1442.0 L803.4 1433.0 L810.1 1442.0 L816.9 1433.0 L823.6 1442.0 L830.3 1433.0 L837.0 1442.0 L843.7 1433.0 L850.5 1424.0 L857.2 1415.0 L863.9 1424.0 L870.6 1415.0 L877.3 1406.0 L884.1 1397.0 L890.8 1406.0 L897.5 1415.0 L904.2 1406.0 L910.9 1415.0 L917.7 1406.0 L924.4 1397.0 L931.1 1406.0 L937.8 1397.0 L944.5 1406.0 L951.3 1415.0 L958.0 1406.0 L964.7 1397.0 L971.4 1388.0 L978.1 1397.0 L984.9 1406.0 L991.6 1397.0 L998.3 1388.0 L1005.0 1379.0 L1011.7 1388.0 L1018.5 1379.0 L1025.2 1388.0 L1031.9 1397.0 L1038.6 1406.0 L1045.3 1397.0 L1052.1 1388.0 L1058.8 1379.0 L1065.5 1370.0 L1072.2 1361.0 L1078.9 1352.0 L1085.7 1343.0 L1092.4 1334.0 L1099.1 1343.0 L1105.8 1352.0 L1112.5 1361.0 L1119.3 1352.0 L1126.0 1343.0 L1132.7 1334.0 L1139.4 1325.0 L1146.1 1316.0 L1152.9 1307.0 L1159.6 1298.0 L1166.3 1289.0 L1173.0 1298.0 L1179.7 1289.0 L1186.5 1298.0 L1193.2 1289.0 L1199.9 1298.0 L1206.6 1289.0 L1213.3 1298.0 L1220.1 1307.0 L1226.8 1316.0 L1233.5 1325.0 L1240.2 1334.0 L1246.9 1325.0 L1253.7 1316.0 L1260.4 1325.0 L1267.1 1316.0 L1273.8 1307.0 L1280.5 1298.0 L1287.3 1289.0 L1294.0 1280.0 L1300.7 1271.0 L1307.4 1262.0 L1314.1 1253.0 L1320.9 1262.0 L1327.6 1253.0" stroke="#ff7f0e"/><path d="M662.3 1496.0 L669.0 1487.0 L675.7 1478.0 L682.5 1469.0 L689.2 1478.0 L695.9 1469.0 L702.6 1478.0 L709.3 1487.0 L716.1 1478.0 L722.8 1469.0 L729.5 1478.0 L736.2 1469.0 L742.9 1460.0 L749.7 1451.0 L756.4 1460.0 L763.1 1469.0 L769.8 1478.0 L776.5 1487.0 L783.3 1478.0 L790.0 1469.0 L796.7 1460.0 L803.4 1469.0 L810.1 1478.0 L816.9 1469.0 L823.6 1478.0 L830.3 1487.0 L837.0 1478.0 L843.7 1469.0 L850.5 1478.0 L857.2 1469.0 L863.9 1460.0 L870.6 1451.0 L877.3 1442.0 L884.1 1451.0 L890.8 1460.0 L897.5 1469.0 L904.2 1460.0 L910.9 1469.0 L917.7 1478.0 L924.4 1469.0 L931.1 1478.0 L937.8 1487.0 L944.5 1478.0 L951.3 1469.0 L958.0 1460.0 L964.7 1451.0 L971.4 1460.0 L978.1 1451.0 L984.9 1460.0 L991.6 1451.0 L998.3 1442.0 L1005.0 1433.0 L1011.7 1424.0 L1018.5 1433.0 L1025.2 1424.0 L1031.9 1433.0 L1038.6 1442.0 L1045.3 1433.0 L1052.1 1442.0 L1058.8 1433.0 L1065.5 1442.0 L1072.2 1451.0 L1078.9 1442.0 L1085.7 1451.0 L1092.4 1442.0 L1099.1 1433.0 L1105.8 1424.0 L1112.5 1415.0 L1119.3 1424.0 L1126.0 1415.0 L1132.7 1424.0 L1139.4 1433.0 L1146.1 1442.0 L1152.9 1433.0 L1159.6 1442.0 L1166.3 1451.0 L1173.0 1442.0 L1179.7 1451.0 L1186.5 1442.0 L1193.2 1451.0 L1199.9 1442.0 L1206.6 1433.0 L1213.3 1424.0 L1220.1 1415.0 L1226.8 1424.0 L1233.5 1415.0 L1240.2 1406.0 L1246.9 1397.0 L1253.7 1406.0 L1260.4 1397.0 L1267.1 1388.0 L1273.8 1379.0 L1280.5 1388.0 L1287.3 1379.0 L1294.0 1388.0 L1300.7 1379.0 L1307.4 1388.0 L1314.1 1379.0 L1320.9 1388.0 L1327.6 1379.0" stroke="#2ca02c"/><path d="M662.3 1514.0 L669.0 1505.0 L675.7 1514.0 L682.5 1523.0 L689.2 1532.0 L695.9 1541.0 L702.6 1532.0 L709.3 1541.0 L716.1 1532.0 L722.8 1523.0 L729.5 1532.0 L736.2 1523.0 L742.9 1514.0 L749.7 1523.0 L756.4 1514.0 L763.1 1505.0 L769.8 1496.0 L776.5 1505.0 L783.3 1514.0 L790.0 1505.0 L796.7 1496.0 L803.4 1505.0 L810.1 1514.0 L816.9 1505.0 L823.6 1496.0 L830.3 1487.0 L837.0 1478.0 L843.7 1487.0 L850.5 1478.0 L857.2 1469.0 L863.9 1460.0 L870.6 1451.0 L877.3 1460.0 L884.1 1451.0 L890.8 1460.0 L897.5 1451.0 L904.2 1442.0 L910.9 1433.0 L917.7 1424.0 L924.4 1415.0 L931.1 1406.0 L937.8 1397.0 L944.5 1388.0 L951.3 1397.0 L958.0 1388.0 L964.7 1397.0 L971.4 1388.0 L978.1 1379.0 L984.9 1370.0 L991.6 1361.0 L998.3 1370.0 L1005.0 1379.0 L1011.7 1388.0 L1018.5 1397.0 L1025.2 1388.0 L1031.9 1379.0 L1038.6 1388.0 L1045.3 1397.0 L1052.1 1388.0 L1058.8 1379.0 L1065.5 1370.0 L1072.2 1361.0 L1078.9 1370.0 L1085.7 1361.0 L1092.4 1352.0 L1099.1 1343.0 L1105.8 1334.0 L1112.5 1325.0 L1119.3 1316.0 L1126.0 1307.0 L1132.7 1298.0 L1139.4 1289.0 L1146.1 1280.0 L1152.9 1271.0 L1159.6 1280.0 L1166.3 1271.0 L1173.0 1262.0 L1179.7 1271.0 L1186.5 1262.0 L1193.2 1253.0 L1199.9 1244.0 L1206.6 1235.0 L1213.3 1244.0 L1220.1 1235.0 L1226.8 1244.0 L1233.5 1253.0 L1240.2 1262.0 L1246.9 1253.0 L1253.7 1244.0 L1260.4 1253.0 L1267.1 1262.0 L1273.8 1271.0 L1280.5 1262.0 L1287.3 1271.0 L1294.0 1262.0 L1300.7 1271.0 L1307.4 1262.0 L1314.1 1253.0 L1320.9 1262.0 L1327.6 1271.0" stroke="#d62728"/><path d="M662.3 1514.0 L669.0 1523.0 L675.7 1514.0 L682.5 1505.0 L689.2 1514.0 L695.9 1505.0 L702.6 1496.0 L709.3 1487.0 L716.1 1496.0 L722.8 1487.0 L729.5 1496.0 L736.2 1487.0 L742.9 1478.0 L749.7 1487.0 L756.4 1478.0 L763.1 1469.0 L769.8 1478.0 L776.5 1487.0 L783.3 1478.0 L790.0 1469.0 L796.7 1460.0 L803.4 1451.0 L810.1 1442.0 L816.9 1433.0 L823.6 1442.0 L830.3 1451.0 L837.0 1460.0 L843.7 1451.0 L850.5 1460.0 L857.2 1469.0 L863.9 1460.0 L870.6 1469.0 L877.3 1460.0 L884.1 1451.0 L890.8 1460.0 L897.5 1469.0 L904.2 1478.0 L910.9 1469.0 L917.7 1460.0 L924.4 1469.0 L931.1 1460.0 L937.8 1469.0 L944.5 1460.0 L951.3 1469.0 L958.0 1478.0 L964.7 1469.0 L971.4 1460.0 L978.1 1451.0 L984.9 1460.0 L991.6 1451.0 L998.3 1460.0 L1005.0 1451.0 L1011.7 1460.0 L1018.5 1469.0 L1025.2 1460.0 L1031.9 1469.0 L1038.6 1460.0 L1045.3 1469.0 L1052.1 1460.0 L1058.8 1469.0 L1065.5 1478.0 L1072.2 1487.0 L1078.9 1478.0 L1085.7 1487.0 L1092.4 1478.0 L1099.1 1469.0 L1105.8 1478.0 L1112.5 1487.0 L1119.3 1478.0 L1126.0 1469.0 L1132.7 1478.0 L1139.4 1487.0 L1146.1 1496.0 L1152.9 1487.0 L1159.6 1496.0 L1166.3 1487.0 L1173.0 1478.0 L1179.7 1469.0 L1186.5 1460.0 L1193.2 1469.0 L1199.9 1460.0 L1206.6 1451.0 L1213.3 1442.0 L1220.1 1451.0 L1226.8 1442.0 L1233.5 1433.0 L1240.2 1424.0 L1246.9 1433.0 L1253.7 1424.0 L1260.4 1415.0 L1267.1 1406.0 L1273.8 1397.0 L1280.5 1406.0 L1287.3 1397.0 L1294.0 1406.0 L1300.7 1415.0 L1307.4 1406.0 L1314.1 1397.0 L1320.9 1388.0 L1327.6 1397.0" stroke="#9467bd"/><path d="M662.3 1514.0 L669.0 1523.0 L675.7 1532.0 L682.5 1523.0 L689.2 1514.0 L695.9 1505.0 L702.6 1496.0 L709.3 1487.0 L716.1 1478.0 L722.8 1487.0 L729.5 1496.0 L736.2 1505.0 L742.9 1496.0 L749.7 1487.0 L756.4 1496.0 L763.1 1487.0 L769.8 1496.0 L776.5 1505.0 L783.3 1514.0 L790.0 1505.0 L796.7 1496.0 L803.4 1505.0 L810.1 1496.0 L816.9 1487.0 L823.6 1478.0 L830.3 1469.0 L837.0 1460.0 L843.7 1451.0 L850.5 1460.0 L857.2 1451.0 L863.9 1442.0 L870.6 1433.0 L877.3 1442.0 L884.1 1433.0 L890.8 1424.0 L897.5 1415.0 L904.2 1424.0 L910.9 1415.0 L917.7 1424.0 L924.4 1415.0 L931.1 1424.0 L937.8 1415.0 L944.5 1406.0 L951.3 1415.0 L958.0 1424.0 L964.7 1433.0 L971.4 1442.0 L978.1 1433.0 L984.9 1424.0 L991.6 1433.0 L998.3 1424.0 L1005.0 1433.0 L1011.7 1424.0 L1018.5 1415.0 L1025.2 1424.0 L1031.9 1415.0 L1038.6 1424.0 L1045.3 1433.0 L1052.1 1424.0 L1058.8 1433.0 L1065.5 1424.0 L1072.2 1433.0 L1078.9 1442.0 L1085.7 1433.0 L1092.4 1442.0 L1099.1 1451.0 L1105.8 1460.0 L1112.5 1469.0 L1119.3 1478.0 L1126.0 1487.0 L1132.7 1478.0 L1139.4 1469.0 L1146.1 1460.0 L1152.9 1451.0 L1159.6 1442.0 L1166.3 1433.0 L1173.0 1442.0 L1179.7 1433.0 L1186.5 1424.0 L1193.2 1433.0 L1199.9 1424.0 L1206.6 1415.0 L1213.3 1406.0 L1220.1 1397.0 L1226.8 1406.0 L1233.5 1397.0 L1240.2 1406.0 L1246.9 1415.0 L1253.7 1424.0 L1260.4 1415.0 L1267.1 1424.0 L1273.8 1433.0 L1280.5 1442.0 L1287.3 1433.0 L1294.0 1442.0 L1300.7 1433.0 L1307.4 1424.0 L1314.1 1433.0 L1320.9 1424.0 L1327.6 1415.0" stroke="#8c564b"/><path d="M662.3 1514.0 L669.0 1505.0 L675.7 1514.0 L682.5 1523.0 L689.2 1532.0 L695.9 1541.0 L702.6 1532.0 L709.3 1523.0 L716.1 1514.0 L722.8 1505.0 L729.5 1514.0 L736.2 1523.0 L742.9 1532.0 L749.7 1523.0 L756.4 1532.0 L763.1 1523.0 L769.8 1532.0 L776.5 1541.0 L783.3 1550.0 L790.0 1541.0 L796.7 1532.0 L803.4 1541.0 L810.1 1532.0 L816.9 1541.0 L823.6 1532.0 L830.3 1523.0 L837.0 1532.0 L843.7 1523.0 L850.5 1532.0 L857.2 1523.0 L863.9 1514.0 L870.6 1505.0 L877.3 1514.0 L884.1 1523.0 L890.8 1532.0 L897.5 1523.0 L904.2 1532.0 L910.9 1541.0 L917.7 1532.0 L924.4 1523.0 L931.1 1532.0 L937.8 1541.0 L944.5 1532.0 L951.3 1523.0 L958.0 1532.0 L964.7 1523.0 L971.4 1514.0 L978.1 1505.0 L984.9 1514.0 L991.6 1505.0 L998.3 1514.0 L1005.0 1505.0 L1011.7 1496.0 L1018.5 1487.0 L1025.2 1478.0 L1031.9 1487.0 L1038.6 1496.0 L1045.3 1487.0 L1052.1 1496.0 L1058.8 1487.0 L1065.5 1478.0 L1072.2 1469.0 L1078.9 1478.0 L1085.7 1487.0 L1092.4 1478.0 L1099.1 1487.0 L1105.8 1478.0 L1112.5 1469.0 L1119.3 1478.0 L1126.0 1469.0 L1132.7 1478.0 L1139.4 1469.0 L1146.1 1460.0 L1152.9 1451.0 L1159.6 1460.0 L1166.3 1469.0 L1173.0 1478.0 L1179.7 1469.0 L1186.5 1460.0 L1193.2 1451.0 L1199.9 1460.0 L1206.6 1451.0 L1213.3 1442.0 L1220.1 1451.0 L1226.8 1460.0 L1233.5 1451.0 L1240.2 1442.0 L1246.9 1433.0 L1253.7 1442.0 L1260.4 1451.0 L1267.1 1460.0 L1273.8 1451.0 L1280.5 1442.0 L1287.3 1451.0 L1294.0 1442.0 L1300.7 1433.0 L1307.4 1424.0 L1314.1 1433.0 L1320.9 1442.0 L1327.6 1451.0" stroke="#e377c2"/><path d="M662.3 1514.0 L669.0 1523.0 L675.7 1532.0 L682.5 1541.0 L689.2 1532.0 L695.9 1523.0 L702.6 1514.0 L709.3 1523.0 L716.1 1514.0 L722.8 1523.0 L729.5 1532.0 L736.2 1523.0 L742.9 1532.0 L749.7 1523.0 L756.4 1532.0 L763.1 1523.0 L769.8 1532.0 L776.5 1541.0 L783.3 1532.0 L790.0 1523.0 L796.7 1514.0 L803.4 1505.0 L810.1 1496.0 L816.9 1505.0 L823.6 1514.0 L830.3 1505.0 L837.0 1496.0 L843.7 1487.0 L850.5 1496.0 L857.2 1505.0 L863.9 1514.0 L870.6 1505.0 L877.3 1496.0 L884.1 1505.0 L890.8 1496.0 L897.5 1487.0 L904.2 1496.0 L910.9 1487.0 L917.7 1496.0 L924.4 1487.0 L931.1 1496.0 L937.8 1505.0 L944.5 1496.0 L951.3 1505.0 L958.0 1496.0 L964.7 1487.0 L971.4 1478.0 L978.1 1487.0 L984.9 1496.0 L991.6 1487.0 L998.3 1478.0 L1005.0 1487.0 L1011.7 1496.0 L1018.5 1487.0 L1025.2 1496.0 L1031.9 1505.0 L1038.6 1514.0 L1045.3 1523.0 L1052.1 1514.0 L1058.8 1505.0 L1065.5 1514.0 L1072.2 1505.0 L1078.9 1514.0 L1085.7 1505.0 L1092.4 1496.0 L1099.1 1505.0 L1105.8 1496.0 L1112.5 1505.0 L1119.3 1496.0 L1126.0 1487.0 L1132.7 1496.0 L1139.4 1505.0 L1146.1 1496.0 L1152.9 1487.0 L1159.6 1478.0 L1166.3 1487.0 L1173.0 1478.0 L1179.7 1487.0 L1186.5 1478.0 L1193.2 1469.0 L1199.9 1460.0 L1206.6 1469.0 L1213.3 1460.0 L1220.1 1469.0 L1226.8 1460.0 L1233.5 1451.0 L1240.2 1442.0 L1246.9 1451.0 L1253.7 1442.0 L1260.4 1451.0 L1267.1 1460.0 L1273.8 1469.0 L1280.5 1478.0 L1287.3 1469.0 L1294.0 1478.0 L1300.7 1469.0 L1307.4 1460.0 L1314.1 1451.0 L1320.9 1442.0 L1327.6 1433.0" stroke="#7f7f7f"/><path d="M662.3 1496.0 L669.0 1505.0 L675.7 1496.0 L682.5 1487.0 L689.2 1496.0 L695.9 1487.0 L702.6 1496.0 L709.3 1487.0 L716.1 1478.0 L722.8 1469.0 L729.5 1460.0 L736.2 1451.0 L742.9 1442.0 L749.7 1451.0 L756.4 1442.0 L763.1 1433.0 L769.8 1424.0 L776.5 1415.0 L783.3 1406.0 L790.0 1397.0 L796.7 1388.0 L803.4 1397.0 L810.1 1388.0 L816.9 1397.0 L823.6 1388.0 L830.3 1379.0 L837.0 1388.0 L843.7 1397.0 L850.5 1388.0 L857.2 1397.0 L863.9 1388.0 L870.6 1379.0 L877.3 1370.0 L884.1 1361.0 L890.8 1370.0 L897.5 1361.0 L904.2 1352.0 L910.9 1361.0 L917.7 1352.0 L924.4 1343.0 L931.1 1352.0 L937.8 1343.0 L944.5 1352.0 L951.3 1343.0 L958.0 1334.0 L964.7 1343.0 L971.4 1334.0 L978.1 1343.0 L984.9 1334.0 L991.6 1343.0 L998.3 1334.0 L1005.0 1343.0 L1011.7 1352.0 L1018.5 1361.0 L1025.2 1352.0 L1031.9 1361.0 L1038.6 1352.0 L1045.3 1343.0 L1052.1 1334.0 L1058.8 1325.0 L1065.5 1316.0 L1072.2 1307.0 L1078.9 1298.0 L1085.7 1307.0 L1092.4 1298.0 L1099.1 1307.0 L1105.8 1298.0 L1112.5 1289.0 L1119.3 1280.0 L1126.0 1271.0 L1132.7 1262.0 L1139.4 1271.0 L1146.1 1262.0 L1152.9 1271.0 L1159.6 1280.0 L1166.3 1271.0 L1173.0 1280.0 L1179.7 1289.0 L1186.5 1280.0 L1193.2 1271.0 L1199.9 1262.0 L1206.6 1253.0 L1213.3 1244.0 L1220.1 1253.0 L1226.8 1262.0 L1233.5 1253.0 L1240.2 1244.0 L1246.9 1253.0 L1253.7 1244.0 L1260.4 1253.0 L1267.1 1244.0 L1273.8 1235.0 L1280.5 1226.0 L1287.3 1235.0 L1294.0 1226.0 L1300.7 1217.0 L1307.4 1226.0 L1314.1 1217.0 L1320.9 1226.0 L1327.6 1235.0" stroke="#bcbd22"/><path d="M662.3 1496.0 L669.0 1505.0 L675.7 1514.0 L682.5 1505.0 L689.2 1496.0 L695.9 1487.0 L702.6 1478.0 L709.3 1469.0 L716.1 1460.0 L722.8 1451.0 L729.5 1442.0 L736.2 1433.0 L742.9 1424.0 L749.7 1415.0 L756.4 1424.0 L763.1 1415.0 L769.8 1406.0 L776.5 1415.0 L783.3 1424.0 L790.0 1415.0 L796.7 1406.0 L803.4 1415.0 L810.1 1424.0 L816.9 1415.0 L823.6 1406.0 L830.3 1397.0 L837.0 1406.0 L843.7 1415.0 L850.5 1424.0 L857.2 1415.0 L863.9 1406.0 L870.6 1397.0 L877.3 1406.0 L884.1 1397.0 L890.8 1406.0 L897.5 1397.0 L904.2 1388.0 L910.9 1379.0 L917.7 1370.0 L924.4 1379.0 L931.1 1370.0 L937.8 1361.0 L944.5 1352.0 L951.3 1343.0 L958.0 1334.0 L964.7 1325.0 L971.4 1316.0 L978.1 1307.0 L984.9 1298.0 L991.6 1307.0 L998.3 1316.0 L1005.0 1325.0 L1011.7 1334.0 L1018.5 1325.0 L1025.2 1316.0 L1031.9 1307.0 L1038.6 1316.0 L1045.3 1325.0 L1052.1 1334.0 L1058.8 1325.0 L1065.5 1334.0 L1072.2 1325.0 L1078.9 1316.0 L1085.7 1325.0 L1092.4 1316.0 L1099.1 1325.0 L1105.8 1334.0 L1112.5 1343.0 L1119.3 1352.0 L1126.0 1343.0 L1132.7 1352.0 L1139.4 1361.0 L1146.1 1352.0 L1152.9 1343.0 L1159.6 1334.0 L1166.3 1325.0 L1173.0 1334.0 L1179.7 1343.0 L1186.5 1334.0 L1193.2 1325.0 L1199.9 1334.0 L1206.6 1325.0 L1213.3 1334.0 L1220.1 1343.0 L1226.8 1352.0 L1233.5 1343.0 L1240.2 1334.0 L1246.9 1325.0 L1253.7 1316.0 L1260.4 1325.0 L1267.1 1316.0 L1273.8 1307.0 L1280.5 1316.0 L1287.3 1307.0 L1294.0 1316.0 L1300.7 1307.0 L1307.4 1298.0 L1314.1 1307.0 L1320.9 1298.0 L1327.6 1307.0" stroke="#17becf"/><path d="M662.3 1514.0 L669.0 1523.0 L675.7 1514.0 L682.5 1523.0 L689.2 1532.0 L695.9 1541.0 L702.6 1532.0 L709.3 1541.0 L716.1 1532.0 L722.8 1523.0 L729.5 1514.0 L736.2 1505.0 L742.9 1514.0 L749.7 1505.0 L756.4 1514.0 L763.1 1505.0 L769.8 1514.0 L776.5 1505.0 L783.3 1496.0 L790.0 1487.0 L796.7 1478.0 L803.4 1487.0 L810.1 1478.0 L816.9 1487.0 L823.6 1496.0 L830.3 1505.0 L837.0 1496.0 L843.7 1487.0 L850.5 1478.0 L857.2 1469.0 L863.9 1460.0 L870.6 1451.0 L877.3 1442.0 L884.1 1451.0 L890.8 1442.0 L897.5 1433.0 L904.2 1424.0 L910.9 1433.0 L917.7 1424.0 L924.4 1433.0 L931.1 1424.0 L937.8 1415.0 L944.5 1424.0 L951.3 1415.0 L958.0 1406.0 L964.7 1415.0 L971.4 1406.0 L978.1 1397.0 L984.9 1406.0 L991.6 1397.0 L998.3 1406.0 L1005.0 1415.0 L1011.7 1424.0 L1018.5 1415.0 L1025.2 1424.0 L1031.9 1415.0 L1038.6 1406.0 L1045.3 1397.0 L1052.1 1406.0 L1058.8 1415.0 L1065.5 1424.0 L1072.2 1433.0 L1078.9 1424.0 L1085.7 1433.0 L1092.4 1424.0 L1099.1 1433.0 L1105.8 1424.0 L1112.5 1415.0 L1119.3 1406.0 L1126.0 1397.0 L1132.7 1406.0 L1139.4 1415.0 L1146.1 1424.0 L1152.9 1415.0 L1159.6 1424.0 L1166.3 1415.0 L1173.0 1406.0 L1179.7 1415.0 L1186.5 1424.0 L1193.2 1415.0 L1199.9 1406.0 L1206.6 1415.0 L1213.3 1424.0 L1220.1 1433.0 L1226.8 1424.0 L1233.5 1415.0 L1240.2 1424.0 L1246.9 1433.0 L1253.7 1424.0 L1260.4 1433.0 L1267.1 1424.0 L1273.8 1415.0 L1280.5 1424.0 L1287.3 1433.0 L1294.0 1442.0 L1300.7 1451.0 L1307.4 1442.0 L1314.1 1451.0 L1320.9 1442.0 L1327.6 1451.0" stroke="#1f77b4"/><path d="M662.3 1496.0 L669.0 1487.0 L675.7 1478.0 L682.5 1487.0 L689.2 1496.0 L695.9 1487.0 L702.6 1496.0 L709.3 1487.0 L716.1 1478.0 L722.8 1487.0 L729.5 1478.0 L736.2 1469.0 L742.9 1478.0 L749.7 1469.0 L756.4 1478.0 L763.1 1469.0 L769.8 1478.0 L776.5 1487.0 L783.3 1496.0 L790.0 1505.0 L796.7 1496.0 L803.4 1505.0 L810.1 1496.0 L816.9 1487.0 L823.6 1478.0 L830.3 1487.0 L837.0 1496.0 L843.7 1487.0 L850.5 1478.0 L857.2 1469.0 L863.9 1478.0 L870.6 1487.0 L877.3 1478.0 L884.1 1487.0 L890.8 1478.0 L897.5 1469.0 L904.2 1478.0 L910.9 1469.0 L917.7 1478.0 L924.4 1469.0 L931.1 1460.0 L937.8 1451.0 L944.5 1442.0 L951.3 1451.0 L958.0 1460.0 L964.7 1469.0 L971.4 1460.0 L978.1 1451.0 L984.9 1460.0 L991.6 1469.0 L998.3 1460.0 L1005.0 1451.0 L1011.7 1460.0 L1018.5 1451.0 L1025.2 1460.0 L1031.9 1451.0 L1038.6 1460.0 L1045.3 1451.0 L1052.1 1460.0 L1058.8 1451.0 L1065.5 1460.0 L1072.2 1469.0 L1078.9 1478.0 L1085.7 1469.0 L1092.4 1460.0 L1099.1 1469.0 L1105.8 1460.0 L1112.5 1451.0 L1119.3 1442.0 L1126.0 1433.0 L1132.7 1424.0 L1139.4 1415.0 L1146.1 1406.0 L1152.9 1415.0 L1159.6 1406.0 L1166.3 1415.0 L1173.0 1406.0 L1179.7 1397.0 L1186.5 1388.0 L1193.2 1397.0 L1199.9 1406.0 L1206.6 1415.0 L1213.3 1406.0 L1220.1 1397.0 L1226.8 1406.0 L1233.5 1415.0 L1240.2 1406.0 L1246.9 1415.0 L1253.7 1406.0 L1260.4 1397.0 L1267.1 1388.0 L1273.8 1379.0 L1280.5 1370.0 L1287.3 1361.0 L1294.0 1370.0 L1300.7 1379.0 L1307.4 1388.0 L1314.1 1379.0 L1320.9 1370.0 L1327.6 1361.0" stroke="#ff7f0e"/><path d="M662.3 1496.0 L669.0 1487.0 L675.7 1478.0 L682.5 1469.0 L689.2 1478.0 L695.9 1469.0 L702.6 1460.0 L709.3 1451.0 L716.1 1442.0 L722.8 1433.0 L729.5 1442.0 L736.2 1451.0 L742.9 1442.0 L749.7 1433.0 L756.4 1424.0 L763.1 1415.0 L769.8 1406.0 L776.5 1415.0 L783.3 1424.0 L790.0 1415.0 L796.7 1406.0 L803.4 1415.0 L810.1 1424.0 L816.9 1415.0 L823.6 1424.0 L830.3 1433.0 L837.0 1424.0 L843.7 1415.0 L850.5 1406.0 L857.2 1397.0 L863.9 1388.0 L870.6 1397.0 L877.3 1388.0 L884.1 1379.0 L890.8 1370.0 L897.5 1361.0 L904.2 1352.0 L910.9 1343.0 L917.7 1334.0 L924.4 1325.0 L931.1 1334.0 L937.8 1325.0 L944.5 1316.0 L951.3 1307.0 L958.0 1316.0 L964.7 1325.0 L971.4 1316.0 L978.1 1325.0 L984.9 1316.0 L991.6 1307.0 L998.3 1298.0 L1005.0 1289.0 L1011.7 1280.0 L1018.5 1271.0 L1025.2 1280.0 L1031.9 1289.0 L1038.6 1298.0 L1045.3 1307.0 L1052.1 1316.0 L1058.8 1325.0 L1065.5 1316.0 L1072.2 1325.0 L1078.9 1316.0 L1085.7 1307.0 L1092.4 1316.0 L1099.1 1307.0 L1105.8 1316.0 L1112.5 1307.0 L1119.3 1298.0 L1126.0 1289.0 L1132.7 1280.0 L1139.4 1271.0 L1146.1 1280.0 L1152.9 1271.0 L1159.6 1262.0 L1166.3 1271.0 L1173.0 1262.0 L1179.7 1271.0 L1186.5 1262.0 L1193.2 1271.0 L1199.9 1262.0 L1206.6 1253.0 L1213.3 1244.0 L1220.1 1253.0 L1226.8 1244.0 L1233.5 1235.0 L1240.2 1244.0 L1246.9 1253.0 L1253.7 1262.0 L1260.4 1253.0 L1267.1 1244.0 L1273.8 1253.0 L1280.5 1262.0 L1287.3 1271.0 L1294.0 1280.0 L1300.7 1271.0 L1307.4 1262.0 L1314.1 1271.0 L1320.9 1262.0 L1327.6 1271.0" stroke="#2ca02c"/><path d="M662.3 1496.0 L669.0 1487.0 L675.7 1496.0 L682.5 1487.0 L689.2 1496.0 L695.9 1505.0 L702.6 1496.0 L709.3 1487.0 L716.1 1478.0 L722.8 1487.0 L729.5 1478.0 L736.2 1469.0 L742.9 1460.0 L749.7 1451.0 L756.4 1442.0 L763.1 1433.0 L769.8 1442.0 L776.5 1451.0 L783.3 1460.0 L790.0 1451.0 L796.7 1460.0 L803.4 1469.0 L810.1 1478.0 L816.9 1487.0 L823.6 1496.0 L830.3 1487.0 L837.0 1478.0 L843.7 1487.0 L850.5 1478.0 L857.2 1487.0 L863.9 1478.0 L870.6 1487.0 L877.3 1496.0 L884.1 1505.0 L890.8 1496.0 L897.5 1505.0 L904.2 1496.0 L910.9 1505.0 L917.7 1514.0 L924.4 1505.0 L931.1 1496.0 L937.8 1505.0 L944.5 1496.0 L951.3 1505.0 L958.0 1496.0 L964.7 1487.0 L971.4 1496.0 L978.1 1505.0 L984.9 1496.0 L991.6 1487.0 L998.3 1496.0 L1005.0 1487.0 L1011.7 1496.0 L1018.5 1505.0 L1025.2 1496.0 L1031.9 1505.0 L1038.6 1514.0 L1045.3 1523.0 L1052.1 1532.0 L1058.8 1541.0 L1065.5 1532.0 L1072.2 1523.0 L1078.9 1532.0 L1085.7 1523.0 L1092.4 1532.0 L1099.1 1523.0 L1105.8 1514.0 L1112.5 1523.0 L1119.3 1514.0 L1126.0 1505.0 L1132.7 1496.0 L1139.4 1505.0 L1146.1 1496.0 L1152.9 1487.0 L1159.6 1496.0 L1166.3 1505.0 L1173.0 1496.0 L1179.7 1505.0 L1186.5 1496.0 L1193.2 1505.0 L1199.9 1496.0 L1206.6 1487.0 L1213.3 1496.0 L1220.1 1487.0 L1226.8 1478.0 L1233.5 1469.0 L1240.2 1460.0 L1246.9 1469.0 L1253.7 1460.0 L1260.4 1451.0 L1267.1 1442.0 L1273.8 1433.0 L1280.5 1424.0 L1287.3 1415.0 L1294.0 1424.0 L1300.7 1415.0 L1307.4 1424.0 L1314.1 1415.0 L1320.9 1424.0 L1327.6 1415.0" stroke="#d62728"/><path d="M662.3 1496.0 L669.0 1487.0 L675.7 1478.0 L682.5 1469.0 L689.2 1460.0 L695.9 1469.0 L702.6 1478.0 L709.3 1469.0 L716.1 1478.0 L722.8 1487.0 L729.5 1478.0 L736.2 1469.0 L742.9 1478.0 L749.7 1487.0 L756.4 1496.0 L763.1 1505.0 L769.8 1496.0 L776.5 1487.0 L783.3 1496.0 L790.0 1487.0 L796.7 1496.0 L803.4 1487.0 L810.1 1478.0 L816.9 1469.0 L823.6 1460.0 L830.3 1469.0 L837.0 1460.0 L843.7 1451.0 L850.5 1460.0 L857.2 1451.0 L863.9 1442.0 L870.6 1433.0 L877.3 1424.0 L884.1 1433.0 L890.8 1424.0 L897.5 1415.0 L904.2 1424.0 L910.9 1433.0 L917.7 1424.0 L924.4 1415.0 L931.1 1424.0 L937.8 1433.0 L944.5 1424.0 L951.3 1433.0 L958.0 1442.0 L964.7 1451.0 L971.4 1460.0 L978.1 1451.0 L984.9 1442.0 L991.6 1433.0 L998.3 1424.0 L1005.0 1415.0 L1011.7 1406.0 L1018.5 1397.0 L1025.2 1388.0 L1031.9 1397.0 L1038.6 1406.0 L1045.3 1397.0 L1052.1 1388.0 L1058.8 1379.0 L1065.5 1370.0 L1072.2 1361.0 L1078.9 1370.0 L1085.7 1361.0 L1092.4 1370.0 L1099.1 1361.0 L1105.8 1352.0 L1112.5 1343.0 L1119.3 1352.0 L1126.0 1343.0 L1132.7 1334.0 L1139.4 1343.0 L1146.1 1352.0 L1152.9 1361.0 L1159.6 1370.0 L1166.3 1361.0 L1173.0 1352.0 L1179.7 1343.0 L1186.5 1352.0 L1193.2 1361.0 L1199.9 1352.0 L1206.6 1343.0 L1213.3 1334.0 L1220.1 1343.0 L1226.8 1334.0 L1233.5 1325.0 L1240.2 1334.0 L1246.9 1325.0 L1253.7 1334.0 L1260.4 1343.0 L1267.1 1334.0 L1273.8 1343.0 L1280.5 1334.0 L1287.3 1343.0 L1294.0 1352.0 L1300.7 1361.0 L1307.4 1370.0 L1314.1 1361.0 L1320.9 1352.0 L1327.6 1343.0" stroke="#9467bd"/><path d="M662.3 1496.0 L669.0 1487.0 L675.7 1496.0 L682.5 1487.0 L689.2 1496.0 L695.9 1487.0 L702.6 1478.0 L709.3 1487.0 L716.1 1496.0 L722.8 1487.0 L729.5 1478.0 L736.2 1469.0 L742.9 1478.0 L749.7 1487.0 L756.4 1496.0 L763.1 1487.0 L769.8 1478.0 L776.5 1469.0 L783.3 1478.0 L790.0 1487.0 L796.7 1478.0 L803.4 1469.0 L810.1 1460.0 L816.9 1469.0 L823.6 1460.0 L830.3 1469.0 L837.0 1460.0 L843.7 1451.0 L850.5 1442.0 L857.2 1451.0 L863.9 1442.0 L870.6 1433.0 L877.3 1424.0 L884.1 1433.0 L890.8 1424.0 L897.5 1415.0 L904.2 1406.0 L910.9 1397.0 L917.7 1388.0 L924.4 1379.0 L931.1 1370.0 L937.8 1379.0 L944.5 1388.0 L951.3 1397.0 L958.0 1388.0 L964.7 1397.0 L971.4 1406.0 L978.1 1397.0 L984.9 1388.0 L991.6 1379.0 L998.3 1370.0 L1005.0 1361.0 L1011.7 1370.0 L1018.5 1361.0 L1025.2 1352.0 L1031.9 1343.0 L1038.6 1352.0 L1045.3 1361.0 L1052.1 1352.0 L1058.8 1361.0 L1065.5 1370.0 L1072.2 1379.0 L1078.9 1370.0 L1085.7 1379.0 L1092.4 1370.0 L1099.1 1379.0 L1105.8 1370.0 L1112.5 1361.0 L1119.3 1370.0 L1126.0 1379.0 L1132.7 1370.0 L1139.4 1361.0 L1146.1 1352.0 L1152.9 1343.0 L1159.6 1352.0 L1166.3 1361.0 L1173.0 1370.0 L1179.7 1379.0 L1186.5 1370.0 L1193.2 1361.0 L1199.9 1352.0 L1206.6 1361.0 L1213.3 1352.0 L1220.1 1361.0 L1226.8 1370.0 L1233.5 1379.0 L1240.2 1370.0 L1246.9 1379.0 L1253.7 1388.0 L1260.4 1379.0 L1267.1 1388.0 L1273.8 1397.0 L1280.5 1388.0 L1287.3 1379.0 L1294.0 1388.0 L1300.7 1397.0 L1307.4 1388.0 L1314.1 1379.0 L1320.9 1370.0 L1327.6 1379.0" stroke="#8c564b"/><path d="M662.3 1496.0 L669.0 1487.0 L675.7 1478.0 L682.5 1487.0 L689.2 1496.0 L695.9 1487.0 L702.6 1478.0 L709.3 1469.0 L716.1 1460.0 L722.8 1469.0 L729.5 1478.0 L736.2 1469.0 L742.9 1460.0 L749.7 1469.0 L756.4 1478.0 L763.1 1487.0 L769.8 1478.0 L776.5 1469.0 L783.3 1460.0 L790.0 1451.0 L796.7 1460.0 L803.4 1469.0 L810.1 1478.0 L816.9 1487.0 L823.6 1478.0 L830.3 1487.0 L837.0 1496.0 L843.7 1487.0 L850.5 1478.0 L857.2 1487.0 L863.9 1496.0 L870.6 1505.0 L877.3 1514.0 L884.1 1523.0 L890.8 1514.0 L897.5 1505.0 L904.2 1496.0 L910.9 1505.0 L917.7 1514.0 L924.4 1505.0 L931.1 1496.0 L937.8 1505.0 L944.5 1496.0 L951.3 1487.0 L958.0 1496.0 L964.7 1505.0 L971.4 1496.0 L978.1 1487.0 L984.9 1478.0 L991.6 1469.0 L998.3 1460.0 L1005.0 1469.0 L1011.7 1478.0 L1018.5 1469.0 L1025.2 1478.0 L1031.9 1469.0 L1038.6 1460.0 L1045.3 1451.0 L1052.1 1460.0 L1058.8 1451.0 L1065.5 1460.0 L1072.2 1451.0 L1078.9 1442.0 L1085.7 1433.0 L1092.4 1442.0 L1099.1 1433.0 L1105.8 1424.0 L1112.5 1415.0 L1119.3 1406.0 L1126.0 1397.0 L1132.7 1388.0 L1139.4 1397.0 L1146.1 1388.0 L1152.9 1397.0 L1159.6 1388.0 L1166.3 1379.0 L1173.0 1370.0 L1179.7 1379.0 L1186.5 1388.0 L1193.2 1397.0 L1199.9 1406.0 L1206.6 1397.0 L1213.3 1388.0 L1220.1 1379.0 L1226.8 1370.0 L1233.5 1379.0 L1240.2 1388.0 L1246.9 1397.0 L1253.7 1388.0 L1260.4 1397.0 L1267.1 1388.0 L1273.8 1397.0 L1280.5 1388.0 L1287.3 1397.0 L1294.0 1388.0 L1300.7 1379.0 L1307.4 1370.0 L1314.1 1379.0 L1320.9 1388.0 L1327.6 1397.0" stroke="#e377c2"/><path d="M662.3 1496.0 L669.0 1487.0 L675.7 1496.0 L682.5 1487.0 L689.2 1478.0 L695.9 1487.0 L702.6 1478.0 L709.3 1487.0 L716.1 1496.0 L722.8 1487.0 L729.5 1496.0 L736.2 1487.0 L742.9 1478.0 L749.7 1487.0 L756.4 1478.0 L763.1 1487.0 L769.8 1478.0 L776.5 1469.0 L783.3 1478.0 L790.0 1487.0 L796.7 1478.0 L803.4 1469.0 L810.1 1460.0 L816.9 1451.0 L823.6 1442.0 L830.3 1433.0 L837.0 1442.0 L843.7 1433.0 L850.5 1424.0 L857.2 1415.0 L863.9 1424.0 L870.6 1415.0 L877.3 1406.0 L884.1 1397.0 L890.8 1388.0 L897.5 1397.0 L904.2 1388.0 L910.9 1379.0 L917.7 1370.0 L924.4 1361.0 L931.1 1370.0 L937.8 1379.0 L944.5 1370.0 L951.3 1361.0 L958.0 1370.0 L964.7 1361.0 L971.4 1370.0 L978.1 1379.0 L984.9 1370.0 L991.6 1361.0 L998.3 1370.0 L1005.0 1379.0 L1011.7 1388.0 L1018.5 1379.0 L1025.2 1370.0 L1031.9 1361.0 L1038.6 1352.0 L1045.3 1343.0 L1052.1 1352.0 L1058.8 1343.0 L1065.5 1334.0 L1072.2 1325.0 L1078.9 1316.0 L1085.7 1325.0 L1092.4 1316.0 L1099.1 1307.0 L1105.8 1298.0 L1112.5 1307.0 L1119.3 1298.0 L1126.0 1289.0 L1132.7 1298.0 L1139.4 1307.0 L1146.1 1316.0 L1152.9 1325.0 L1159.6 1334.0 L1166.3 1343.0 L1173.0 1334.0 L1179.7 1325.0 L1186.5 1316.0 L1193.2 1307.0 L1199.9 1298.0 L1206.6 1289.0 L1213.3 1280.0 L1220.1 1289.0 L1226.8 1298.0 L1233.5 1289.0 L1240.2 1298.0 L1246.9 1307.0 L1253.7 1298.0 L1260.4 1289.0 L1267.1 1280.0 L1273.8 1289.0 L1280.5 1298.0 L1287.3 1307.0 L1294.0 1316.0 L1300.7 1307.0 L1307.4 1298.0 L1314.1 1307.0 L1320.9 1298.0 L1327.6 1289.0" stroke="#7f7f7f"/><path d="M662.3 1514.0 L669.0 1523.0 L675.7 1514.0 L682.5 1523.0 L689.2 1532.0 L695.9 1523.0 L702.6 1532.0 L709.3 1541.0 L716.1 1532.0 L722.8 1541.0 L729.5 1550.0 L736.2 1559.0 L742.9 1568.0 L749.7 1559.0 L756.4 1550.0 L763.1 1541.0 L769.8 1532.0 L776.5 1523.0 L783.3 1532.0 L790.0 1523.0 L796.7 1514.0 L803.4 1505.0 L810.1 1496.0 L816.9 1487.0 L823.6 1496.0 L830.3 1505.0 L837.0 1514.0 L843.7 1505.0 L850.5 1496.0 L857.2 1487.0 L863.9 1478.0 L870.6 1469.0 L877.3 1478.0 L884.1 1469.0 L890.8 1460.0 L897.5 1469.0 L904.2 1478.0 L910.9 1487.0 L917.7 1478.0 L924.4 1469.0 L931.1 1478.0 L937.8 1469.0 L944.5 1478.0 L951.3 1469.0 L958.0 1460.0 L964.7 1469.0 L971.4 1460.0 L978.1 1469.0 L984.9 1460.0 L991.6 1451.0 L998.3 1460.0 L1005.0 1451.0 L1011.7 1442.0 L1018.5 1451.0 L1025.2 1442.0 L1031.9 1433.0 L1038.6 1424.0 L1045.3 1415.0 L1052.1 1406.0 L1058.8 1397.0 L1065.5 1406.0 L1072.2 1397.0 L1078.9 1388.0 L1085.7 1379.0 L1092.4 1370.0 L1099.1 1361.0 L1105.8 1352.0 L1112.5 1361.0 L1119.3 1352.0 L1126.0 1361.0 L1132.7 1370.0 L1139.4 1361.0 L1146.1 1370.0 L1152.9 1361.0 L1159.6 1370.0 L1166.3 1361.0 L1173.0 1352.0 L1179.7 1343.0 L1186.5 1334.0 L1193.2 1325.0 L1199.9 1316.0 L1206.6 1307.0 L1213.3 1298.0 L1220.1 1289.0 L1226.8 1280.0 L1233.5 1271.0 L1240.2 1262.0 L1246.9 1271.0 L1253.7 1262.0 L1260.4 1253.0 L1267.1 1244.0 L1273.8 1235.0 L1280.5 1244.0 L1287.3 1235.0 L1294.0 1226.0 L1300.7 1235.0 L1307.4 1244.0 L1314.1 1235.0 L1320.9 1244.0 L1327.6 1253.0" stroke="#bcbd22"/><path d="M662.3 1496.0 L669.0 1505.0 L675.7 1496.0 L682.5 1487.0 L689.2 1478.0 L695.9 1469.0 L702.6 1460.0 L709.3 1451.0 L716.1 1460.0 L722.8 1451.0 L729.5 1460.0 L736.2 1451.0 L742.9 1442.0 L749.7 1451.0 L756.4 1442.0 L763.1 1433.0 L769.8 1442.0 L776.5 1451.0 L783.3 1460.0 L790.0 1451.0 L796.7 1460.0 L803.4 1451.0 L810.1 1460.0 L816.9 1451.0 L823.6 1460.0 L830.3 1451.0 L837.0 1442.0 L843.7 1451.0 L850.5 1460.0 L857.2 1451.0 L863.9 1442.0 L870.6 1451.0 L877.3 1460.0 L884.1 1451.0 L890.8 1442.0 L897.5 1433.0 L904.2 1424.0 L910.9 1415.0 L917.7 1406.0 L924.4 1415.0 L931.1 1406.0 L937.8 1415.0 L944.5 1424.0 L951.3 1415.0 L958.0 1424.0 L964.7 1433.0 L971.4 1424.0 L978.1 1415.0 L984.9 1424.0 L991.6 1433.0 L998.3 1424.0 L1005.0 1415.0 L1011.7 1406.0 L1018.5 1415.0 L1025.2 1406.0 L1031.9 1397.0 L1038.6 1406.0 L1045.3 1397.0 L1052.1 1406.0 L1058.8 1415.0 L1065.5 1406.0 L1072.2 1397.0 L1078.9 1406.0 L1085.7 1397.0 L1092.4 1388.0 L1099.1 1379.0 L1105.8 1388.0 L1112.5 1379.0 L1119.3 1388.0 L1126.0 1379.0 L1132.7 1388.0 L1139.4 1379.0 L1146.1 1370.0 L1152.9 1379.0 L1159.6 1388.0 L1166.3 1379.0 L1173.0 1388.0 L1179.7 1379.0 L1186.5 1388.0 L1193.2 1397.0 L1199.9 1388.0 L1206.6 1379.0 L1213.3 1370.0 L1220.1 1361.0 L1226.8 1352.0 L1233.5 1343.0 L1240.2 1334.0 L1246.9 1325.0 L1253.7 1316.0 L1260.4 1307.0 L1267.1 1298.0 L1273.8 1289.0 L1280.5 1280.0 L1287.3 1289.0 L1294.0 1280.0 L1300.7 1271.0 L1307.4 1280.0 L1314.1 1289.0 L1320.9 1280.0 L1327.6 1289.0" stroke="#17becf"/><path d="M662.3 1514.0 L669.0 1505.0 L675.7 1496.0 L682.5 1505.0 L689.2 1514.0 L695.9 1523.0 L702.6 1532.0 L709.3 1523.0 L716.1 1514.0 L722.8 1523.0 L729.5 1514.0 L736.2 1523.0 L742.9 1514.0 L749.7 1523.0 L756.4 1514.0 L763.1 1505.0 L769.8 1496.0 L776.5 1487.0 L783.3 1478.0 L790.0 1469.0 L796.7 1460.0 L803.4 1451.0 L810.1 1442.0 L816.9 1451.0 L823.6 1460.0 L830.3 1451.0 L837.0 1460.0 L843.7 1469.0 L850.5 1460.0 L857.2 1451.0 L863.9 1460.0 L870.6 1451.0 L877.3 1442.0 L884.1 1451.0 L890.8 1442.0 L897.5 1451.0 L904.2 1460.0 L910.9 1451.0 L917.7 1442.0 L924.4 1451.0 L931.1 1442.0 L937.8 1451.0 L944.5 1442.0 L951.3 1451.0 L958.0 1442.0 L964.7 1433.0 L971.4 1424.0 L978.1 1415.0 L984.9 1424.0 L991.6 1433.0 L998.3 1424.0 L1005.0 1433.0 L1011.7 1424.0 L1018.5 1433.0 L1025.2 1442.0 L1031.9 1451.0 L1038.6 1442.0 L1045.3 1433.0 L1052.1 1442.0 L1058.8 1433.0 L1065.5 1424.0 L1072.2 1415.0 L1078.9 1424.0 L1085.7 1415.0 L1092.4 1424.0 L1099.1 1415.0 L1105.8 1406.0 L1112.5 1415.0 L1119.3 1406.0 L1126.0 1415.0 L1132.7 1406.0 L1139.4 1397.0 L1146.1 1388.0 L1152.9 1379.0 L1159.6 1370.0 L1166.3 1361.0 L1173.0 1352.0 L1179.7 1343.0 L1186.5 1352.0 L1193.2 1343.0 L1199.9 1334.0 L1206.6 1325.0 L1213.3 1334.0 L1220.1 1343.0 L1226.8 1352.0 L1233.5 1343.0 L1240.2 1352.0 L1246.9 1343.0 L1253.7 1334.0 L1260.4 1325.0 L1267.1 1334.0 L1273.8 1343.0 L1280.5 1352.0 L1287.3 1343.0 L1294.0 1334.0 L1300.7 1325.0 L1307.4 1334.0 L1314.1 1325.0 L1320.9 1316.0 L1327.6 1325.0" stroke="#1f77b4"/><path d="M662.3 1496.0 L669.0 1505.0 L675.7 1496.0 L682.5 1505.0 L689.2 1514.0 L695.9 1523.0 L702.6 1532.0 L709.3 1523.0 L716.1 1532.0 L722.8 1523.0 L729.5 1532.0 L736.2 1523.0 L742.9 1514.0 L749.7 1505.0 L756.4 1496.0 L763.1 1505.0 L769.8 1496.0 L776.5 1487.0 L783.3 1496.0 L790.0 1487.0 L796.7 1496.0 L803.4 1505.0 L810.1 1514.0 L816.9 1505.0 L823.6 1496.0 L830.3 1487.0 L837.0 1478.0 L843.7 1469.0 L850.5 1460.0 L857.2 1469.0 L863.9 1460.0 L870.6 1451.0 L877.3 1460.0 L884.1 1451.0 L890.8 1442.0 L897.5 1451.0 L904.2 1460.0 L910.9 1451.0 L917.7 1442.0 L924.4 1433.0 L931.1 1442.0 L937.8 1433.0 L944.5 1442.0 L951.3 1433.0 L958.0 1424.0 L964.7 1433.0 L971.4 1442.0 L978.1 1433.0 L984.9 1424.0 L991.6 1415.0 L998.3 1406.0 L1005.0 1397.0 L1011.7 1406.0 L1018.5 1415.0 L1025.2 1406.0 L1031.9 1415.0 L1038.6 1406.0 L1045.3 1415.0 L1052.1 1424.0 L1058.8 1433.0 L1065.5 1442.0 L1072.2 1451.0 L1078.9 1442.0 L1085.7 1451.0 L1092.4 1442.0 L1099.1 1433.0 L1105.8 1424.0 L1112.5 1433.0 L1119.3 1424.0 L1126.0 1415.0 L1132.7 1406.0 L1139.4 1415.0 L1146.1 1406.0 L1152.9 1397.0 L1159.6 1388.0 L1166.3 1379.0 L1173.0 1388.0 L1179.7 1379.0 L1186.5 1370.0 L1193.2 1361.0 L1199.9 1352.0 L1206.6 1361.0 L1213.3 1352.0 L1220.1 1361.0 L1226.8 1370.0 L1233.5 1379.0 L1240.2 1388.0 L1246.9 1379.0 L1253.7 1370.0 L1260.4 1379.0 L1267.1 1388.0 L1273.8 1379.0 L1280.5 1370.0 L1287.3 1361.0 L1294.0 1352.0 L1300.7 1343.0 L1307.4 1334.0 L1314.1 1343.0 L1320.9 1334.0 L1327.6 1325.0" stroke="#ff7f0e"/><path d="M662.3 1496.0 L669.0 1487.0 L675.7 1478.0 L682.5 1487.0 L689.2 1496.0 L695.9 1505.0 L702.6 1496.0 L709.3 1505.0 L716.1 1496.0 L722.8 1487.0 L729.5 1496.0 L736.2 1487.0 L742.9 1478.0 L749.7 1487.0 L756.4 1478.0 L763.1 1487.0 L769.8 1496.0 L776.5 1487.0 L783.3 1478.0 L790.0 1487.0 L796.7 1478.0 L803.4 1487.0 L810.1 1478.0 L816.9 1487.0 L823.6 1478.0 L830.3 1469.0 L837.0 1460.0 L843.7 1451.0 L850.5 1460.0 L857.2 1451.0 L863.9 1442.0 L870.6 1433.0 L877.3 1442.0 L884.1 1433.0 L890.8 1424.0 L897.5 1433.0 L904.2 1442.0 L910.9 1433.0 L917.7 1424.0 L924.4 1433.0 L931.1 1424.0 L937.8 1415.0 L944.5 1406.0 L951.3 1397.0 L958.0 1406.0 L964.7 1415.0 L971.4 1424.0 L978.1 1415.0 L984.9 1406.0 L991.6 1397.0 L998.3 1406.0 L1005.0 1397.0 L1011.7 1406.0 L1018.5 1415.0 L1025.2 1406.0 L1031.9 1415.0 L1038.6 1406.0 L1045.3 1397.0 L1052.1 1388.0 L1058.8 1397.0 L1065.5 1388.0 L1072.2 1379.0 L1078.9 1388.0 L1085.7 1397.0 L1092.4 1388.0 L1099.1 1379.0 L1105.8 1370.0 L1112.5 1379.0 L1119.3 1370.0 L1126.0 1361.0 L1132.7 1352.0 L1139.4 1343.0 L1146.1 1334.0 L1152.9 1325.0 L1159.6 1316.0 L1166.3 1325.0 L1173.0 1316.0 L1179.7 1307.0 L1186.5 1316.0 L1193.2 1325.0 L1199.9 1316.0 L1206.6 1325.0 L1213.3 1316.0 L1220.1 1307.0 L1226.8 1298.0 L1233.5 1289.0 L1240.2 1280.0 L1246.9 1289.0 L1253.7 1280.0 L1260.4 1271.0 L1267.1 1262.0 L1273.8 1253.0 L1280.5 1244.0 L1287.3 1235.0 L1294.0 1244.0 L1300.7 1235.0 L1307.4 1244.0 L1314.1 1253.0 L1320.9 1244.0 L1327.6 1253.0" stroke="#2ca02c"/><path d="M662.3 1514.0 L669.0 1505.0 L675.7 1514.0 L682.5 1505.0 L689.2 1496.0 L695.9 1505.0 L702.6 1496.0 L709.3 1487.0 L716.1 1496.0 L722.8 1487.0 L729.5 1496.0 L736.2 1505.0 L742.9 1496.0 L749.7 1487.0 L756.4 1478.0 L763.1 1487.0 L769.8 1478.0 L776.5 1469.0 L783.3 1478.0 L790.0 1469.0 L796.7 1460.0 L803.4 1451.0 L810.1 1460.0 L816.9 1469.0 L823.6 1460.0 L830.3 1451.0 L837.0 1442.0 L843.7 1451.0 L850.5 1460.0 L857.2 1469.0 L863.9 1460.0 L870.6 1469.0 L877.3 1460.0 L884.1 1451.0 L890.8 1460.0 L897.5 1451.0 L904.2 1442.0 L910.9 1451.0 L917.7 1460.0 L924.4 1451.0 L931.1 1460.0 L937.8 1451.0 L944.5 1460.0 L951.3 1469.0 L958.0 1478.0 L964.7 1487.0 L971.4 1478.0 L978.1 1469.0 L984.9 1460.0 L991.6 1451.0 L998.3 1442.0 L1005.0 1451.0 L1011.7 1442.0 L1018.5 1451.0 L1025.2 1442.0 L1031.9 1433.0 L1038.6 1424.0 L1045.3 1433.0 L1052.1 1424.0 L1058.8 1433.0 L1065.5 1442.0 L1072.2 1433.0 L1078.9 1424.0 L1085.7 1415.0 L1092.4 1424.0 L1099.1 1415.0 L1105.8 1424.0 L1112.5 1433.0 L1119.3 1442.0 L1126.0 1451.0 L1132.7 1460.0 L1139.4 1451.0 L1146.1 1442.0 L1152.9 1433.0 L1159.6 1442.0 L1166.3 1433.0 L1173.0 1442.0 L1179.7 1433.0 L1186.5 1424.0 L1193.2 1415.0 L1199.9 1406.0 L1206.6 1397.0 L1213.3 1406.0 L1220.1 1397.0 L1226.8 1388.0 L1233.5 1379.0 L1240.2 1388.0 L1246.9 1397.0 L1253.7 1406.0 L1260.4 1397.0 L1267.1 1388.0 L1273.8 1379.0 L1280.5 1370.0 L1287.3 1361.0 L1294.0 1370.0 L1300.7 1361.0 L1307.4 1352.0 L1314.1 1343.0 L1320.9 1334.0 L1327.6 1343.0" stroke="#d62728"/><path d="M662.3 1514.0 L669.0 1505.0 L675.7 1514.0 L682.5 1505.0 L689.2 1496.0 L695.9 1487.0 L702.6 1478.0 L709.3 1487.0 L716.1 1478.0 L722.8 1487.0 L729.5 1496.0 L736.2 1505.0 L742.9 1496.0 L749.7 1505.0 L756.4 1514.0 L763.1 1505.0 L769.8 1496.0 L776.5 1487.0 L783.3 1478.0 L790.0 1469.0 L796.7 1460.0 L803.4 1451.0 L810.1 1460.0 L816.9 1451.0 L823.6 1442.0 L830.3 1433.0 L837.0 1424.0 L843.7 1433.0 L850.5 1424.0 L857.2 1415.0 L863.9 1406.0 L870.6 1397.0 L877.3 1388.0 L884.1 1397.0 L890.8 1406.0 L897.5 1397.0 L904.2 1388.0 L910.9 1379.0 L917.7 1370.0 L924.4 1379.0 L931.1 1388.0 L937.8 1379.0 L944.5 1370.0 L951.3 1361.0 L958.0 1352.0 L964.7 1343.0 L971.4 1352.0 L978.1 1361.0 L984.9 1370.0 L991.6 1379.0 L998.3 1370.0 L1005.0 1379.0 L1011.7 1388.0 L1018.5 1379.0 L1025.2 1388.0 L1031.9 1379.0 L1038.6 1388.0 L1045.3 1397.0 L1052.1 1406.0 L1058.8 1397.0 L1065.5 1388.0 L1072.2 1397.0 L1078.9 1406.0 L1085.7 1415.0 L1092.4 1406.0 L1099.1 1415.0 L1105.8 1424.0 L1112.5 1433.0 L1119.3 1424.0 L1126.0 1415.0 L1132.7 1406.0 L1139.4 1397.0 L1146.1 1406.0 L1152.9 1397.0 L1159.6 1406.0 L1166.3 1415.0 L1173.0 1424.0 L1179.7 1415.0 L1186.5 1406.0 L1193.2 1397.0 L1199.9 1388.0 L1206.6 1379.0 L1213.3 1388.0 L1220.1 1379.0 L1226.8 1388.0 L1233.5 1379.0 L1240.2 1370.0 L1246.9 1379.0 L1253.7 1388.0 L1260.4 1397.0 L1267.1 1388.0 L1273.8 1379.0 L1280.5 1388.0 L1287.3 1379.0 L1294.0 1388.0 L1300.7 1397.0 L1307.4 1388.0 L1314.1 1379.0 L1320.9 1370.0 L1327.6 1361.0" stroke="#9467bd"/><path d="M662.3 1496.0 L669.0 1505.0 L675.7 1514.0 L682.5 1505.0 L689.2 1514.0 L695.9 1505.0 L702.6 1496.0 L709.3 1487.0 L716.1 1478.0 L722.8 1487.0 L729.5 1478.0 L736.2 1469.0 L742.9 1478.0 L749.7 1469.0 L756.4 1478.0 L763.1 1487.0 L769.8 1496.0 L776.5 1487.0 L783.3 1496.0 L790.0 1505.0 L796.7 1514.0 L803.4 1505.0 L810.1 1496.0 L816.9 1487.0 L823.6 1496.0 L830.3 1505.0 L837.0 1496.0 L843.7 1487.0 L850.5 1478.0 L857.2 1469.0 L863.9 1478.0 L870.6 1487.0 L877.3 1496.0 L884.1 1505.0 L890.8 1496.0 L897.5 1505.0 L904.2 1496.0 L910.9 1487.0 L917.7 1478.0 L924.4 1469.0 L931.1 1460.0 L937.8 1451.0 L944.5 1460.0 L951.3 1451.0 L958.0 1442.0 L964.7 1433.0 L971.4 1424.0 L978.1 1415.0 L984.9 1406.0 L991.6 1397.0 L998.3 1406.0 L1005.0 1415.0 L1011.7 1424.0 L1018.5 1415.0 L1025.2 1406.0 L1031.9 1397.0 L1038.6 1406.0 L1045.3 1415.0 L1052.1 1406.0 L1058.8 1415.0 L1065.5 1424.0 L1072.2 1415.0 L1078.9 1424.0 L1085.7 1433.0 L1092.4 1424.0 L1099.1 1415.0 L1105.8 1424.0 L1112.5 1415.0 L1119.3 1424.0 L1126.0 1433.0 L1132.7 1424.0 L1139.4 1415.0 L1146.1 1406.0 L1152.9 1415.0 L1159.6 1406.0 L1166.3 1397.0 L1173.0 1388.0 L1179.7 1379.0 L1186.5 1388.0 L1193.2 1379.0 L1199.9 1370.0 L1206.6 1361.0 L1213.3 1352.0 L1220.1 1361.0 L1226.8 1370.0 L1233.5 1379.0 L1240.2 1370.0 L1246.9 1361.0 L1253.7 1370.0 L1260.4 1379.0 L1267.1 1370.0 L1273.8 1379.0 L1280.5 1370.0 L1287.3 1379.0 L1294.0 1370.0 L1300.7 1379.0 L1307.4 1370.0 L1314.1 1361.0 L1320.9 1370.0 L1327.6 1379.0" stroke="#8c564b"/><path d="M662.3 1496.0 L669.0 1487.0 L675.7 1478.0 L682.5 1487.0 L689.2 1496.0 L695.9 1487.0 L702.6 1478.0 L709.3 1469.0 L716.1 1478.0 L722.8 1487.0 L729.5 1478.0 L736.2 1469.0 L742.9 1478.0 L749.7 1469.0 L756.4 1460.0 L763.1 1469.0 L769.8 1460.0 L776.5 1451.0 L783.3 1460.0 L790.0 1451.0 L796.7 1460.0 L803.4 1451.0 L810.1 1442.0 L816.9 1451.0 L823.6 1460.0 L830.3 1469.0 L837.0 1460.0 L843.7 1469.0 L850.5 1460.0 L857.2 1451.0 L863.9 1442.0 L870.6 1433.0 L877.3 1424.0 L884.1 1433.0 L890.8 1424.0 L897.5 1433.0 L904.2 1442.0 L910.9 1451.0 L917.7 1442.0 L924.4 1433.0 L931.1 1424.0 L937.8 1433.0 L944.5 1442.0 L951.3 1433.0 L958.0 1442.0 L964.7 1433.0 L971.4 1424.0 L978.1 1433.0 L984.9 1424.0 L991.6 1433.0 L998.3 1442.0 L1005.0 1433.0 L1011.7 1424.0 L1018.5 1415.0 L1025.2 1424.0 L1031.9 1415.0 L1038.6 1406.0 L1045.3 1415.0 L1052.1 1406.0 L1058.8 1415.0 L1065.5 1424.0 L1072.2 1415.0 L1078.9 1406.0 L1085.7 1397.0 L1092.4 1406.0 L1099.1 1415.0 L1105.8 1424.0 L1112.5 1415.0 L1119.3 1406.0 L1126.0 1415.0 L1132.7 1424.0 L1139.4 1415.0 L1146.1 1406.0 L1152.9 1415.0 L1159.6 1406.0 L1166.3 1397.0 L1173.0 1388.0 L1179.7 1397.0 L1186.5 1388.0 L1193.2 1379.0 L1199.9 1388.0 L1206.6 1397.0 L1213.3 1388.0 L1220.1 1379.0 L1226.8 1370.0 L1233.5 1379.0 L1240.2 1388.0 L1246.9 1397.0 L1253.7 1388.0 L1260.4 1379.0 L1267.1 1370.0 L1273.8 1379.0 L1280.5 1370.0 L1287.3 1379.0 L1294.0 1388.0 L1300.7 1397.0 L1307.4 1388.0 L1314.1 1397.0 L1320.9 1388.0 L1327.6 1397.0" stroke="#e377c2"/><path d="M662.3 1514.0 L669.0 1505.0 L675.7 1496.0 L682.5 1505.0 L689.2 1514.0 L695.9 1505.0 L702.6 1496.0 L709.3 1487.0 L716.1 1478.0 L722.8 1469.0 L729.5 1478.0 L736.2 1487.0 L742.9 1478.0 L749.7 1469.0 L756.4 1460.0 L763.1 1469.0 L769.8 1478.0 L776.5 1469.0 L783.3 1460.0 L790.0 1451.0 L796.7 1442.0 L803.4 1433.0 L810.1 1424.0 L816.9 1415.0 L823.6 1406.0 L830.3 1415.0 L837.0 1406.0 L843.7 1415.0 L850.5 1406.0 L857.2 1397.0 L863.9 1406.0 L870.6 1415.0 L877.3 1424.0 L884.1 1433.0 L890.8 1424.0 L897.5 1433.0 L904.2 1442.0 L910.9 1451.0 L917.7 1442.0 L924.4 1451.0 L931.1 1460.0 L937.8 1451.0 L944.5 1460.0 L951.3 1469.0 L958.0 1478.0 L964.7 1469.0 L971.4 1460.0 L978.1 1451.0 L984.9 1442.0 L991.6 1451.0 L998.3 1442.0 L1005.0 1433.0 L1011.7 1424.0 L1018.5 1415.0 L1025.2 1406.0 L1031.9 1415.0 L1038.6 1406.0 L1045.3 1415.0 L1052.1 1406.0 L1058.8 1415.0 L1065.5 1406.0 L1072.2 1397.0 L1078.9 1388.0 L1085.7 1397.0 L1092.4 1388.0 L1099.1 1379.0 L1105.8 1370.0 L1112.5 1379.0 L1119.3 1388.0 L1126.0 1379.0 L1132.7 1388.0 L1139.4 1379.0 L1146.1 1388.0 L1152.9 1379.0 L1159.6 1388.0 L1166.3 1397.0 L1173.0 1388.0 L1179.7 1379.0 L1186.5 1370.0 L1193.2 1361.0 L1199.9 1352.0 L1206.6 1361.0 L1213.3 1352.0 L1220.1 1361.0 L1226.8 1352.0 L1233.5 1361.0 L1240.2 1370.0 L1246.9 1361.0 L1253.7 1370.0 L1260.4 1379.0 L1267.1 1388.0 L1273.8 1397.0 L1280.5 1388.0 L1287.3 1379.0 L1294.0 1370.0 L1300.7 1361.0 L1307.4 1370.0 L1314.1 1379.0 L1320.9 1388.0 L1327.6 1397.0" stroke="#7f7f7f"/><path d="M662.3 1496.0 L669.0 1505.0 L675.7 1514.0 L682.5 1523.0 L689.2 1532.0 L695.9 1523.0 L702.6 1514.0 L709.3 1505.0 L716.1 1514.0 L722.8 1523.0 L729.5 1514.0 L736.2 1523.0 L742.9 1514.0 L749.7 1523.0 L756.4 1514.0 L763.1 1505.0 L769.8 1496.0 L776.5 1487.0 L783.3 1478.0 L790.0 1469.0 L796.7 1478.0 L803.4 1487.0 L810.1 1478.0 L816.9 1487.0 L823.6 1478.0 L830.3 1487.0 L837.0 1478.0 L843.7 1487.0 L850.5 1496.0 L857.2 1487.0 L863.9 1478.0 L870.6 1469.0 L877.3 1478.0 L884.1 1469.0 L890.8 1460.0 L897.5 1469.0 L904.2 1460.0 L910.9 1469.0 L917.7 1460.0 L924.4 1451.0 L931.1 1460.0 L937.8 1469.0 L944.5 1460.0 L951.3 1451.0 L958.0 1442.0 L964.7 1451.0 L971.4 1442.0 L978.1 1433.0 L984.9 1442.0 L991.6 1433.0 L998.3 1442.0 L1005.0 1433.0 L1011.7 1442.0 L1018.5 1433.0 L1025.2 1424.0 L1031.9 1415.0 L1038.6 1424.0 L1045.3 1433.0 L1052.1 1442.0 L1058.8 1433.0 L1065.5 1442.0 L1072.2 1433.0 L1078.9 1442.0 L1085.7 1451.0 L1092.4 1442.0 L1099.1 1433.0 L1105.8 1424.0 L1112.5 1415.0 L1119.3 1406.0 L1126.0 1397.0 L1132.7 1388.0 L1139.4 1379.0 L1146.1 1388.0 L1152.9 1379.0 L1159.6 1388.0 L1166.3 1379.0 L1173.0 1370.0 L1179.7 1379.0 L1186.5 1388.0 L1193.2 1397.0 L1199.9 1388.0 L1206.6 1379.0 L1213.3 1370.0 L1220.1 1361.0 L1226.8 1352.0 L1233.5 1361.0 L1240.2 1352.0 L1246.9 1361.0 L1253.7 1370.0 L1260.4 1361.0 L1267.1 1370.0 L1273.8 1361.0 L1280.5 1352.0 L1287.3 1361.0 L1294.0 1352.0 L1300.7 1361.0 L1307.4 1352.0 L1314.1 1343.0 L1320.9 1334.0 L1327.6 1343.0" stroke="#bcbd22"/><path d="M662.3 1496.0 L669.0 1505.0 L675.7 1514.0 L682.5 1505.0 L689.2 1496.0 L695.9 1487.0 L702.6 1496.0 L709.3 1487.0 L716.1 1496.0 L722.8 1487.0 L729.5 1478.0 L736.2 1487.0 L742.9 1496.0 L749.7 1505.0 L756.4 1496.0 L763.1 1487.0 L769.8 1478.0 L776.5 1469.0 L783.3 1460.0 L790.0 1451.0 L796.7 1442.0 L803.4 1433.0 L810.1 1424.0 L816.9 1415.0 L823.6 1424.0 L830.3 1433.0 L837.0 1424.0 L843.7 1415.0 L850.5 1424.0 L857.2 1415.0 L863.9 1424.0 L870.6 1415.0 L877.3 1406.0 L884.1 1397.0 L890.8 1406.0 L897.5 1415.0 L904.2 1406.0 L910.9 1415.0 L917.7 1424.0 L924.4 1415.0 L931.1 1424.0 L937.8 1433.0 L944.5 1442.0 L951.3 1433.0 L958.0 1424.0 L964.7 1433.0 L971.4 1442.0 L978.1 1433.0 L984.9 1442.0 L991.6 1433.0 L998.3 1424.0 L1005.0 1415.0 L1011.7 1406.0 L1018.5 1397.0 L1025.2 1406.0 L1031.9 1397.0 L1038.6 1388.0 L1045.3 1397.0 L1052.1 1406.0 L1058.8 1397.0 L1065.5 1388.0 L1072.2 1397.0 L1078.9 1388.0 L1085.7 1397.0 L1092.4 1388.0 L1099.1 1397.0 L1105.8 1406.0 L1112.5 1397.0 L1119.3 1388.0 L1126.0 1397.0 L1132.7 1388.0 L1139.4 1397.0 L1146.1 1388.0 L1152.9 1379.0 L1159.6 1370.0 L1166.3 1361.0 L1173.0 1370.0 L1179.7 1361.0 L1186.5 1370.0 L1193.2 1379.0 L1199.9 1370.0 L1206.6 1361.0 L1213.3 1352.0 L1220.1 1343.0 L1226.8 1334.0 L1233.5 1325.0 L1240.2 1334.0 L1246.9 1325.0 L1253.7 1316.0 L1260.4 1307.0 L1267.1 1316.0 L1273.8 1307.0 L1280.5 1298.0 L1287.3 1289.0 L1294.0 1280.0 L1300.7 1289.0 L1307.4 1280.0 L1314.1 1271.0 L1320.9 1262.0 L1327.6 1253.0" stroke="#17becf"/><path d="M662.3 1496.0 L669.0 1505.0 L675.7 1496.0 L682.5 1487.0 L689.2 1496.0 L695.9 1487.0 L702.6 1478.0 L709.3 1469.0 L716.1 1478.0 L722.8 1469.0 L729.5 1478.0 L736.2 1469.0 L742.9 1460.0 L749.7 1451.0 L756.4 1460.0 L763.1 1451.0 L769.8 1442.0 L776.5 1433.0 L783.3 1442.0 L790.0 1433.0 L796.7 1424.0 L803.4 1415.0 L810.1 1406.0 L816.9 1415.0 L823.6 1406.0 L830.3 1397.0 L837.0 1388.0 L843.7 1379.0 L850.5 1370.0 L857.2 1361.0 L863.9 1370.0 L870.6 1361.0 L877.3 1352.0 L884.1 1343.0 L890.8 1352.0 L897.5 1343.0 L904.2 1334.0 L910.9 1343.0 L917.7 1352.0 L924.4 1361.0 L931.1 1352.0 L937.8 1361.0 L944.5 1352.0 L951.3 1343.0 L958.0 1352.0 L964.7 1361.0 L971.4 1370.0 L978.1 1361.0 L984.9 1352.0 L991.6 1361.0 L998.3 1352.0 L1005.0 1361.0 L1011.7 1352.0 L1018.5 1361.0 L1025.2 1352.0 L1031.9 1343.0 L1038.6 1352.0 L1045.3 1343.0 L1052.1 1334.0 L1058.8 1325.0 L1065.5 1334.0 L1072.2 1343.0 L1078.9 1334.0 L1085.7 1343.0 L1092.4 1334.0 L1099.1 1343.0 L1105.8 1334.0 L1112.5 1343.0 L1119.3 1352.0 L1126.0 1343.0 L1132.7 1352.0 L1139.4 1343.0 L1146.1 1352.0 L1152.9 1343.0 L1159.6 1352.0 L1166.3 1343.0 L1173.0 1352.0 L1179.7 1343.0 L1186.5 1352.0 L1193.2 1361.0 L1199.9 1352.0 L1206.6 1361.0 L1213.3 1352.0 L1220.1 1343.0 L1226.8 1334.0 L1233.5 1325.0 L1240.2 1316.0 L1246.9 1325.0 L1253.7 1316.0 L1260.4 1307.0 L1267.1 1298.0 L1273.8 1289.0 L1280.5 1298.0 L1287.3 1289.0 L1294.0 1298.0 L1300.7 1307.0 L1307.4 1298.0 L1314.1 1307.0 L1320.9 1298.0 L1327.6 1307.0" stroke="#1f77b4"/><path d="M662.3 1514.0 L669.0 1505.0 L675.7 1514.0 L682.5 1505.0 L689.2 1496.0 L695.9 1505.0 L702.6 1514.0 L709.3 1505.0 L716.1 1496.0 L722.8 1487.0 L729.5 1478.0 L736.2 1487.0 L742.9 1478.0 L749.7 1469.0 L756.4 1478.0 L763.1 1469.0 L769.8 1460.0 L776.5 1469.0 L783.3 1460.0 L790.0 1451.0 L796.7 1442.0 L803.4 1451.0 L810.1 1442.0 L816.9 1433.0 L823.6 1424.0 L830.3 1415.0 L837.0 1406.0 L843.7 1415.0 L850.5 1424.0 L857.2 1415.0 L863.9 1406.0 L870.6 1415.0 L877.3 1406.0 L884.1 1415.0 L890.8 1424.0 L897.5 1415.0 L904.2 1424.0 L910.9 1415.0 L917.7 1424.0 L924.4 1415.0 L931.1 1406.0 L937.8 1397.0 L944.5 1388.0 L951.3 1397.0 L958.0 1388.0 L964.7 1397.0 L971.4 1406.0 L978.1 1415.0 L984.9 1406.0 L991.6 1397.0 L998.3 1388.0 L1005.0 1379.0 L1011.7 1388.0 L1018.5 1379.0 L1025.2 1388.0 L1031.9 1379.0 L1038.6 1388.0 L1045.3 1379.0 L1052.1 1370.0 L1058.8 1361.0 L1065.5 1370.0 L1072.2 1361.0 L1078.9 1352.0 L1085.7 1361.0 L1092.4 1370.0 L1099.1 1361.0 L1105.8 1352.0 L1112.5 1361.0 L1119.3 1352.0 L1126.0 1343.0 L1132.7 1334.0 L1139.4 1325.0 L1146.1 1334.0 L1152.9 1343.0 L1159.6 1334.0 L1166.3 1325.0 L1173.0 1316.0 L1179.7 1325.0 L1186.5 1316.0 L1193.2 1307.0 L1199.9 1316.0 L1206.6 1307.0 L1213.3 1298.0 L1220.1 1289.0 L1226.8 1280.0 L1233.5 1271.0 L1240.2 1262.0 L1246.9 1253.0 L1253.7 1244.0 L1260.4 1235.0 L1267.1 1244.0 L1273.8 1253.0 L1280.5 1262.0 L1287.3 1253.0 L1294.0 1244.0 L1300.7 1253.0 L1307.4 1244.0 L1314.1 1253.0 L1320.9 1244.0 L1327.6 1253.0" stroke="#ff7f0e"/><path d="M662.3 1514.0 L669.0 1505.0 L675.7 1496.0 L682.5 1505.0 L689.2 1496.0 L695.9 1505.0 L702.6 1496.0 L709.3 1505.0 L716.1 1496.0 L722.8 1505.0 L729.5 1514.0 L736.2 1523.0 L742.9 1532.0 L749.7 1541.0 L756.4 1550.0 L763.1 1559.0 L769.8 1550.0 L776.5 1559.0 L783.3 1550.0 L790.0 1559.0 L796.7 1550.0 L803.4 1559.0 L810.1 1550.0 L816.9 1559.0 L823.6 1550.0 L830.3 1559.0 L837.0 1568.0 L843.7 1577.0 L850.5 1568.0 L857.2 1577.0 L863.9 1586.0 L870.6 1595.0 L877.3 1586.0 L884.1 1577.0 L890.8 1568.0 L897.5 1577.0 L904.2 1568.0 L910.9 1559.0 L917.7 1550.0 L924.4 1541.0 L931.1 1532.0 L937.8 1523.0 L944.5 1514.0 L951.3 1505.0 L958.0 1496.0 L964.7 1505.0 L971.4 1514.0 L978.1 1505.0 L984.9 1496.0 L991.6 1487.0 L998.3 1478.0 L1005.0 1469.0 L1011.7 1460.0 L1018.5 1451.0 L1025.2 1442.0 L1031.9 1433.0 L1038.6 1442.0 L1045.3 1451.0 L1052.1 1460.0 L1058.8 1451.0 L1065.5 1442.0 L1072.2 1433.0 L1078.9 1424.0 L1085.7 1415.0 L1092.4 1406.0 L1099.1 1397.0 L1105.8 1388.0 L1112.5 1397.0 L1119.3 1406.0 L1126.0 1415.0 L1132.7 1424.0 L1139.4 1415.0 L1146.1 1406.0 L1152.9 1397.0 L1159.6 1388.0 L1166.3 1379.0 L1173.0 1370.0 L1179.7 1361.0 L1186.5 1352.0 L1193.2 1361.0 L1199.9 1352.0 L1206.6 1361.0 L1213.3 1370.0 L1220.1 1379.0 L1226.8 1388.0 L1233.5 1379.0 L1240.2 1370.0 L1246.9 1361.0 L1253.7 1352.0 L1260.4 1343.0 L1267.1 1334.0 L1273.8 1343.0 L1280.5 1334.0 L1287.3 1343.0 L1294.0 1352.0 L1300.7 1361.0 L1307.4 1370.0 L1314.1 1361.0 L1320.9 1370.0 L1327.6 1361.0" stroke="#2ca02c"/><path d="M662.3 1496.0 L669.0 1487.0 L675.7 1478.0 L682.5 1469.0 L689.2 1460.0 L695.9 1451.0 L702.6 1442.0 L709.3 1433.0 L716.1 1424.0 L722.8 1415.0 L729.5 1406.0 L736.2 1397.0 L742.9 1388.0 L749.7 1379.0 L756.4 1370.0 L763.1 1379.0 L769.8 1370.0 L776.5 1379.0 L783.3 1388.0 L790.0 1379.0 L796.7 1370.0 L803.4 1361.0 L810.1 1352.0 L816.9 1343.0 L823.6 1334.0 L830.3 1325.0 L837.0 1316.0 L843.7 1325.0 L850.5 1316.0 L857.2 1307.0 L863.9 1316.0 L870.6 1325.0 L877.3 1316.0 L884.1 1325.0 L890.8 1316.0 L897.5 1307.0 L904.2 1298.0 L910.9 1289.0 L917.7 1280.0 L924.4 1271.0 L931.1 1262.0 L937.8 1253.0 L944.5 1244.0 L951.3 1235.0 L958.0 1226.0 L964.7 1217.0 L971.4 1208.0 L978.1 1217.0 L984.9 1208.0 L991.6 1217.0 L998.3 1208.0 L1005.0 1217.0 L1011.7 1226.0 L1018.5 1235.0 L1025.2 1244.0 L1031.9 1235.0 L1038.6 1244.0 L1045.3 1235.0 L1052.1 1226.0 L1058.8 1217.0 L1065.5 1208.0 L1072.2 1217.0 L1078.9 1226.0 L1085.7 1217.0 L1092.4 1208.0 L1099.1 1199.0 L1105.8 1190.0 L1112.5 1199.0 L1119.3 1208.0 L1126.0 1217.0 L1132.7 1208.0 L1139.4 1199.0 L1146.1 1190.0 L1152.9 1199.0 L1159.6 1190.0 L1166.3 1181.0 L1173.0 1172.0 L1179.7 1163.0 L1186.5 1154.0 L1193.2 1163.0 L1199.9 1154.0 L1206.6 1163.0 L1213.3 1154.0 L1220.1 1145.0 L1226.8 1154.0 L1233.5 1145.0 L1240.2 1136.0 L1246.9 1145.0 L1253.7 1136.0 L1260.4 1127.0 L1267.1 1118.0 L1273.8 1127.0 L1280.5 1136.0 L1287.3 1145.0 L1294.0 1154.0 L1300.7 1145.0 L1307.4 1136.0 L1314.1 1127.0 L1320.9 1136.0 L1327.6 1127.0" stroke="#d62728"/><path d="M662.3 1496.0 L669.0 1505.0 L675.7 1496.0 L682.5 1505.0 L689.2 1514.0 L695.9 1505.0 L702.6 1496.0 L709.3 1505.0 L716.1 1514.0 L722.8 1523.0 L729.5 1514.0 L736.2 1523.0 L742.9 1514.0 L749.7 1523.0 L756.4 1514.0 L763.1 1523.0 L769.8 1532.0 L776.5 1541.0 L783.3 1532.0 L790.0 1541.0 L796.7 1532.0 L803.4 1523.0 L810.1 1532.0 L816.9 1523.0 L823.6 1514.0 L830.3 1505.0 L837.0 1496.0 L843.7 1505.0 L850.5 1496.0 L857.2 1505.0 L863.9 1514.0 L870.6 1523.0 L877.3 1514.0 L884.1 1523.0 L890.8 1514.0 L897.5 1505.0 L904.2 1496.0 L910.9 1505.0 L917.7 1496.0 L924.4 1487.0 L931.1 1478.0 L937.8 1469.0 L944.5 1460.0 L951.3 1451.0 L958.0 1442.0 L964.7 1433.0 L971.4 1424.0 L978.1 1415.0 L984.9 1406.0 L991.6 1397.0 L998.3 1406.0 L1005.0 1415.0 L1011.7 1406.0 L1018.5 1415.0 L1025.2 1406.0 L1031.9 1415.0 L1038.6 1406.0 L1045.3 1397.0 L1052.1 1388.0 L1058.8 1379.0 L1065.5 1370.0 L1072.2 1361.0 L1078.9 1370.0 L1085.7 1361.0 L1092.4 1352.0 L1099.1 1361.0 L1105.8 1352.0 L1112.5 1343.0 L1119.3 1352.0 L1126.0 1361.0 L1132.7 1352.0 L1139.4 1361.0 L1146.1 1352.0 L1152.9 1343.0 L1159.6 1352.0 L1166.3 1361.0 L1173.0 1352.0 L1179.7 1361.0 L1186.5 1352.0 L1193.2 1361.0 L1199.9 1352.0 L1206.6 1343.0 L1213.3 1334.0 L1220.1 1325.0 L1226.8 1334.0 L1233.5 1343.0 L1240.2 1352.0 L1246.9 1361.0 L1253.7 1370.0 L1260.4 1379.0 L1267.1 1388.0 L1273.8 1379.0 L1280.5 1370.0 L1287.3 1361.0 L1294.0 1370.0 L1300.7 1361.0 L1307.4 1352.0 L1314.1 1343.0 L1320.9 1334.0 L1327.6 1343.0" stroke="#9467bd"/><path d="M662.3 1514.0 L669.0 1505.0 L675.7 1514.0 L682.5 1505.0 L689.2 1514.0 L695.9 1505.0 L702.6 1514.0 L709.3 1505.0 L716.1 1496.0 L722.8 1487.0 L729.5 1496.0 L736.2 1505.0 L742.9 1496.0 L749.7 1487.0 L756.4 1478.0 L763.1 1487.0 L769.8 1496.0 L776.5 1487.0 L783.3 1478.0 L790.0 1469.0 L796.7 1460.0 L803.4 1451.0 L810.1 1442.0 L816.9 1433.0 L823.6 1424.0 L830.3 1433.0 L837.0 1424.0 L843.7 1415.0 L850.5 1406.0 L857.2 1397.0 L863.9 1388.0 L870.6 1379.0 L877.3 1388.0 L884.1 1379.0 L890.8 1370.0 L897.5 1379.0 L904.2 1388.0 L910.9 1379.0 L917.7 1388.0 L924.4 1379.0 L931.1 1388.0 L937.8 1397.0 L944.5 1388.0 L951.3 1397.0 L958.0 1406.0 L964.7 1397.0 L971.4 1406.0 L978.1 1415.0 L984.9 1406.0 L991.6 1397.0 L998.3 1388.0 L1005.0 1379.0 L1011.7 1388.0 L1018.5 1379.0 L1025.2 1388.0 L1031.9 1379.0 L1038.6 1388.0 L1045.3 1379.0 L1052.1 1388.0 L1058.8 1379.0 L1065.5 1370.0 L1072.2 1361.0 L1078.9 1352.0 L1085.7 1361.0 L1092.4 1352.0 L1099.1 1343.0 L1105.8 1334.0 L1112.5 1325.0 L1119.3 1334.0 L1126.0 1325.0 L1132.7 1316.0 L1139.4 1307.0 L1146.1 1298.0 L1152.9 1307.0 L1159.6 1298.0 L1166.3 1289.0 L1173.0 1298.0 L1179.7 1307.0 L1186.5 1298.0 L1193.2 1307.0 L1199.9 1298.0 L1206.6 1289.0 L1213.3 1280.0 L1220.1 1271.0 L1226.8 1262.0 L1233.5 1253.0 L1240.2 1244.0 L1246.9 1253.0 L1253.7 1244.0 L1260.4 1235.0 L1267.1 1226.0 L1273.8 1235.0 L1280.5 1244.0 L1287.3 1253.0 L1294.0 1262.0 L1300.7 1253.0 L1307.4 1262.0 L1314.1 1271.0 L1320.9 1262.0 L1327.6 1271.0" stroke="#8c564b"/><path d="M662.3 1496.0 L669.0 1487.0 L675.7 1478.0 L682.5 1487.0 L689.2 1478.0 L695.9 1469.0 L702.6 1460.0 L709.3 1451.0 L716.1 1442.0 L722.8 1433.0 L729.5 1424.0 L736.2 1433.0 L742.9 1424.0 L749.7 1433.0 L756.4 1424.0 L763.1 1433.0 L769.8 1424.0 L776.5 1415.0 L783.3 1406.0 L790.0 1397.0 L796.7 1406.0 L803.4 1397.0 L810.1 1388.0 L816.9 1379.0 L823.6 1370.0 L830.3 1361.0 L837.0 1352.0 L843.7 1343.0 L850.5 1352.0 L857.2 1343.0 L863.9 1352.0 L870.6 1343.0 L877.3 1334.0 L884.1 1325.0 L890.8 1316.0 L897.5 1307.0 L904.2 1298.0 L910.9 1289.0 L917.7 1298.0 L924.4 1289.0 L931.1 1280.0 L937.8 1271.0 L944.5 1262.0 L951.3 1253.0 L958.0 1262.0 L964.7 1253.0 L971.4 1244.0 L978.1 1253.0 L984.9 1244.0 L991.6 1253.0 L998.3 1262.0 L1005.0 1271.0 L1011.7 1280.0 L1018.5 1271.0 L1025.2 1280.0 L1031.9 1271.0 L1038.6 1280.0 L1045.3 1289.0 L1052.1 1280.0 L1058.8 1289.0 L1065.5 1298.0 L1072.2 1289.0 L1078.9 1280.0 L1085.7 1289.0 L1092.4 1298.0 L1099.1 1307.0 L1105.8 1298.0 L1112.5 1289.0 L1119.3 1280.0 L1126.0 1289.0 L1132.7 1280.0 L1139.4 1289.0 L1146.1 1298.0 L1152.9 1289.0 L1159.6 1298.0 L1166.3 1289.0 L1173.0 1280.0 L1179.7 1289.0 L1186.5 1280.0 L1193.2 1271.0 L1199.9 1262.0 L1206.6 1253.0 L1213.3 1244.0 L1220.1 1235.0 L1226.8 1226.0 L1233.5 1217.0 L1240.2 1226.0 L1246.9 1235.0 L1253.7 1226.0 L1260.4 1235.0 L1267.1 1244.0 L1273.8 1253.0 L1280.5 1262.0 L1287.3 1253.0 L1294.0 1262.0 L1300.7 1271.0 L1307.4 1262.0 L1314.1 1253.0 L1320.9 1262.0 L1327.6 1253.0" stroke="#e377c2"/><path d="M662.3 1514.0 L669.0 1523.0 L675.7 1532.0 L682.5 1541.0 L689.2 1532.0 L695.9 1523.0 L702.6 1514.0 L709.3 1505.0 L716.1 1496.0 L722.8 1505.0 L729.5 1496.0 L736.2 1505.0 L742.9 1496.0 L749.7 1505.0 L756.4 1496.0 L763.1 1487.0 L769.8 1478.0 L776.5 1487.0 L783.3 1496.0 L790.0 1487.0 L796.7 1478.0 L803.4 1469.0 L810.1 1478.0 L816.9 1469.0 L823.6 1478.0 L830.3 1487.0 L837.0 1478.0 L843.7 1469.0 L850.5 1478.0 L857.2 1469.0 L863.9 1478.0 L870.6 1469.0 L877.3 1478.0 L884.1 1469.0 L890.8 1460.0 L897.5 1451.0 L904.2 1442.0 L910.9 1433.0 L917.7 1442.0 L924.4 1451.0 L931.1 1460.0 L937.8 1469.0 L944.5 1460.0 L951.3 1451.0 L958.0 1460.0 L964.7 1451.0 L971.4 1460.0 L978.1 1469.0 L984.9 1478.0 L991.6 1487.0 L998.3 1478.0 L1005.0 1469.0 L1011.7 1460.0 L1018.5 1451.0 L1025.2 1442.0 L1031.9 1433.0 L1038.6 1424.0 L1045.3 1415.0 L1052.1 1406.0 L1058.8 1415.0 L1065.5 1424.0 L1072.2 1415.0 L1078.9 1424.0 L1085.7 1415.0 L1092.4 1406.0 L1099.1 1397.0 L1105.8 1388.0 L1112.5 1397.0 L1119.3 1388.0 L1126.0 1379.0 L1132.7 1370.0 L1139.4 1379.0 L1146.1 1370.0 L1152.9 1379.0 L1159.6 1388.0 L1166.3 1397.0 L1173.0 1388.0 L1179.7 1379.0 L1186.5 1388.0 L1193.2 1397.0 L1199.9 1388.0 L1206.6 1379.0 L1213.3 1370.0 L1220.1 1379.0 L1226.8 1370.0 L1233.5 1361.0 L1240.2 1370.0 L1246.9 1361.0 L1253.7 1352.0 L1260.4 1343.0 L1267.1 1334.0 L1273.8 1343.0 L1280.5 1334.0 L1287.3 1325.0 L1294.0 1316.0 L1300.7 1307.0 L1307.4 1316.0 L1314.1 1307.0 L1320.9 1298.0 L1327.6 1289.0" stroke="#7f7f7f"/><path d="M662.3 1496.0 L669.0 1487.0 L675.7 1496.0 L682.5 1487.0 L689.2 1478.0 L695.9 1469.0 L702.6 1460.0 L709.3 1451.0 L716.1 1460.0 L722.8 1451.0 L729.5 1460.0 L736.2 1451.0 L742.9 1442.0 L749.7 1451.0 L756.4 1460.0 L763.1 1451.0 L769.8 1442.0 L776.5 1433.0 L783.3 1424.0 L790.0 1415.0 L796.7 1424.0 L803.4 1415.0 L810.1 1406.0 L816.9 1415.0 L823.6 1406.0 L830.3 1397.0 L837.0 1388.0 L843.7 1379.0 L850.5 1388.0 L857.2 1379.0 L863.9 1370.0 L870.6 1379.0 L877.3 1388.0 L884.1 1397.0 L890.8 1388.0 L897.5 1379.0 L904.2 1370.0 L910.9 1379.0 L917.7 1388.0 L924.4 1379.0 L931.1 1370.0 L937.8 1361.0 L944.5 1352.0 L951.3 1361.0 L958.0 1370.0 L964.7 1379.0 L971.4 1388.0 L978.1 1379.0 L984.9 1370.0 L991.6 1361.0 L998.3 1352.0 L1005.0 1343.0 L1011.7 1334.0 L1018.5 1325.0 L1025.2 1334.0 L1031.9 1343.0 L1038.6 1352.0 L1045.3 1343.0 L1052.1 1334.0 L1058.8 1325.0 L1065.5 1334.0 L1072.2 1325.0 L1078.9 1334.0 L1085.7 1343.0 L1092.4 1352.0 L1099.1 1361.0 L1105.8 1370.0 L1112.5 1361.0 L1119.3 1352.0 L1126.0 1361.0 L1132.7 1370.0 L1139.4 1361.0 L1146.1 1352.0 L1152.9 1361.0 L1159.6 1370.0 L1166.3 1361.0 L1173.0 1352.0 L1179.7 1343.0 L1186.5 1352.0 L1193.2 1343.0 L1199.9 1334.0 L1206.6 1343.0 L1213.3 1334.0 L1220.1 1343.0 L1226.8 1334.0 L1233.5 1343.0 L1240.2 1334.0 L1246.9 1325.0 L1253.7 1316.0 L1260.4 1325.0 L1267.1 1334.0 L1273.8 1325.0 L1280.5 1334.0 L1287.3 1325.0 L1294.0 1316.0 L1300.7 1307.0 L1307.4 1316.0 L1314.1 1307.0 L1320.9 1316.0 L1327.6 1307.0" stroke="#bcbd22"/><path d="M662.3 1514.0 L669.0 1523.0 L675.7 1532.0 L682.5 1541.0 L689.2 1532.0 L695.9 1523.0 L702.6 1532.0 L709.3 1541.0 L716.1 1550.0 L722.8 1559.0 L729.5 1568.0 L736.2 1559.0 L742.9 1568.0 L749.7 1559.0 L756.4 1568.0 L763.1 1559.0 L769.8 1568.0 L776.5 1559.0 L783.3 1568.0 L790.0 1559.0 L796.7 1550.0 L803.4 1541.0 L810.1 1532.0 L816.9 1523.0 L823.6 1532.0 L830.3 1523.0 L837.0 1532.0 L843.7 1541.0 L850.5 1550.0 L857.2 1559.0 L863.9 1568.0 L870.6 1577.0 L877.3 1586.0 L884.1 1595.0 L890.8 1604.0 L897.5 1595.0 L904.2 1586.0 L910.9 1595.0 L917.7 1604.0 L924.4 1613.0 L931.1 1604.0 L937.8 1595.0 L944.5 1586.0 L951.3 1595.0 L958.0 1586.0 L964.7 1595.0 L971.4 1586.0 L978.1 1577.0 L984.9 1568.0 L991.6 1577.0 L998.3 1586.0 L1005.0 1577.0 L1011.7 1568.0 L1018.5 1559.0 L1025.2 1568.0 L1031.9 1559.0 L1038.6 1568.0 L1045.3 1559.0 L1052.1 1550.0 L1058.8 1541.0 L1065.5 1550.0 L1072.2 1559.0 L1078.9 1550.0 L1085.7 1559.0 L1092.4 1550.0 L1099.1 1559.0 L1105.8 1550.0 L1112.5 1559.0 L1119.3 1550.0 L1126.0 1559.0 L1132.7 1550.0 L1139.4 1559.0 L1146.1 1550.0 L1152.9 1541.0 L1159.6 1532.0 L1166.3 1523.0 L1173.0 1532.0 L1179.7 1541.0 L1186.5 1532.0 L1193.2 1523.0 L1199.9 1514.0 L1206.6 1523.0 L1213.3 1514.0 L1220.1 1505.0 L1226.8 1496.0 L1233.5 1505.0 L1240.2 1514.0 L1246.9 1523.0 L1253.7 1514.0 L1260.4 1523.0 L1267.1 1532.0 L1273.8 1541.0 L1280.5 1532.0 L1287.3 1523.0 L1294.0 1532.0 L1300.7 1541.0 L1307.4 1532.0 L1314.1 1541.0 L1320.9 1550.0 L1327.6 1559.0" stroke="#17becf"/></g>
<rect x="629" y="1093" width="732" height="545" fill="none" stroke="#333" stroke-width="1.8"/>
<g font-family="Liberation Sans, sans-serif"><line x1="622" y1="1595.0" x2="629" y2="1595.0" stroke="#222" stroke-width="1.6"/><text x="612.5" y="1602.8" text-anchor="end" font-size="20.5" fill="#222" stroke="#222" stroke-width="0.45">−10</text><line x1="622" y1="1505.0" x2="629" y2="1505.0" stroke="#222" stroke-width="1.6"/><text x="612.5" y="1512.8" text-anchor="end" font-size="20.5" fill="#222" stroke="#222" stroke-width="0.45">0</text><line x1="622" y1="1415.0" x2="629" y2="1415.0" stroke="#222" stroke-width="1.6"/><text x="612.5" y="1422.8" text-anchor="end" font-size="20.5" fill="#222" stroke="#222" stroke-width="0.45">10</text><line x1="622" y1="1325.0" x2="629" y2="1325.0" stroke="#222" stroke-width="1.6"/><text x="612.5" y="1332.8" text-anchor="end" font-size="20.5" fill="#222" stroke="#222" stroke-width="0.45">20</text><line x1="622" y1="1235.0" x2="629" y2="1235.0" stroke="#222" stroke-width="1.6"/><text x="612.5" y="1242.8" text-anchor="end" font-size="20.5" fill="#222" stroke="#222" stroke-width="0.45">30</text><line x1="622" y1="1145.0" x2="629" y2="1145.0" stroke="#222" stroke-width="1.6"/><text x="612.5" y="1152.8" text-anchor="end" font-size="20.5" fill="#222" stroke="#222" stroke-width="0.45">40</text><line x1="662.3" y1="1638" x2="662.3" y2="1645" stroke="#222" stroke-width="1.6"/><text x="662.3" y="1668.5" text-anchor="middle" font-size="20.5" fill="#222" stroke="#222" stroke-width="0.45">0</text><line x1="796.7" y1="1638" x2="796.7" y2="1645" stroke="#222" stroke-width="1.6"/><text x="796.7" y="1668.5" text-anchor="middle" font-size="20.5" fill="#222" stroke="#222" stroke-width="0.45">20</text><line x1="931.1" y1="1638" x2="931.1" y2="1645" stroke="#222" stroke-width="1.6"/><text x="931.1" y="1668.5" text-anchor="middle" font-size="20.5" fill="#222" stroke="#222" stroke-width="0.45">40</text><line x1="1065.5" y1="1638" x2="1065.5" y2="1645" stroke="#222" stroke-width="1.6"/><text x="1065.5" y="1668.5" text-anchor="middle" font-size="20.5" fill="#222" stroke="#222" stroke-width="0.45">60</text><line x1="1199.9" y1="1638" x2="1199.9" y2="1645" stroke="#222" stroke-width="1.6"/><text x="1199.9" y="1668.5" text-anchor="middle" font-size="20.5" fill="#222" stroke="#222" stroke-width="0.45">80</text><line x1="1334.3" y1="1638" x2="1334.3" y2="1645" stroke="#222" stroke-width="1.6"/><text x="1334.3" y="1668.5" text-anchor="middle" font-size="20.5" fill="#222" stroke="#222" stroke-width="0.45">100</text></g>
</svg>
<!-- cell 7 -->
<div class="cell" style="top:1708px;height:40px"></div>
<div class="prompt" style="top:1716px">[7]:</div>
<div class="code" style="top:1716px">random_walk<span class="g">[</span>:, <span class="o">-</span><span class="n">1</span><span class="g">]</span>.<span class="f">mean</span>()</div>
<div class="prompt" style="top:1766px">[7]:</div>
<div class="code" style="top:1766px">19.1</div>
<!-- cell 8 -->
<div class="cell" style="top:1812.6px;height:60px"></div>
<div class="prompt" style="top:1820.2px">[8]:</div>
<div class="code" style="top:1820.2px">random_walk<span class="g">[</span>:, <span class="o">-</span><span class="n">1</span><span class="g">]</span>.<span class="f">std</span>()</div>
<div id="bottombar" class="abs"></div>
</body></html>
